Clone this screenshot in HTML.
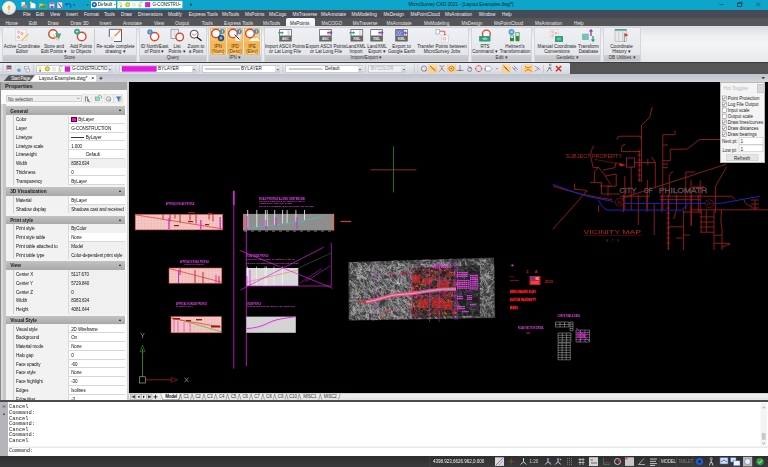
<!DOCTYPE html>
<html><head><meta charset="utf-8"><style>
*{margin:0;padding:0;box-sizing:border-box}
html,body{width:768px;height:467px;overflow:hidden;background:#000;font-family:"Liberation Sans",sans-serif;color:#222}
.a{position:absolute}
.t{position:absolute;white-space:nowrap}
svg{position:absolute;overflow:visible}
.menu span{position:absolute;top:1.1px;font-size:4.7px;color:#f0f0f0;line-height:8.2px;white-space:nowrap}
.tabs span{position:absolute;top:2.1px;font-size:4.7px;color:#e6e6e6;line-height:8px;white-space:nowrap}
.grp{position:absolute;top:26.7px;height:35.3px;background:linear-gradient(#eff0f3,#e6e8ec 60%,#e2e4e8);border:0.5px solid #d4d6da;border-radius:1px}
.glab{position:absolute;left:0;right:0;bottom:0;height:6.1px;background:linear-gradient(#cdcfd3,#c2c4c9);font-size:4.6px;line-height:6.1px;text-align:center;color:#333}
.bl{position:absolute;font-size:4.6px;line-height:5.2px;text-align:center;color:#1e1e1e;white-space:nowrap;transform:translateX(-50%)}
.pr{position:absolute;left:12.5px;width:112.1px;height:8.75px;background:#fff;border-bottom:1px solid #d6d6d6;border-left:1px solid #d0d0d0}
.pr .n{position:absolute;left:0;top:0;width:55.9px;height:8.75px;background:#f2f2f2;border-right:1px solid #dadada;font-size:4.5px;letter-spacing:-0.1px;line-height:8.4px;padding-top:1.2px;padding-left:2.6px;color:#111;white-space:nowrap;overflow:hidden}
.pr .v{position:absolute;left:55.9px;top:0;width:56.2px;height:8.75px;font-size:4.5px;letter-spacing:-0.1px;line-height:8.4px;padding-top:1.2px;padding-left:1.8px;color:#111;white-space:nowrap;overflow:hidden}
.ph{position:absolute;left:6.2px;width:118.4px;height:8.6px;background:linear-gradient(#c2c2c2,#a9a9a9);font-size:4.75px;font-weight:bold;line-height:8.6px;padding-top:1.2px;padding-left:4px;color:#1a1a1a}
.ph:after{content:"";position:absolute;right:3.8px;top:3px;border-left:1.9px solid transparent;border-right:1.9px solid transparent;border-bottom:2.2px solid #111}
</style></head><body>
<div class="a" style="left:0;top:0;width:768px;height:9.5px;background:#0da5c9"></div>
<div class="t" style="left:408.6px;top:0;height:9.5px;font-size:4.75px;line-height:9.5px;color:#10243a">MicroSurvey CAD 2021 - [Layout Examples.dwg*]</div>
<svg style="left:0;top:0" width="768" height="10" viewBox="0 0 768 10"><path d="M719.4 4.6H723.6" stroke="#123a4a" stroke-width="0.7"/><rect x="737.5" y="3.2" width="3.8" height="3.2" fill="none" stroke="#123a4a" stroke-width="0.8"/><path d="M738.5 3.2V2.3H742.1V5.5H741.3" stroke="#123a4a" stroke-width="0.6" fill="none"/><path d="M756.3 2.6L760.1 6.4M760.1 2.6L756.3 6.4" stroke="#123a4a" stroke-width="0.6"/></svg>

<div class="a menu" style="left:0;top:9.5px;width:768px;height:8.2px;background:#474b55">
 <span style="left:23px">File</span><span style="left:36px">Edit</span><span style="left:50px">View</span><span style="left:66px">Insert</span><span style="left:84px">Format</span><span style="left:104px">Tools</span><span style="left:121px">Draw</span><span style="left:138px">Dimensions</span><span style="left:168px">Modify</span><span style="left:188.7px">Express Tools</span><span style="left:222px">MsTools</span><span style="left:245px">MsPoints</span><span style="left:269px">MsCogo</span><span style="left:292.6px">MsTraverse</span><span style="left:321px">MsAnnotate</span><span style="left:351.5px">MsModeling</span><span style="left:383.4px">MsDesign</span><span style="left:410.6px">MsPointCloud</span><span style="left:445px">MsAnimation</span><span style="left:478.7px">Window</span><span style="left:502px">Help</span>
</div>
<div class="a tabs" style="left:0;top:17.7px;width:768px;height:8px;background:#555658">
 <div class="a" style="left:285.7px;top:0.6px;width:29.3px;height:7.4px;background:linear-gradient(#fbfbfc,#eef0f3);border-radius:1.5px 1.5px 0 0"></div>
 <span style="left:5.4px">Home</span><span style="left:29px">Edit</span><span style="left:47.8px">Draw</span><span style="left:70.5px">Draw 3D</span><span style="left:99.5px">Insert</span><span style="left:123px">Annotate</span><span style="left:154px">View</span><span style="left:175px">Output</span><span style="left:201.8px">Tools</span><span style="left:224px">Express Tools</span><span style="left:263px">MsTools</span><span style="left:290px;color:#222">MsPoints</span><span style="left:321.6px">MsCOGO</span><span style="left:352.8px">MsTraverse</span><span style="left:386.6px">MsAnnotate</span><span style="left:424px">MsModeling</span><span style="left:461.6px">MsDesign</span><span style="left:494px">MsPointCloud</span><span style="left:535px">MsAnimation</span><span style="left:574px">Help</span>
</div>

<div class="a" style="left:0;top:25.7px;width:768px;height:36px;background:linear-gradient(#d9dbe0,#eceef1 25%,#f3f4f6 50%,#e6e8eb)"></div>
<div class="grp" style="left:1.8px;width:135.5px"><div class="glab">Store</div></div>
<div class="grp" style="left:139px;width:67.80000000000001px"><div class="glab">Query</div></div>
<div class="grp" style="left:208.1px;width:54.29999999999998px"><div class="glab">IPN &#9662;</div></div>
<div class="grp" style="left:263.5px;width:205.7px"><div class="glab">Import/Export &#9662;</div></div>
<div class="grp" style="left:471px;width:61.39999999999998px"><div class="glab">Edit &#9662;</div></div>
<div class="grp" style="left:534px;width:67.20000000000005px"><div class="glab">Geodetic &#9662;</div></div>
<div class="grp" style="left:602.8px;width:38.700000000000045px"><div class="glab">DB Utilities &#9662;</div></div>
<div class="a" style="left:94px;top:29px;width:0.6px;height:24px;background:#c9cbd0"></div>
<div class="a" style="left:210px;top:28px;width:16px;height:26.5px;background:linear-gradient(#fde2a4,#fbcc78 30%,#f8b24a 62%,#f9bc58 85%,#fcd68e);border:0.4px solid #f0b860"></div>
<div class="a" style="left:226.5px;top:28px;width:16.80000000000001px;height:26.5px;background:linear-gradient(#fde2a4,#fbcc78 30%,#f8b24a 62%,#f9bc58 85%,#fcd68e);border:0.4px solid #f0b860"></div>
<div class="a" style="left:243.8px;top:28px;width:16.69999999999999px;height:26.5px;background:linear-gradient(#fde2a4,#fbcc78 30%,#f8b24a 62%,#f9bc58 85%,#fcd68e);border:0.4px solid #f0b860"></div>
<div class="bl" style="left:22px;top:43.6px">Active Coordinate<br>Editor</div>
<div class="bl" style="left:54px;top:43.6px">Store and<br>Edit Points &#9662;</div>
<div class="bl" style="left:81px;top:43.6px">Add Points<br>to Objects</div>
<div class="bl" style="left:115.5px;top:43.6px">Re-scale complete<br>drawing &#9662;</div>
<div class="bl" style="left:154.5px;top:43.6px">ID North/East<br>of Point &#9662;</div>
<div class="bl" style="left:177px;top:43.6px">List<br>Points &#9662;</div>
<div class="bl" style="left:196px;top:43.6px">Zoom to<br>a Point</div>
<div class="bl" style="left:218px;top:43.6px;color:#5a3c14">IPN<br>(Num)</div>
<div class="bl" style="left:235px;top:43.6px;color:#5a3c14">IPD<br>(Desc)</div>
<div class="bl" style="left:252px;top:43.6px;color:#5a3c14">IPE<br>(Elev)</div>
<div class="bl" style="left:285px;top:43.6px">Import ASCII Points<br>or Lat Long File</div>
<div class="bl" style="left:326px;top:43.6px">Export ASCII Points<br>or Lat Long File</div>
<div class="bl" style="left:356px;top:43.6px">LandXML<br>Import</div>
<div class="bl" style="left:377px;top:43.6px">LandXML<br>Export &#9662;</div>
<div class="bl" style="left:401.5px;top:43.6px">Export to<br>Google Earth</div>
<div class="bl" style="left:442px;top:43.6px">Transfer Points between<br>MicroSurvey Jobs</div>
<div class="bl" style="left:485px;top:43.6px">RTS<br>Command &#9662;</div>
<div class="bl" style="left:515px;top:43.6px">Helmert&#39;s<br>Transformation</div>
<div class="bl" style="left:557px;top:43.6px">Manual Coordinate<br>Conversions</div>
<div class="bl" style="left:588.5px;top:43.6px">Transform<br>Database</div>
<div class="bl" style="left:621.5px;top:43.6px">Coordinate<br>History &#9662;</div>
<div class="a" style="left:0;top:61.5px;width:768px;height:0.8px;background:#3a3a3a"></div>
<div class="a" style="left:0;top:62px;width:768px;height:12px;background:#555"></div>
<div class="a" style="left:0;top:82.3px;width:128.5px;height:318px;background:#d0d0d0"></div>
<div class="a" style="left:0;top:82.3px;width:127px;height:318px;background:#f7f7f7"></div>
<div class="a" style="left:128.5px;top:82.3px;width:640px;height:311px;background:#000"></div>
<div class="a" style="left:128.5px;top:393.3px;width:640px;height:6.7px;background:#f0f0f0"></div>
<div class="a" style="left:0;top:400px;width:768px;height:2px;background:#4a4a4a"></div>
<div class="a" style="left:0;top:402px;width:768px;height:53.6px;background:#fff"></div>
<div class="a" style="left:0;top:455.6px;width:768px;height:11.4px;background:linear-gradient(#2e2e31,#3a3a3d)"></div>
<svg style="left:0;top:0" width="768" height="62" viewBox="0 0 768 62"><rect x="15.5" y="29.1" width="11.3" height="11.4" fill="#f2f2f4" stroke="#c8c8cc" stroke-width="0.4"/><circle cx="18.6" cy="32" r="0.9" fill="none" stroke="#e05a4a" stroke-width="0.5"/><circle cx="22" cy="33.6" r="1.1" fill="none" stroke="#e05a4a" stroke-width="0.5"/><circle cx="18.5" cy="37.2" r="1.1" fill="none" stroke="#e05a4a" stroke-width="0.5"/><path d="M21.5 40.8L28.3 34" stroke="#f2c04a" stroke-width="1.3"/><circle cx="53" cy="34" r="4.2" fill="#fff" stroke="#d9472b" stroke-width="1.5"/><path d="M55 33.2L61.2 33.4L58.8 39.5Z" fill="#3fa59a"/><path d="M53.2 34.4L58.2 40.6" stroke="#f2c45a" stroke-width="1.2"/><circle cx="81.7" cy="36.5" r="4.3" fill="#fff" stroke="#d9472b" stroke-width="1.4"/><circle cx="77" cy="31.6" r="2.9" fill="#2e9d86"/><path d="M75.6 31.6H78.4M77 30.2V33" stroke="#dff" stroke-width="0.7"/><rect x="109.3" y="29.3" width="12.2" height="12.2" fill="#fafafa"/><path d="M109.3 37V29.3H121.5V41.5H114" stroke="#4a4f5a" stroke-width="0.9" fill="none"/><rect x="109.6" y="36.5" width="4.5" height="4.8" fill="#e4e4e4"/><path d="M114.6 36.2L120.8 30" stroke="#f2913a" stroke-width="1.5"/><circle cx="154.6" cy="36.6" r="4.1" fill="#fff" stroke="#d9472b" stroke-width="1.4"/><circle cx="150" cy="31.9" r="2.7" fill="#3d8fd6"/><rect x="149.65" y="31.299999999999997" width="0.7" height="1.8" fill="#fff"/><rect x="149.65" y="30.4" width="0.7" height="0.6" fill="#fff"/><rect x="171" y="29.2" width="7.3" height="9.1" fill="#eef0f4" stroke="#6b7080" stroke-width="0.6"/><path d="M172.5 31H176.8M172.5 33H176.8M172.5 35H176.8M174.6 30V37" stroke="#c4c8d0" stroke-width="0.4"/><circle cx="179.7" cy="37" r="3.8" fill="#fff" stroke="#d9472b" stroke-width="1.4"/><circle cx="194.2" cy="34.2" r="4" fill="#fff" stroke="#333" stroke-width="0.9"/><path d="M197 37.2L201.6 40.8" stroke="#222" stroke-width="1.4"/><path d="M191.8 33.6L194.2 35.4L196.6 33.6" stroke="#d04040" stroke-width="0.7" fill="none"/><circle cx="216" cy="33.5" r="4.3" fill="#fff" stroke="#d9472b" stroke-width="1.4"/><circle cx="222.3" cy="31.5" r="2.5" fill="#3d8fd6"/><rect x="221.95000000000002" y="30.9" width="0.7" height="1.8" fill="#fff"/><rect x="221.95000000000002" y="30.0" width="0.7" height="0.6" fill="#fff"/><circle cx="221" cy="38.1" r="3.2" fill="#1d4f7a"/><path d="M219.6 37.4H222.4M219.6 38.8H222.4M220.3 36.7V39.5M221.7 36.7V39.5" stroke="#fff" stroke-width="0.4"/><circle cx="233" cy="33.5" r="4.3" fill="#fff" stroke="#d9472b" stroke-width="1.4"/><circle cx="239.3" cy="31.5" r="2.5" fill="#3d8fd6"/><rect x="238.95000000000002" y="30.9" width="0.7" height="1.8" fill="#fff"/><rect x="238.95000000000002" y="30.0" width="0.7" height="0.6" fill="#fff"/><rect x="235.5" y="35.5" width="5" height="5.5" fill="#e8eef6"/><path d="M234.6 34.6L239.4 39.4" stroke="#333" stroke-width="1"/><circle cx="250" cy="33.5" r="4.3" fill="#fff" stroke="#d9472b" stroke-width="1.4"/><circle cx="256.3" cy="31.5" r="2.5" fill="#3d8fd6"/><rect x="255.95000000000002" y="30.9" width="0.7" height="1.8" fill="#fff"/><rect x="255.95000000000002" y="30.0" width="0.7" height="0.6" fill="#fff"/><path d="M249 41L253 37.8L255 39L257.2 37.6L260 41Z" fill="#fff"/><rect x="279.2" y="29.1" width="12.6" height="12.5" rx="0.6" fill="#666"/><rect x="280.0" y="29.900000000000002" width="11" height="5.6" fill="#fff"/><rect x="287.4" y="30.400000000000002" width="2.6" height="4.6" fill="#d8d8d8"/><text x="285.5" y="39.7" font-size="3.4" font-weight="bold" fill="#eee" text-anchor="middle" font-family="Liberation Sans">ASC</text><path d="M278.2 32.7H282.0" stroke="#27a58a" stroke-width="1.3"/><path d="M281.7 31.0L283.8 32.7L281.7 34.4Z" fill="#27a58a"/><rect x="319.2" y="29.1" width="12.6" height="12.5" rx="0.6" fill="#666"/><rect x="320.0" y="29.900000000000002" width="11" height="5.6" fill="#fff"/><rect x="327.4" y="30.400000000000002" width="2.6" height="4.6" fill="#d8d8d8"/><text x="325.5" y="39.7" font-size="3.4" font-weight="bold" fill="#eee" text-anchor="middle" font-family="Liberation Sans">ASC</text><path d="M327.2 32.7H330.7" stroke="#8e3ea8" stroke-width="1.3"/><path d="M330.2 30.700000000000003L332.59999999999997 32.7L330.2 34.7Z" fill="#8e3ea8"/><rect x="350.5" y="29.1" width="12.6" height="12.5" rx="0.6" fill="#666"/><rect x="351.3" y="29.900000000000002" width="11" height="5.6" fill="#fff"/><rect x="358.7" y="30.400000000000002" width="2.6" height="4.6" fill="#d8d8d8"/><text x="356.8" y="39.7" font-size="3.4" font-weight="bold" fill="#eee" text-anchor="middle" font-family="Liberation Sans">XML</text><path d="M349.5 32.7H353.3" stroke="#27a58a" stroke-width="1.3"/><path d="M353.0 31.0L355.1 32.7L353.0 34.4Z" fill="#27a58a"/><rect x="370.3" y="29.1" width="12.6" height="12.5" rx="0.6" fill="#666"/><rect x="371.1" y="29.900000000000002" width="11" height="5.6" fill="#fff"/><rect x="378.5" y="30.400000000000002" width="2.6" height="4.6" fill="#d8d8d8"/><text x="376.6" y="39.7" font-size="3.4" font-weight="bold" fill="#eee" text-anchor="middle" font-family="Liberation Sans">XML</text><path d="M378.3 32.7H381.8" stroke="#8e3ea8" stroke-width="1.3"/><path d="M381.3 30.700000000000003L383.7 32.7L381.3 34.7Z" fill="#8e3ea8"/><rect x="395.2" y="29.1" width="12.6" height="12.5" rx="0.6" fill="#666"/><rect x="396.0" y="29.900000000000002" width="11" height="5.6" fill="#fff"/><rect x="403.4" y="30.400000000000002" width="2.6" height="4.6" fill="#d8d8d8"/><text x="401.5" y="39.7" font-size="3.4" font-weight="bold" fill="#eee" text-anchor="middle" font-family="Liberation Sans">KML</text><rect x="396" y="29.9" width="8" height="5.6" fill="#6a7ad0"/><path d="M396.5 31L399 33L396.5 35M399 31L401.5 33L399 35" stroke="#dde" stroke-width="0.5" fill="none"/><path d="M403.5 33H405.5" stroke="#8e3ea8" stroke-width="1.3"/><path d="M405 31.2L407.4 33L405 34.8Z" fill="#8e3ea8"/><rect x="436" y="29.6" width="3.6" height="4.4" fill="#fff" stroke="#4a6a9a" stroke-width="0.4"/><path d="M439.8 31.2H444.8V34.6" stroke="#e03030" stroke-width="0.8" fill="none"/><path d="M443.6 34.2L444.8 35.6L446 34.2Z" fill="#e03030"/><rect x="441.2" y="35.4" width="7.2" height="6.6" fill="#fff" stroke="#b0b0b0" stroke-width="0.4"/><circle cx="444.5" cy="38.8" r="1.4" fill="none" stroke="#e06050" stroke-width="0.6"/><circle cx="486.4" cy="34" r="3.9" fill="#fff" stroke="#d9472b" stroke-width="1.4"/><rect x="479.1" y="36" width="11.4" height="5.5" rx="0.8" fill="#2e9d7a"/><text x="484.8" y="40.3" font-size="3.6" font-weight="bold" fill="#fff" text-anchor="middle" font-family="Liberation Sans">&lt;/&gt;</text><rect x="510" y="35.6" width="4" height="5.6" rx="0.6" fill="#2d8a45"/><rect x="515.5" y="32" width="4" height="9.2" rx="0.6" fill="#2d8a45"/><rect x="510.6" y="36" width="2.8" height="2" fill="#cfe8cf"/><rect x="516.1" y="32.5" width="2.8" height="3.5" fill="#cfe8cf"/><circle cx="511.5" cy="31.9" r="3" fill="#5a9ad8"/><path d="M510.2 31.3H512.8M510.2 32.5H512.8M510.9 30.6V33.2M512.1 30.6V33.2" stroke="#fff" stroke-width="0.35"/><rect x="550" y="29.2" width="8.7" height="8.7" fill="#f4f0f0" stroke="#c8c8cc" stroke-width="0.4"/><circle cx="552.6" cy="31.8" r="1" fill="none" stroke="#e07a6a" stroke-width="0.5"/><circle cx="556" cy="33.2" r="1" fill="none" stroke="#e07a6a" stroke-width="0.5"/><circle cx="552.6" cy="35.6" r="1" fill="none" stroke="#e07a6a" stroke-width="0.5"/><rect x="555" y="36" width="8" height="6" rx="0.5" fill="#2e9d7a"/><path d="M556.8 38.2H561M556.8 39.8H561" stroke="#dff" stroke-width="0.5"/><rect x="582" y="33.7" width="6.8" height="6.3" fill="#5fb5a8" opacity="0.8"/><path d="M591 36V30.5" stroke="#8a3aa0" stroke-width="1.3"/><path d="M588.8 31.6L591 29L593.2 31.6Z" fill="#8a3aa0"/><path d="M593 36V40.5" stroke="#2a9a80" stroke-width="1.3"/><path d="M590.8 39.6L593 42.2L595.2 39.6Z" fill="#2a9a80"/><rect x="615" y="29.5" width="11.5" height="12" fill="#e8e8ea" stroke="#8a8a90" stroke-width="0.4"/><rect x="615" y="29.2" width="11.5" height="1.4" fill="#2e9d7a"/><path d="M618.8 30.6V41.4M622.6 30.6V41.4" stroke="#b8b8bc" stroke-width="0.5"/><path d="M624.4 33V42" stroke="#555" stroke-width="0.5"/><path d="M624.6 33.2L628.6 35L624.6 36.8Z" fill="#e83030"/></svg>
<div class="a" style="left:0;top:62.1px;width:768px;height:0.9px;background:#3c3c3c"></div>
<div class="a" style="left:0;top:63px;width:569.7px;height:10.6px;background:linear-gradient(#eceef2,#d6d9e0);border-radius:0 1px 1px 0"></div>
<div class="a" style="left:35.8px;top:65.3px;width:77.2px;height:8.100000000000009px;background:#fff;border:0.4px solid #c8ccd4"></div><div class="a" style="left:108px;top:65.6px;width:4.7px;height:7.500000000000009px;background:linear-gradient(#e8eaee,#c8ccd4)"></div><div class="a" style="left:109.4px;top:68.75px;border-left:1px solid transparent;border-right:1px solid transparent;border-top:1.2px solid #222"></div>
<div class="a" style="left:118.8px;top:65.3px;width:78.2px;height:8.100000000000009px;background:#fff;border:0.4px solid #c8ccd4"></div><div class="a" style="left:192px;top:65.6px;width:4.7px;height:7.500000000000009px;background:linear-gradient(#e8eaee,#c8ccd4)"></div><div class="a" style="left:193.4px;top:68.75px;border-left:1px solid transparent;border-right:1px solid transparent;border-top:1.2px solid #222"></div>
<div class="a" style="left:201.8px;top:65.3px;width:78.5px;height:8.100000000000009px;background:#fff;border:0.4px solid #c8ccd4"></div><div class="a" style="left:275.3px;top:65.6px;width:4.7px;height:7.500000000000009px;background:linear-gradient(#e8eaee,#c8ccd4)"></div><div class="a" style="left:276.7px;top:68.75px;border-left:1px solid transparent;border-right:1px solid transparent;border-top:1.2px solid #222"></div>
<div class="a" style="left:285px;top:65.3px;width:78px;height:8.100000000000009px;background:#fff;border:0.4px solid #c8ccd4"></div><div class="a" style="left:358px;top:65.6px;width:4.7px;height:7.500000000000009px;background:linear-gradient(#e8eaee,#c8ccd4)"></div><div class="a" style="left:359.4px;top:68.75px;border-left:1px solid transparent;border-right:1px solid transparent;border-top:1.2px solid #222"></div>
<div class="a" style="left:368px;top:65.3px;width:38.39999999999998px;height:8.100000000000009px;background:#f0f0f2;border:0.4px solid #c8ccd4"></div><div class="a" style="left:401.4px;top:65.6px;width:4.7px;height:7.500000000000009px;background:linear-gradient(#e8eaee,#c8ccd4)"></div><div class="a" style="left:402.79999999999995px;top:68.75px;border-left:1px solid transparent;border-right:1px solid transparent;border-top:1.2px solid #222"></div>
<svg style="left:0;top:0" width="768" height="84" viewBox="0 0 768 84"><path d="M3 64.5V73" stroke="#8a8e98" stroke-width="0.6" stroke-dasharray="0.6 1"/><path d="M33.5 64.5V72.5M116 64.5V72.5M199.5 64.5V72.5M282.7 64.5V72.5M365.5 64.5V72.5" stroke="#b8bcc4" stroke-width="0.5"/><rect x="6.5" y="65.5" width="5" height="2" fill="#4a5aa0"/><rect x="6.5" y="67.6" width="5" height="1.8" fill="#e04848"/><rect x="6.5" y="69.5" width="5" height="2" fill="#f4f4f4" stroke="#999" stroke-width="0.3"/><rect x="15.2" y="66" width="5.5" height="2" fill="#f0f0f0" stroke="#9aa" stroke-width="0.3"/><circle cx="19" cy="70.2" r="1.8" fill="#5aa0e8"/><rect x="24.3" y="66.5" width="4" height="2.5" fill="#f0f0f0" stroke="#777" stroke-width="0.4"/><rect x="26" y="69" width="3.5" height="3" fill="#f0f0f0" stroke="#777" stroke-width="0.4"/><ellipse cx="40.2" cy="68.2" rx="1.7" ry="2" fill="#f4ec70"/><rect x="39.3" y="70" width="1.8" height="1.6" fill="#777"/><circle cx="47.3" cy="68.8" r="2.1" fill="#eee040" stroke="#8a8a10" stroke-width="0.7"/><rect x="52" y="67" width="4" height="4" fill="#e8e8e8"/><rect x="58.2" y="68.6" width="3.4" height="3" fill="#f0d090"/><path d="M59.5 68.6V67.5A1.4 1.4 0 0 1 62.3 67.5" stroke="#7a8ab0" stroke-width="0.7" fill="none"/><rect x="65" y="66.7" width="5" height="4.9" fill="#f010e8" stroke="#802080" stroke-width="0.3"/><rect x="122" y="66.4" width="34.4" height="5" fill="#f210ec" stroke="#6a106a" stroke-width="0.3"/><path d="M205 69H240M289 69H322.5" stroke="#333" stroke-width="0.5"/><defs><linearGradient id="og" x1="0" y1="0" x2="0" y2="1"><stop offset="0" stop-color="#fde6b0"/><stop offset="0.5" stop-color="#fbcd78"/><stop offset="1" stop-color="#fbd890"/></linearGradient></defs><path d="M414.3 63.5V73.5" stroke="#a8acb4" stroke-width="0.4"/><path d="M417.8 64.5V73" stroke="#8a8e98" stroke-width="0.6" stroke-dasharray="0.6 1"/><rect x="428.75" y="64.7" width="8.25" height="7.8" fill="url(#og)" stroke="#eec070" stroke-width="0.3"/><rect x="447.1" y="64.7" width="8.599999999999966" height="7.8" fill="url(#og)" stroke="#eec070" stroke-width="0.3"/><rect x="502.1" y="64.7" width="8.199999999999989" height="7.8" fill="url(#og)" stroke="#eec070" stroke-width="0.3"/><rect x="524" y="64.7" width="8.200000000000045" height="7.8" fill="url(#og)" stroke="#eec070" stroke-width="0.3"/><circle cx="424" cy="68.6" r="2.7" fill="none" stroke="#555a66" stroke-width="0.6"/><circle cx="425.8" cy="70.6" r="0.7" fill="#e03030"/><path d="M430 65.8L435.6 71" stroke="#8a3010" stroke-width="0.8"/><path d="M439.3 65.6Q441.8 67.5 444.5 65.6M439.3 71.6L441.9 68.6L444.5 71.6" stroke="#4a5060" stroke-width="0.55" fill="none"/><circle cx="441.9" cy="68.2" r="0.75" fill="#e03030"/><circle cx="451.4" cy="68.6" r="2.5" fill="none" stroke="#b07020" stroke-width="0.8"/><circle cx="451.4" cy="68.6" r="0.75" fill="#e03030"/><path d="M460 65V70.5M456.5 70.5H463.5" stroke="#4a5060" stroke-width="0.55"/><circle cx="460" cy="70.5" r="0.65" fill="#e03030"/><circle cx="469.7" cy="69.6" r="2" fill="none" stroke="#4a5060" stroke-width="0.55"/><path d="M467.8 65.8L471.2 68.2" stroke="#4a5060" stroke-width="0.5"/><circle cx="471" cy="67.8" r="0.6" fill="#e03030"/><circle cx="478.7" cy="68.6" r="3" fill="none" stroke="#d05050" stroke-width="0.6"/><circle cx="478.7" cy="65.6" r="0.6" fill="#e03030"/><circle cx="478.7" cy="71.6" r="0.6" fill="#e03030"/><circle cx="475.7" cy="68.6" r="0.6" fill="#e03030"/><circle cx="481.7" cy="68.6" r="0.6" fill="#e03030"/><path d="M485.5 66.2H490L491.8 68.6L490 71H485.5Z" fill="#fff" stroke="#6a7080" stroke-width="0.5"/><circle cx="484.8" cy="69.2" r="0.65" fill="#e03030"/><circle cx="497" cy="68.6" r="0.7" fill="#e03030"/><path d="M503.5 65.5L509 71.5" stroke="#6a3010" stroke-width="0.75"/><circle cx="506.2" cy="68.5" r="0.65" fill="#e03030"/><path d="M512 67L516 71.5M513.8 65.6L518 70" stroke="#6a78a0" stroke-width="0.7"/><circle cx="514.8" cy="68.6" r="0.6" fill="#e03030"/><path d="M521.6 64.8V72.8" stroke="#b0b4bc" stroke-width="0.5"/><path d="M525 66Q528 69.5 531.5 66M525 71.5Q528 67.8 531.5 71.5" stroke="#d04020" stroke-width="0.7" fill="none"/><path d="M534.5 65.8L538.5 68.6L534.5 71.4" stroke="#6a78a0" stroke-width="0.6" fill="none"/><path d="M537.5 67.2L540 70" stroke="#e03030" stroke-width="0.6"/><path d="M543.5 64.8V72.8" stroke="#b0b4bc" stroke-width="0.5"/><path d="M550.2 65.6A0.8 0.8 0 1 1 550.3 65.6M549.5 67.2L548.5 69.5L547 71.5M549.5 67.2L550.5 69.2L552 71M548.5 68.2L551.5 67.8" stroke="#555" stroke-width="0.65" fill="none"/><path d="M556 66L561.2 71.2M561.2 66L556 71.2" stroke="#e82818" stroke-width="1.5"/></svg>
<div class="t" style="left:72px;top:65.3px;font-size:4.5px;letter-spacing:-0.2px;line-height:8.1px;color:#222">G-CONSTRUCTIO</div>
<div class="t" style="left:158px;top:65.3px;font-size:4.6px;line-height:8.1px;color:#222">BYLAYER</div>
<div class="t" style="left:241px;top:65.3px;font-size:4.6px;line-height:8.1px;color:#222">BYLAYER</div>
<div class="t" style="left:325px;top:65.3px;font-size:4.6px;line-height:8.1px;color:#222">Default</div>
<div class="t" style="left:371px;top:65.3px;font-size:4.6px;line-height:8.1px;color:#a8a8ac">BYCOLOR</div>
<div class="a" style="left:0;top:73.6px;width:768px;height:8.7px;background:linear-gradient(#bfc3cd,#d2d4da)"></div>
<svg style="left:0;top:0" width="768" height="84" viewBox="0 0 768 84"><path d="M3.8 81L8.8 75.2H34.5L30 81Z" fill="#545454"/><path d="M30.5 81.4L35.5 75.1H96.2V81.4Z" fill="#fff"/><path d="M91.8 77L93.8 79.2M93.8 77L91.8 79.2" stroke="#111" stroke-width="0.6"/><path d="M99.3 78.3H102.5M100.9 76.7V79.9" stroke="#222" stroke-width="0.7"/><path d="M761.5 77.2H765L763.25 79Z" fill="#111"/></svg>
<div class="t" style="left:11px;top:75.6px;font-size:4.5px;letter-spacing:-0.2px;line-height:6px;color:#ffffff">Start Page</div>
<div class="t" style="left:39px;top:76px;font-size:4.75px;line-height:6px;color:#111">Layout Examples.dwg*</div>
<div class="a" style="left:0;top:82.3px;width:127px;height:7.7px;background:#a8a8a8"></div>
<div class="t" style="left:5px;top:83.3px;font-size:5.6px;font-weight:bold;line-height:7.7px;color:#1e1e1e">Properties</div>
<div class="a" style="left:0;top:90px;width:127px;height:310px;background:#fafafa"></div>
<div class="a" style="left:0;top:104px;width:6.2px;height:296px;background:linear-gradient(90deg,#dadada 0,#dadada 2.9px,#c6c6c6 2.9px)"></div>
<div class="a" style="left:6.2px;top:104px;width:118.4px;height:296px;background:#f3f3f3"></div>
<div class="a" style="left:0;top:82.3px;width:1.2px;height:318px;background:#8a8a8a"></div>
<div class="a" style="left:6px;top:94.7px;width:75.7px;height:7.8px;background:#eeeeee;border:0.5px solid #d0d0d0"></div>
<div class="t" style="left:8px;top:95.7px;font-size:4.5px;line-height:7.8px;color:#333">No selection</div>
<svg style="left:0;top:0" width="130" height="110" viewBox="0 0 130 110"><path d="M77 97.8L78.3 99.1L79.6 97.8" stroke="#555" stroke-width="0.5" fill="none"/><rect x="83" y="94.7" width="9" height="8.3" fill="#f0f0f0" stroke="#ccc" stroke-width="0.4"/><rect x="94" y="94.7" width="9" height="8.3" fill="#f0f0f0" stroke="#ccc" stroke-width="0.4"/><rect x="104.5" y="94.7" width="9" height="8.3" fill="#f0f0f0" stroke="#ccc" stroke-width="0.4"/><rect x="114" y="94.7" width="9" height="8.3" fill="#f0f0f0" stroke="#ccc" stroke-width="0.4"/><path d="M85.5 96.5V101.5M85.5 97H87.5V101.5M88.5 99V101.5H90" stroke="#333" stroke-width="0.55" fill="none"/><rect x="95.5" y="97" width="4" height="3.5" fill="#9adcc8" stroke="#2a7a6a" stroke-width="0.4"/><path d="M98 96.5A2 2 0 0 1 101.5 98.5" stroke="#2a7a6a" stroke-width="0.5" fill="none"/><circle cx="108.5" cy="99" r="2.3" fill="#e8e8f0" stroke="#555" stroke-width="0.45"/><path d="M108.5 99L110.5 101" stroke="#2a7a6a" stroke-width="0.6"/><path d="M115.8 96.5H121.5L119.5 99V101.8L117.8 100.8V99Z" fill="#3a7ac8"/><path d="M119 99.5L121.5 97.5V101.5Z" fill="#f0c040"/></svg>
<div class="a" style="left:0;top:0;width:127px;height:400px;overflow:hidden;will-change:transform"><div class="ph" style="top:106.40px">General</div><div class="pr" style="top:115.10px"><div class="n">Color</div><div class="v"><span style="display:inline-block;width:5.6px;height:5px;background:#f210ec;border:0.3px solid #600;vertical-align:-0.8px;margin-right:1.4px"></span>ByLayer</div></div><div class="pr" style="top:123.85px"><div class="n">Layer</div><div class="v">G-CONSTRUCTION</div></div><div class="pr" style="top:132.60px"><div class="n">Linetype</div><div class="v"><span style="display:inline-block;width:13px;border-top:0.5px solid #333;vertical-align:1.2px;margin-right:1.5px"></span>ByLayer</div></div><div class="pr" style="top:141.35px"><div class="n">Linetype scale</div><div class="v">1.000</div></div><div class="pr" style="top:150.10px"><div class="n">Lineweight</div><div class="v"><span style="padding-left:15px">Default</span></div></div><div class="pr" style="top:158.85px"><div class="n">Width</div><div class="v" style="background:#f0f0f0">8383.634</div></div><div class="pr" style="top:167.60px"><div class="n">Thickness</div><div class="v">0</div></div><div class="pr" style="top:176.35px"><div class="n">Transparency</div><div class="v">ByLayer</div></div><div class="ph" style="top:187.20px">3D Visualization</div><div class="pr" style="top:195.90px"><div class="n">Material</div><div class="v">ByLayer</div></div><div class="pr" style="top:204.65px"><div class="n">Shadow display</div><div class="v" style="background:#f0f0f0">Shadows cast and received</div></div><div class="ph" style="top:215.50px">Print style</div><div class="pr" style="top:224.20px"><div class="n">Print style</div><div class="v" style="background:#f0f0f0">ByColor</div></div><div class="pr" style="top:232.95px"><div class="n">Print style table</div><div class="v">None</div></div><div class="pr" style="top:241.70px"><div class="n">Print table attached to</div><div class="v" style="background:#f0f0f0">Model</div></div><div class="pr" style="top:250.45px"><div class="n">Print table type</div><div class="v" style="background:#f0f0f0">Color-dependent print style</div></div><div class="ph" style="top:261.30px">View</div><div class="pr" style="top:270.00px"><div class="n">Center X</div><div class="v" style="background:#f0f0f0">5117.670</div></div><div class="pr" style="top:278.75px"><div class="n">Center Y</div><div class="v" style="background:#f0f0f0">5729.840</div></div><div class="pr" style="top:287.50px"><div class="n">Center Z</div><div class="v" style="background:#f0f0f0">0</div></div><div class="pr" style="top:296.25px"><div class="n">Width</div><div class="v" style="background:#f0f0f0">8383.634</div></div><div class="pr" style="top:305.00px"><div class="n">Height</div><div class="v" style="background:#f0f0f0">4081.644</div></div><div class="ph" style="top:315.85px">Visual Style</div><div class="pr" style="top:324.55px"><div class="n">Visual style</div><div class="v">2D Wireframe</div></div><div class="pr" style="top:333.30px"><div class="n">Background</div><div class="v">On</div></div><div class="pr" style="top:342.05px"><div class="n">Material mode</div><div class="v">None</div></div><div class="pr" style="top:350.80px"><div class="n">Halo gap</div><div class="v">0</div></div><div class="pr" style="top:359.55px"><div class="n">Face opacity</div><div class="v">-60</div></div><div class="pr" style="top:368.30px"><div class="n">Face style</div><div class="v">None</div></div><div class="pr" style="top:377.05px"><div class="n">Face highlight</div><div class="v">-30</div></div><div class="pr" style="top:385.80px"><div class="n">Edges</div><div class="v">Isolines</div></div><div class="pr" style="top:394.55px"><div class="n">Edge jitter</div><div class="v">-3</div></div></div>
<svg style="left:0;top:0;clip-path:inset(82.3px 0 73.7px 128.5px);will-change:transform" width="768" height="467" viewBox="0 0 768 467" fill="none"><path d="M370.8 169.8H416.4" stroke="#8c2a22" stroke-width="1"/><path d="M393.5 146.4V192.4" stroke="#2c8a2c" stroke-width="0.8"/><path d="M233.8 190.5V368.6M246.3 214V366" stroke="#e020e0" stroke-width="0.8"/><path d="M331.4 243V286" stroke="#e020e0" stroke-width="0.6"/><path d="M233.8 191V205" stroke="#e020e0" stroke-width="1.6"/><rect x="135.2" y="214.3" width="87.5" height="15.599999999999994" fill="#f2cac6" stroke="#e04040" stroke-width="0.6"/><path d="M138.4 214.3V229.9" stroke="#f09a9a" stroke-width="0.25"/><path d="M141.7 214.3V229.9" stroke="#f09a9a" stroke-width="0.25"/><path d="M144.9 214.3V229.9" stroke="#f09a9a" stroke-width="0.25"/><path d="M148.2 214.3V229.9" stroke="#f09a9a" stroke-width="0.25"/><path d="M151.4 214.3V229.9" stroke="#f09a9a" stroke-width="0.25"/><path d="M154.6 214.3V229.9" stroke="#f09a9a" stroke-width="0.25"/><path d="M157.9 214.3V229.9" stroke="#f09a9a" stroke-width="0.25"/><path d="M161.1 214.3V229.9" stroke="#f09a9a" stroke-width="0.25"/><path d="M164.4 214.3V229.9" stroke="#f09a9a" stroke-width="0.25"/><path d="M167.6 214.3V229.9" stroke="#f09a9a" stroke-width="0.25"/><path d="M170.8 214.3V229.9" stroke="#f09a9a" stroke-width="0.25"/><path d="M174.1 214.3V229.9" stroke="#f09a9a" stroke-width="0.25"/><path d="M177.3 214.3V229.9" stroke="#f09a9a" stroke-width="0.25"/><path d="M180.6 214.3V229.9" stroke="#f09a9a" stroke-width="0.25"/><path d="M183.8 214.3V229.9" stroke="#f09a9a" stroke-width="0.25"/><path d="M187.1 214.3V229.9" stroke="#f09a9a" stroke-width="0.25"/><path d="M190.3 214.3V229.9" stroke="#f09a9a" stroke-width="0.25"/><path d="M193.5 214.3V229.9" stroke="#f09a9a" stroke-width="0.25"/><path d="M196.8 214.3V229.9" stroke="#f09a9a" stroke-width="0.25"/><path d="M200.0 214.3V229.9" stroke="#f09a9a" stroke-width="0.25"/><path d="M203.3 214.3V229.9" stroke="#f09a9a" stroke-width="0.25"/><path d="M206.5 214.3V229.9" stroke="#f09a9a" stroke-width="0.25"/><path d="M209.7 214.3V229.9" stroke="#f09a9a" stroke-width="0.25"/><path d="M213.0 214.3V229.9" stroke="#f09a9a" stroke-width="0.25"/><path d="M216.2 214.3V229.9" stroke="#f09a9a" stroke-width="0.25"/><path d="M219.5 214.3V229.9" stroke="#f09a9a" stroke-width="0.25"/><path d="M135.2 217.4H222.7" stroke="#f0a0a0" stroke-width="0.25"/><path d="M135.2 220.5H222.7" stroke="#f0a0a0" stroke-width="0.25"/><path d="M135.2 223.7H222.7" stroke="#f0a0a0" stroke-width="0.25"/><path d="M135.2 226.8H222.7" stroke="#f0a0a0" stroke-width="0.25"/><path d="M135.2 214.8L222.7 228.9" stroke="#e03030" stroke-width="0.7"/><path d="M163 214.5V219.5" stroke="#c02020" stroke-width="0.9"/><path d="M170 214.5V221.5" stroke="#c02020" stroke-width="0.9"/><path d="M175 214.5V218.5" stroke="#c02020" stroke-width="0.9"/><path d="M180 214.5V222.5" stroke="#c02020" stroke-width="0.9"/><path d="M190 214.5V220.5" stroke="#c02020" stroke-width="0.9"/><path d="M196 214.5V223.5" stroke="#c02020" stroke-width="0.9"/><path d="M209 214.5V219.5" stroke="#c02020" stroke-width="0.9"/><path d="M213 214.5V221.5" stroke="#c02020" stroke-width="0.9"/><path d="M169 218V229.6M200.8 220V229.6M220.2 217V229.6" stroke="#e020e0" stroke-width="1.3"/><rect x="174" y="225" width="5" height="1.2" fill="#a01818"/><rect x="188" y="221" width="5" height="1.2" fill="#a01818"/><rect x="205" y="224" width="4" height="1.2" fill="#a01818"/><rect x="188" y="212.2" width="7" height="1" fill="#c02020"/><rect x="208" y="213" width="5" height="1.2" fill="#a01818"/><text x="165.8" y="204.5" font-size="2.9" fill="#f040f0" opacity="1" font-family="Liberation Sans" font-weight="bold" textLength="28.7" lengthAdjust="spacingAndGlyphs">APPROACH ROAD PROFILE</text><rect x="169" y="268" width="52.80000000000001" height="15.199999999999989" fill="#f2cac6" stroke="#e04040" stroke-width="0.6"/><path d="M172.3 268V283.2" stroke="#f09a9a" stroke-width="0.25"/><path d="M175.6 268V283.2" stroke="#f09a9a" stroke-width="0.25"/><path d="M178.9 268V283.2" stroke="#f09a9a" stroke-width="0.25"/><path d="M182.2 268V283.2" stroke="#f09a9a" stroke-width="0.25"/><path d="M185.5 268V283.2" stroke="#f09a9a" stroke-width="0.25"/><path d="M188.8 268V283.2" stroke="#f09a9a" stroke-width="0.25"/><path d="M192.1 268V283.2" stroke="#f09a9a" stroke-width="0.25"/><path d="M195.4 268V283.2" stroke="#f09a9a" stroke-width="0.25"/><path d="M198.7 268V283.2" stroke="#f09a9a" stroke-width="0.25"/><path d="M202.0 268V283.2" stroke="#f09a9a" stroke-width="0.25"/><path d="M205.3 268V283.2" stroke="#f09a9a" stroke-width="0.25"/><path d="M208.6 268V283.2" stroke="#f09a9a" stroke-width="0.25"/><path d="M211.9 268V283.2" stroke="#f09a9a" stroke-width="0.25"/><path d="M215.2 268V283.2" stroke="#f09a9a" stroke-width="0.25"/><path d="M218.5 268V283.2" stroke="#f09a9a" stroke-width="0.25"/><path d="M169 271.0H221.8" stroke="#f0a0a0" stroke-width="0.25"/><path d="M169 274.1H221.8" stroke="#f0a0a0" stroke-width="0.25"/><path d="M169 277.1H221.8" stroke="#f0a0a0" stroke-width="0.25"/><path d="M169 280.2H221.8" stroke="#f0a0a0" stroke-width="0.25"/><path d="M169 268.5L221.8 282.2" stroke="#e03030" stroke-width="0.7"/><path d="M180 268.5V275M195 270V283M203 272V283M219 276V283" stroke="#c02020" stroke-width="0.9"/><path d="M178.5 270V283M216 275V283" stroke="#e020e0" stroke-width="1"/><text x="180" y="262.7" font-size="2.9" fill="#f040f0" opacity="1" font-family="Liberation Sans" font-weight="bold" textLength="29" lengthAdjust="spacingAndGlyphs">APPROACH ROAD PROFILE</text><text x="184" y="264.9" font-size="1.6" fill="#f040f0" opacity="1" font-family="Liberation Sans" font-weight="bold" textLength="20" lengthAdjust="spacingAndGlyphs">3X VERTICAL EXAGGERATION</text><rect x="171" y="316.6" width="50.400000000000006" height="16.19999999999999" fill="#f2cac6" stroke="#e04040" stroke-width="0.6"/><path d="M174.4 316.6V332.8" stroke="#f09a9a" stroke-width="0.25"/><path d="M177.7 316.6V332.8" stroke="#f09a9a" stroke-width="0.25"/><path d="M181.1 316.6V332.8" stroke="#f09a9a" stroke-width="0.25"/><path d="M184.4 316.6V332.8" stroke="#f09a9a" stroke-width="0.25"/><path d="M187.8 316.6V332.8" stroke="#f09a9a" stroke-width="0.25"/><path d="M191.2 316.6V332.8" stroke="#f09a9a" stroke-width="0.25"/><path d="M194.5 316.6V332.8" stroke="#f09a9a" stroke-width="0.25"/><path d="M197.9 316.6V332.8" stroke="#f09a9a" stroke-width="0.25"/><path d="M201.2 316.6V332.8" stroke="#f09a9a" stroke-width="0.25"/><path d="M204.6 316.6V332.8" stroke="#f09a9a" stroke-width="0.25"/><path d="M208.0 316.6V332.8" stroke="#f09a9a" stroke-width="0.25"/><path d="M211.3 316.6V332.8" stroke="#f09a9a" stroke-width="0.25"/><path d="M214.7 316.6V332.8" stroke="#f09a9a" stroke-width="0.25"/><path d="M218.0 316.6V332.8" stroke="#f09a9a" stroke-width="0.25"/><path d="M171 319.8H221.4" stroke="#f0a0a0" stroke-width="0.25"/><path d="M171 323.1H221.4" stroke="#f0a0a0" stroke-width="0.25"/><path d="M171 326.3H221.4" stroke="#f0a0a0" stroke-width="0.25"/><path d="M171 329.6H221.4" stroke="#f0a0a0" stroke-width="0.25"/><path d="M171 317.1L221.4 331.8" stroke="#30c030" stroke-width="0.7"/><path d="M171.5 318.5L221 327" stroke="#e03030" stroke-width="0.7"/><rect x="173" y="318" width="7" height="1.5" fill="#a01818"/><rect x="186" y="320" width="5" height="1.3" fill="#a01818"/><rect x="211" y="325.5" width="9" height="2" fill="#a01818"/><rect x="196" y="319" width="6" height="1.4" fill="#a01818"/><path d="M174 320V332M178 321V332M184 322V332M190 323V332" stroke="#e020e0" stroke-width="0.6"/><text x="176" y="304.79999999999995" font-size="2.9" fill="#f040f0" opacity="1" font-family="Liberation Sans" font-weight="bold" textLength="31" lengthAdjust="spacingAndGlyphs">APPROACH GRADE PROFILE</text><text x="176" y="307.09999999999997" font-size="1.6" fill="#f040f0" opacity="1" font-family="Liberation Sans" font-weight="bold" textLength="17" lengthAdjust="spacingAndGlyphs">3X VERTICAL EXAG</text><rect x="246.3" y="316.6" width="49.5" height="16.2" fill="#d4d4d4"/><path d="M247 328.5C262 328 268 322 276 320C284 318 290 317.5 295.5 316.8" stroke="#e020e0" stroke-width="0.9" fill="none"/><path d="M247 330C262 329.5 268 323.5 276 321.5" stroke="#f4a0f4" stroke-width="0.5" fill="none"/><text x="247" y="304.79999999999995" font-size="2.9" fill="#f040f0" opacity="1" font-family="Liberation Sans" font-weight="bold" textLength="14" lengthAdjust="spacingAndGlyphs">GRADE PROFILE</text><text x="247" y="307.09999999999997" font-size="1.6" fill="#f040f0" opacity="1" font-family="Liberation Sans" font-weight="bold" textLength="48" lengthAdjust="spacingAndGlyphs">PROFILE VIEW TITLE 3X VERTICAL EXAGGERATION</text><rect x="243.2" y="213.9" width="90.9" height="16.5" fill="#8e8e8e"/><rect x="243.2" y="213.9" width="1.6" height="16.5" fill="#e07050"/><rect x="332.5" y="213.9" width="1.6" height="16.5" fill="#e07050"/><path d="M246 228.5L300 222L322 216.5" stroke="#30d0d0" stroke-width="0.5"/><path d="M247.7 209.9V228" stroke="#f4f4f4" stroke-width="0.8"/><path d="M256.8 209.9V227" stroke="#f4f4f4" stroke-width="0.8"/><path d="M265.4 209.9V226" stroke="#f4f4f4" stroke-width="0.8"/><path d="M267.2 209.9V226" stroke="#f4f4f4" stroke-width="0.8"/><path d="M274.7 209.9V224.6" stroke="#f4f4f4" stroke-width="0.8"/><path d="M282.6 209.9V223.5" stroke="#f4f4f4" stroke-width="0.8"/><path d="M287.1 209.9V223" stroke="#f4f4f4" stroke-width="0.8"/><path d="M295.9 209.9V221.5" stroke="#f4f4f4" stroke-width="0.8"/><path d="M304.5 209.9V220" stroke="#f4f4f4" stroke-width="0.8"/><path d="M247 216V230M266 220V229M276 217V226M297 217V229" stroke="#e020e0" stroke-width="1"/><path d="M244 231.2H334" stroke="#ccc" stroke-width="0.5" stroke-dasharray="3 4"/><text x="259" y="199.5" font-size="2.9" fill="#f040f0" opacity="1" font-family="Liberation Sans" font-weight="bold" textLength="46" lengthAdjust="spacingAndGlyphs">ROAD PROFILE ALONG CENTERLINE</text><text x="259" y="202.0" font-size="2" fill="#f040f0" opacity="1" font-family="Liberation Sans" font-weight="bold" textLength="46" lengthAdjust="spacingAndGlyphs">PROFILE VIEW TITLE 3X VERTICAL EXAG</text><text x="259" y="204.3" font-size="2" fill="#f040f0" opacity="1" font-family="Liberation Sans" font-weight="bold" textLength="33" lengthAdjust="spacingAndGlyphs">VERTICAL SCALE 1:100</text><text x="259" y="206.6" font-size="2" fill="#f040f0" opacity="1" font-family="Liberation Sans" font-weight="bold" textLength="55" lengthAdjust="spacingAndGlyphs">PROFILE ALIGNMENT WITH STATIONS AND GRADES</text><rect x="340.6" y="221" width="10.4" height="1.1" fill="#e83030"/><rect x="246.3" y="268" width="52" height="18" fill="#d8d8d8"/><path d="M247.5 266.5V286" stroke="#f8f8f8" stroke-width="0.6"/><path d="M256.5 266.5V286" stroke="#f8f8f8" stroke-width="0.6"/><path d="M265 266.5V286" stroke="#f8f8f8" stroke-width="0.6"/><path d="M266.5 266.5V286" stroke="#f8f8f8" stroke-width="0.6"/><path d="M274 266.5V286" stroke="#f8f8f8" stroke-width="0.6"/><path d="M282.5 266.5V286" stroke="#f8f8f8" stroke-width="0.6"/><path d="M247 282L298 270" stroke="#e07040" stroke-width="0.5"/><path d="M239.7 250.4L332.7 288.3M240.5 289.9L323.6 247.25M246.3 286H331.4" stroke="#e020e0" stroke-width="0.7"/><path d="M298.3 268L331.4 253" stroke="#666" stroke-width="0.5"/><path d="M300 283L322 268.6M305 282L330 266" stroke="#e020e0" stroke-width="0.5"/><text x="246.5" y="257.09999999999997" font-size="2.9" fill="#f040f0" opacity="1" font-family="Liberation Sans" font-weight="bold" textLength="22" lengthAdjust="spacingAndGlyphs">ROAD GRADE PROFILE</text><text x="246.5" y="260.29999999999995" font-size="2" fill="#f040f0" opacity="1" font-family="Liberation Sans" font-weight="bold" textLength="48" lengthAdjust="spacingAndGlyphs">PROFILE VIEW TITLE 3X VERTICAL EXAG</text><text x="246.5" y="263.5" font-size="2" fill="#f040f0" opacity="1" font-family="Liberation Sans" font-weight="bold" textLength="52" lengthAdjust="spacingAndGlyphs">PROFILE ALIGNMENT WITH STATIONS AND GRADES</text><path d="M247 276V286M250 270V286" stroke="#e020e0" stroke-width="0.8"/><polygon points="348.3,262 494,257.5 495.3,318 348.8,320.5" fill="#3c3c3c"/><path d="M357.6 293.1L358.3 293.9L359.0 294.8L359.9 295.3L360.9 295.9M381.1 292.5L381.7 293.4L382.5 294.1L383.1 295.1L383.9 295.8L384.6 296.7L385.2 297.6L386.0 298.4M360.9 276.6L362.0 276.8L362.9 277.4L363.9 277.7L365.0 277.8L366.0 278.3L367.1 278.3M413.6 302.4L414.0 303.4L414.3 304.5L414.7 305.6L415.3 306.5L416.0 307.3L416.6 308.2M481.9 288.8L482.4 289.8L482.5 290.9L482.3 291.9L481.7 292.8L481.3 293.9L481.0 294.9M462.1 312.2L462.3 313.3L462.6 314.4L463.3 315.2L463.9 316.1L464.8 316.7L465.9 316.9L467.0 316.7M398.3 261.3L398.2 262.4L397.9 263.4L398.1 264.5M403.6 297.3L404.1 298.3L404.8 299.2L405.7 299.8L406.6 300.4L407.1 301.3M394.2 266.9L394.6 268.0L395.3 268.8L396.3 269.3L397.0 270.1L397.7 271.0L398.6 271.5M352.9 290.7L354.0 290.9L355.1 290.7L356.2 290.4M460.9 291.0L461.4 292.0L461.6 293.1L461.5 294.2L461.8 295.3M407.1 307.8L408.1 308.2L409.2 308.5L410.3 308.2L411.1 307.5M386.6 300.9L386.1 301.9L385.8 303.0L385.8 304.1L386.1 305.2L386.7 306.1M439.5 313.8L440.3 314.5L441.0 315.4L441.5 316.4M416.2 304.1L417.2 304.2L418.3 304.0L419.3 303.5M425.4 315.9L426.2 315.2L426.8 314.3L427.4 313.4L428.3 312.7M480.1 284.1L480.8 283.2L481.2 282.2L481.5 281.1L482.3 280.3L483.2 279.7L484.2 279.2L485.3 279.0M369.5 296.4L370.0 297.4L370.6 298.3L370.8 299.4L370.6 300.5L370.9 301.5L371.6 302.4L372.5 303.0M478.6 261.9L479.1 262.9L479.5 263.9L479.9 265.0L480.1 266.0L480.4 267.1M418.3 316.4L419.0 317.3L419.2 318.3L419.8 319.3M485.2 297.9L484.2 298.4L483.1 298.4L482.1 298.7L481.0 298.5L479.9 298.4M492.5 309.6L492.6 310.7L492.8 311.8L493.0 312.9L493.4 313.9L494.2 314.7M415.5 301.6L416.5 302.0L417.6 301.9L418.6 302.4L419.5 303.1L419.9 304.1M462.0 274.8L461.8 275.9L461.3 276.8L460.6 277.7L459.7 278.2M483.4 274.6L483.9 275.5L484.1 276.6L483.7 277.7L483.5 278.8L483.8 279.8L483.5 280.9L483.1 281.9M378.9 285.6L379.3 286.6L380.1 287.4L381.2 287.6M490.8 289.9L491.3 290.9L491.4 292.0L491.6 293.1L491.8 294.1L491.6 295.2L491.5 296.3M398.7 309.6L399.7 310.0L400.8 310.3L401.9 310.0L402.8 309.4M456.4 273.8L456.6 274.9L456.6 276.0L456.9 277.1L457.4 278.1L458.0 278.9L458.8 279.8M413.6 274.3L413.6 275.4L413.6 276.5L413.8 277.6L413.5 278.7L413.4 279.8M349.2 281.7L350.3 281.6L351.3 281.8L352.4 281.6L353.5 281.8M455.4 308.4L455.3 309.5L455.0 310.5L454.5 311.5L453.8 312.3M448.5 307.5L449.6 307.6L450.7 307.2L451.7 307.0L452.8 307.3M414.5 261.1L415.5 260.7L416.5 260.4L417.6 260.1M490.5 288.6L489.4 289.0L488.5 289.5L487.9 290.5L487.2 291.3L486.7 292.3L486.2 293.3M443.5 301.0L444.1 301.9L445.1 302.4L446.2 302.4L447.3 302.2L448.4 302.1L449.5 302.3L450.5 302.7M423.9 286.8L424.9 287.1L425.7 287.9L426.1 288.9L426.9 289.7L427.8 290.4L428.3 291.3L428.4 292.4M388.0 271.0L388.9 271.6L390.0 271.7L391.0 272.1L392.1 272.3M436.5 297.2L437.4 297.8L438.0 298.7L438.7 299.6L439.6 300.1L440.7 300.1M414.4 276.7L414.9 277.7L415.5 278.6L416.4 279.2L417.4 279.7M398.0 282.7L397.9 283.8L398.1 284.9L398.3 285.9M493.8 294.5L492.9 295.2L491.9 295.5L490.9 296.0L490.2 296.9L489.5 297.6L488.6 298.3M443.7 283.2L444.1 284.2L444.6 285.2L445.1 286.2L445.9 286.9M379.1 314.2L379.8 315.1L380.4 316.0L381.4 316.5L382.4 316.8L383.5 316.7M379.5 274.8L379.7 275.8L380.3 276.8L380.8 277.7L381.3 278.7L381.4 279.8L381.8 280.8L382.4 281.7M488.6 296.8L487.5 296.4L486.4 296.5L485.4 296.9L484.4 297.4L483.4 297.7L482.4 298.2M364.8 296.7L365.7 297.3L366.7 297.7L367.8 297.9L368.8 298.4L369.5 299.2L370.5 299.7L371.5 300.2M490.2 266.8L491.3 266.8L492.4 266.8L493.5 267.0M365.4 262.9L365.7 264.0L366.4 264.8L366.9 265.8L367.6 266.7L368.4 267.4L369.3 268.1L370.3 268.4M370.9 272.6L371.6 273.5L372.5 274.1L373.2 275.0L374.1 275.6L375.2 275.8L376.3 275.5L377.3 275.2M483.9 281.1L484.7 280.3L485.7 279.8L486.7 279.5L487.5 278.7L488.4 278.1L489.4 277.6M445.3 267.6L445.9 268.5L446.8 269.1L447.5 269.9L448.4 270.7L449.3 271.2L450.4 271.6L451.1 272.4M431.1 280.1L432.2 280.2L433.3 280.0L434.4 279.8L435.5 280.1L436.6 280.3M365.5 263.6L365.1 264.7L364.8 265.7L364.9 266.8L365.5 267.8L366.0 268.7L366.4 269.7L366.3 270.8M405.2 314.1L406.3 314.3L407.2 314.9L408.1 315.6L408.8 316.4M417.6 293.1L418.7 293.1L419.8 293.1L420.9 293.1M443.1 277.1L443.9 277.8L444.6 278.7L445.4 279.5L446.2 280.3M423.2 261.4L424.3 261.2L425.2 260.6L426.1 260.1L427.2 259.8M368.1 312.9L368.3 314.0L368.1 315.1L368.3 316.2L368.1 317.2L367.5 318.2M373.5 306.7L373.1 307.7L372.8 308.7L372.4 309.8L371.9 310.7L371.0 311.4M426.7 311.1L427.1 312.1L427.0 313.2L426.9 314.3L426.9 315.4L426.6 316.5M457.3 271.7L457.6 272.8L457.9 273.9L458.2 274.9L458.1 276.0L458.3 277.1M443.7 259.4L443.8 260.5L443.9 261.6L444.0 262.7M368.4 280.7L369.3 281.3L370.4 281.4L371.4 281.8L372.3 282.4L373.3 283.0L374.4 283.1M413.3 316.1L414.1 315.3L415.1 314.9L415.8 314.1L416.6 313.2L417.3 312.4L417.7 311.4M485.7 274.3L486.7 274.9L487.5 275.6L488.0 276.6L488.0 277.7L488.2 278.7L487.9 279.8L487.3 280.7M422.6 268.5L422.7 269.6L423.1 270.6L423.9 271.4L424.3 272.5M405.4 295.3L406.5 295.3L407.5 295.7L408.4 296.3L409.1 297.1L409.8 298.0L410.4 298.9L410.8 299.9M379.7 296.6L379.5 297.7L379.7 298.8L380.3 299.7M404.7 273.3L405.0 274.3L405.2 275.4L405.6 276.4M356.0 305.1L355.8 306.2L355.2 307.1L354.5 308.0L354.3 309.1L354.2 310.2L354.1 311.3L353.8 312.3M451.2 291.3L452.1 291.9L452.8 292.8L453.4 293.7L454.2 294.5M424.9 275.9L425.6 276.7L426.3 277.6L426.7 278.6L427.4 279.4L428.2 280.3M469.6 274.2L470.6 274.7L471.7 274.9L472.7 275.3L473.7 275.7M441.3 263.0L441.6 264.1L442.1 265.0L442.7 266.0M478.1 263.3L479.2 263.2L480.2 262.8L481.3 262.4M373.8 318.9L374.9 318.9L376.0 319.1L377.0 319.6M396.4 267.6L397.5 267.6L398.5 267.9L399.6 267.8L400.7 267.7L401.8 267.8L402.9 268.0M436.4 279.6L436.9 280.6L437.7 281.4L438.0 282.5L438.0 283.6M364.5 270.8L365.0 271.8L365.5 272.8L366.3 273.5L366.6 274.6L367.1 275.6L368.0 276.2M385.3 284.3L386.0 285.1L386.3 286.1L386.7 287.2L386.9 288.3L386.6 289.3L386.0 290.2M350.5 309.6L351.0 310.6L351.7 311.4L352.2 312.4L352.2 313.5L352.2 314.6M432.3 291.5L433.1 292.3L433.8 293.2L434.2 294.2L434.5 295.2L435.0 296.2L434.9 297.3M387.8 281.3L387.3 282.3L386.6 283.1L385.9 284.0L385.0 284.7L383.9 285.0M357.3 309.3L357.6 310.4L358.3 311.2L358.6 312.3L358.9 313.4L359.6 314.2M487.0 298.7L486.9 299.8L486.5 300.8L486.3 301.9M462.8 270.9L463.7 271.6L464.4 272.4L465.0 273.4L465.3 274.4L465.2 275.5L464.9 276.5L464.2 277.4M419.2 314.1L420.0 314.9L420.4 315.9L421.3 316.6L421.9 317.6M430.6 299.2L431.6 299.6L432.7 299.9L433.5 300.6L434.5 301.0L435.5 301.4L436.5 302.0M437.4 300.3L437.6 301.4L437.8 302.5L437.6 303.6M390.2 279.2L391.0 279.9L391.6 280.8L392.3 281.7L393.0 282.6L393.8 283.3M374.2 299.1L375.2 299.6L376.3 299.5L377.3 300.0M421.2 290.4L420.7 291.3L420.2 292.4L419.6 293.3M358.7 300.2L359.6 299.5L360.4 298.7L360.8 297.7L361.3 296.7M349.7 300.4L350.7 300.8L351.6 301.5L352.6 301.9M417.5 275.1L418.3 275.8L419.2 276.4L420.0 277.2L420.5 278.2M459.1 276.2L459.8 277.0L460.6 277.8L461.0 278.8L461.6 279.7L461.7 280.8L461.6 281.9L462.1 282.9M370.0 307.4L370.0 308.5L370.3 309.6L370.3 310.7L370.3 311.8L370.1 312.9M370.3 318.5L371.3 319.0L371.9 319.9M404.8 291.5L404.2 292.4L403.4 293.1L402.8 294.1L402.1 294.9L401.1 295.5L400.0 295.6L398.9 295.7M434.5 269.7L435.1 270.6L435.8 271.5L436.5 272.3L437.2 273.2L438.1 273.7M357.1 267.0L357.6 267.9L358.3 268.8L358.7 269.8L359.2 270.8L359.9 271.7M403.4 281.5L404.2 280.8L404.6 279.8L405.2 278.9L405.4 277.8L405.7 276.7L405.8 275.6M412.7 267.3L412.4 268.3L412.6 269.4L413.0 270.4L413.1 271.5L413.3 272.6L413.9 273.6M470.1 265.4L469.3 266.1L468.4 266.8L467.8 267.7L467.5 268.8M405.6 283.8L406.0 284.8L406.3 285.8L406.7 286.9L407.1 287.9L407.5 288.9M420.8 275.0L421.6 275.8L422.2 276.7L422.7 277.7L423.4 278.5M474.5 277.9L475.4 278.5L476.5 278.6L477.5 279.1M352.7 307.9L353.8 307.7L354.9 308.1L355.9 308.1L357.0 307.8M385.3 308.7L386.0 309.5L386.3 310.6L386.5 311.7L386.7 312.8M413.4 279.7L413.8 280.8L414.7 281.5L415.7 281.8M421.6 275.3L421.8 276.4L422.3 277.4L423.0 278.2L423.6 279.1M395.5 282.8L396.6 282.9L397.7 283.0L398.6 283.6L399.2 284.5L400.0 285.3L400.9 285.9L401.7 286.7M388.6 291.6L389.0 292.7L389.8 293.4L390.7 294.0L391.8 294.0L392.9 293.7M415.8 292.0L416.9 291.9L418.0 292.1L419.1 291.8L420.1 291.4L420.9 290.6L421.7 289.9L422.8 289.7M447.3 315.9L448.3 316.2L449.4 316.3L450.5 316.7L451.5 317.1L452.3 317.9M456.1 304.1L456.8 304.9L457.8 305.4L458.9 305.8L459.9 306.2M391.5 282.2L392.6 282.1L393.7 282.2L394.6 282.8L395.6 283.3L396.6 283.6M378.6 284.4L379.4 285.2L379.9 286.2L380.6 287.0M394.3 296.4L395.0 297.3L395.7 298.1L396.2 299.1L396.9 300.0L397.6 300.8L398.3 301.7M371.4 269.7L372.2 270.4L372.9 271.3L373.4 272.2L373.7 273.3L374.4 274.1L375.2 274.9L376.1 275.5M394.0 268.9L394.3 270.0L394.1 271.1L393.5 272.0L392.5 272.5L391.7 273.2M453.8 300.9L454.2 301.9L454.8 302.8L455.3 303.8M423.6 266.9L424.6 267.3L425.7 267.3L426.7 266.9L427.8 266.7M363.5 268.6L364.6 268.3L365.7 268.3L366.8 268.5L367.8 268.9L368.8 269.3L369.9 269.4L371.0 269.2M353.8 297.0L354.8 297.3L355.9 297.3L357.0 297.4L358.0 297.1L358.9 296.4L359.7 295.7L360.7 295.1M356.9 272.8L357.2 273.8L357.7 274.8L357.7 275.9L357.4 277.0L357.3 278.1L357.1 279.2L356.5 280.1M486.7 273.1L486.1 274.0L485.7 275.0L484.9 275.8L484.1 276.6L483.2 277.1L482.4 277.9L481.9 278.8M376.1 318.2L376.5 319.2M475.4 278.8L476.4 279.2L477.5 279.4L478.6 279.3L479.6 278.9L480.5 278.3L481.2 277.5M422.2 272.1L423.1 272.8L423.6 273.7L423.6 274.8L423.4 275.9L423.4 277.0L422.8 278.0M407.6 289.6L408.0 290.7L408.0 291.8L407.8 292.8L407.3 293.8L407.3 294.9L407.0 296.0L407.2 297.1M452.1 301.1L452.2 302.2L452.2 303.3L452.6 304.3L452.9 305.3M355.9 273.2L356.9 273.4L358.0 273.5L359.1 273.9M355.3 301.6L356.2 302.3L357.0 303.1L357.3 304.1L357.5 305.2L357.7 306.3L358.1 307.3L359.0 308.0M408.7 270.5L409.3 271.4L410.2 272.1L411.2 272.5L412.2 273.0L413.2 273.4L413.9 274.2M392.4 312.9L392.7 313.9L393.3 314.9L393.7 315.9L394.5 316.6M485.5 300.0L485.8 301.0L486.1 302.1L486.8 302.9L487.3 303.9L488.2 304.6L489.1 305.2M478.9 276.8L479.5 277.7L480.2 278.6L480.8 279.5M429.8 260.8L429.7 261.9L429.2 262.9L429.3 264.0L429.0 265.1L428.3 266.0L427.6 266.8M454.9 301.4L455.4 302.4L455.5 303.5L456.2 304.4L456.9 305.2M402.3 317.6L403.1 316.9L404.1 316.3L404.9 315.6L405.8 315.0M442.9 280.1L443.8 280.7L444.7 281.3L445.7 281.8L446.4 282.6M418.5 271.5L419.0 272.5L419.1 273.6L419.3 274.7L419.8 275.7L420.1 276.8L420.4 277.8L420.7 278.9M399.5 270.1L399.8 271.2L400.1 272.2L400.2 273.3L400.7 274.3L401.3 275.2L401.8 276.2M429.5 316.5L430.2 317.3L430.9 318.2L431.6 318.9M478.0 292.0L477.6 293.0L477.5 294.1L477.3 295.2L476.8 296.2L476.6 297.2M427.5 301.2L426.9 302.2L426.3 303.1L425.5 303.7L424.5 304.2L423.4 304.4L422.4 304.9L421.5 305.5M470.6 316.8L471.5 316.2L472.6 315.9L473.6 315.6L474.5 314.9L475.6 314.7L476.6 314.5L477.7 314.6M461.5 261.6L462.4 260.9L462.9 259.9L463.6 259.1L464.6 258.6M486.5 302.8L487.6 302.9L488.7 302.9L489.7 302.7L490.8 302.6L491.8 302.0L492.9 301.8L493.9 301.4M449.6 259.3L449.7 260.4L450.2 261.4L450.9 262.2M484.0 312.2L483.6 311.2L482.9 310.3L482.7 309.2L482.8 308.1M447.5 282.3L447.8 283.4L447.9 284.5L448.0 285.6L448.4 286.6L448.3 287.7L448.2 288.8M425.6 277.3L426.1 278.3L426.6 279.2L427.3 280.1L427.8 281.1M479.9 263.9L480.2 265.0L480.3 266.1L480.3 267.2L480.4 268.3M492.2 280.1L492.6 279.1L493.4 278.3L494.4 277.9M479.2 291.9L480.1 292.5L481.1 292.8L482.2 292.6L483.1 292.0M475.9 279.2L477.0 279.6L478.0 279.8L479.1 280.1L480.2 279.9M397.5 288.7L398.3 289.4L398.8 290.4L398.9 291.5L399.4 292.4L400.2 293.2L400.8 294.2L401.5 295.0M452.0 309.8L452.9 310.4L453.6 311.2L454.6 311.7L455.3 312.5M427.1 294.5L428.0 295.2L428.4 296.1L428.8 297.2L429.5 298.1L430.0 299.0L430.3 300.1L430.5 301.2M491.0 316.1L489.9 315.7L488.9 315.4L487.9 314.9M485.3 280.7L485.5 281.7L485.4 282.8L485.0 283.8L484.6 284.9M473.7 259.9L473.8 261.0L474.1 262.1L474.1 263.2L474.0 264.2M493.2 271.4L492.2 271.0L491.4 270.2L491.0 269.2L491.0 268.1M435.7 286.1L436.7 286.3L437.8 286.7L438.9 286.6L439.9 286.9M412.0 266.7L413.0 267.2L413.8 268.0L414.8 268.5L415.5 269.3L416.5 269.8M421.9 279.8L422.8 280.3L423.9 280.7L424.7 281.4L425.3 282.3L425.6 283.4L425.3 284.5M383.0 307.1L384.1 306.9L385.2 306.6L386.1 306.1M492.7 277.6L493.7 277.3M477.1 303.3L477.7 304.2L478.8 304.6L479.8 304.8L480.7 305.5L481.8 305.8M463.5 317.0L464.1 317.9M479.2 297.4L479.7 298.4L479.9 299.4L479.6 300.5L478.9 301.4L478.2 302.2M439.0 260.1L439.1 261.2L439.1 262.3L438.9 263.4M445.9 286.2L446.9 286.6L447.9 287.0L448.6 287.9L449.5 288.5L450.3 289.3L450.9 290.2M383.6 268.7L384.7 268.8L385.6 269.5L386.2 270.4L386.7 271.3L386.8 272.4L387.1 273.5M474.2 284.5L475.3 284.2L476.3 283.8L477.4 283.6L478.5 283.5L479.6 283.4L480.5 282.8M439.3 290.4L439.7 291.5L440.1 292.5L441.0 293.2L441.9 293.7L442.9 294.3L443.9 294.7M367.8 296.4L368.4 297.3L368.8 298.3L369.5 299.2L370.4 299.7L371.2 300.5L372.0 301.2L372.9 301.9M479.7 304.9L479.1 305.9L478.4 306.7L477.6 307.5L476.6 307.9L475.8 308.6L475.3 309.6M368.6 304.7L369.0 305.7L369.2 306.8L369.4 307.9M447.6 292.3L448.5 293.0L449.1 293.9L449.7 294.8M421.1 310.6L422.2 310.5L423.1 310.0L424.2 309.6L425.3 309.5M402.0 307.7L402.3 308.7L402.4 309.8L402.3 310.9L401.9 312.0M467.1 288.8L466.8 289.9L466.3 290.9L465.6 291.8L465.2 292.8M470.6 267.0L471.1 268.0L471.8 268.9L472.6 269.6L473.7 269.8M381.4 309.7L382.5 310.1L383.6 310.0L384.7 310.2L385.7 309.8L386.8 309.8L387.9 309.6M433.4 277.8L434.4 278.3L435.4 278.6L436.5 278.7L437.6 278.8L438.7 278.6L439.7 278.9L440.7 279.4M490.3 278.3L491.1 279.0L491.9 279.8L492.9 280.1L494.0 280.5M447.4 265.1L447.5 266.2L447.0 267.2L446.6 268.2L446.3 269.3M458.7 270.5L459.8 270.5L460.8 270.2L461.9 270.0L462.9 269.5M377.2 267.4L378.1 268.1L379.0 268.6L380.1 269.0L381.1 269.2L382.1 269.7M463.2 276.5L462.9 277.5L463.1 278.6L463.5 279.6M401.1 299.1L401.9 299.8L402.9 300.4L404.0 300.5L405.1 300.4L406.0 299.9L406.9 299.1M396.0 273.3L396.6 274.2L397.3 275.1L398.0 275.9L398.9 276.5L399.9 276.9L401.0 277.1L402.1 276.8M382.2 304.5L382.7 305.5L382.6 306.6L382.5 307.7L382.4 308.8M431.6 265.5L432.4 266.3L432.9 267.2L433.3 268.3L434.0 269.1M370.5 289.7L371.2 290.5L372.1 291.1L373.2 291.4L374.3 291.4M397.0 318.5L397.1 319.6M470.3 279.1L471.3 279.3L472.4 279.5L473.5 279.5L474.6 279.2L475.7 279.1L476.7 279.5L477.5 280.2M408.6 276.6L409.0 277.6L409.0 278.7L408.9 279.8M376.5 309.5L377.0 310.5L377.9 311.1L378.5 312.0L379.5 312.6M431.0 298.7L431.5 299.7L431.8 300.8L431.9 301.9L432.4 302.8L432.6 303.9L433.1 304.9L433.6 305.9M432.6 260.9L433.7 260.9L434.8 260.9L435.8 261.5L436.6 262.1L437.7 262.6L438.5 263.3M428.5 283.3L427.9 284.2L426.9 284.7L426.0 285.4L425.0 285.6L424.0 286.1L422.9 286.2M356.0 291.0L356.3 292.1L356.2 293.2L356.6 294.2L357.1 295.1M447.8 314.3L448.9 314.3L449.9 313.9L450.9 313.4L452.0 313.3L453.0 312.9M439.3 289.1L440.4 289.2L441.5 289.2L442.6 289.1L443.7 289.3L444.7 289.7M470.0 302.1L471.0 302.6L472.1 302.6L473.2 302.9L474.1 303.5L475.2 303.7M479.7 266.3L480.6 266.9L481.2 267.8L482.2 268.4L483.3 268.4L484.4 268.6M479.3 304.1L480.4 304.3L481.5 304.2L482.6 304.3L483.6 304.6L484.7 305.0L485.7 305.1M436.5 309.1L437.4 309.8L438.3 310.3L439.2 310.9L439.9 311.8M426.0 272.3L426.1 273.4L426.6 274.4L426.7 275.5L426.4 276.5L426.2 277.6L426.4 278.7L426.3 279.8M359.4 287.6L359.6 288.7L360.1 289.7L360.9 290.5L361.7 291.2L362.6 291.8L363.7 292.0L364.7 292.5M412.6 270.3L412.5 271.4L412.7 272.4L412.7 273.5L412.2 274.5M453.7 297.1L454.8 297.2L455.8 297.5L456.9 297.9L458.0 298.0L459.1 298.0M456.2 300.9L456.8 301.8L457.5 302.7L457.8 303.7L458.3 304.7L458.4 305.8L458.5 306.9M398.0 277.7L398.2 278.8L398.5 279.9L399.0 280.9L399.6 281.8M471.0 266.3L471.6 267.2L472.0 268.2L472.4 269.3M426.5 262.4L426.8 263.5L427.0 264.5L427.3 265.6L427.3 266.7L426.9 267.7M465.4 260.4L465.4 261.5L465.8 262.5L466.2 263.5L466.5 264.5M355.0 287.0L355.3 288.1L356.0 288.9L356.2 290.0L356.2 291.1L356.5 292.2L356.5 293.3M423.3 264.6L424.1 265.3L425.1 265.6L426.1 266.1M430.4 296.0L431.2 295.2L431.6 294.2L432.1 293.2L432.3 292.1L432.5 291.1L432.0 290.0L431.9 288.9M469.3 308.3L470.1 309.1L470.4 310.1L470.6 311.2L471.3 312.1M447.3 263.4L447.5 264.5L447.4 265.6L447.7 266.7L448.2 267.7M424.4 286.2L425.5 286.6L426.5 287.0L427.6 287.0L428.6 287.4L429.5 288.0L430.6 288.2M493.2 304.7L493.5 305.7L493.9 306.8L494.3 307.7M460.8 272.8L461.8 273.2L462.7 273.9L463.6 274.4L464.5 275.1M426.9 317.9L427.7 318.7L428.7 319.1M452.6 284.7L452.2 285.8L451.7 286.7L450.9 287.6L450.0 288.2L449.0 288.6L448.1 289.2L447.4 290.0M449.2 271.0L448.8 272.0L448.1 272.9L447.3 273.6L446.8 274.6L446.8 275.7M405.7 262.8L406.6 263.5L407.6 263.8L408.7 263.8M362.8 315.8L363.9 315.8L364.9 315.5L365.9 315.0L367.0 314.9L367.9 314.3M444.9 269.2L446.0 269.3L447.0 269.7L448.1 269.6L449.1 269.3M433.6 261.8L434.0 262.9L434.6 263.8L435.1 264.8L435.9 265.6M455.9 281.0L456.1 282.0L456.7 283.0L457.5 283.7L458.1 284.7M404.2 305.4L404.6 306.5L404.6 307.6L404.8 308.6L404.7 309.7M362.6 265.3L363.6 265.8L364.7 265.8L365.7 265.5L366.7 264.9M466.7 314.0L466.8 315.1L467.4 316.0L467.9 317.0L468.0 318.1M401.9 282.0L401.8 283.1L401.8 284.2L401.4 285.2M382.8 287.6L382.7 288.7L382.4 289.7L381.9 290.7L381.7 291.8L381.1 292.7L380.8 293.8L380.6 294.8M462.7 274.8L462.5 275.9L462.4 277.0L462.1 278.0M403.2 268.0L404.2 268.5L405.1 269.2L405.8 270.0M423.4 265.2L423.8 266.2L424.5 267.1L425.0 268.1L425.6 269.0L426.2 269.9L426.7 270.9L427.4 271.7M350.4 287.5L351.4 288.0L352.4 288.3L353.2 289.0L353.6 290.0M438.3 298.1L439.4 298.4L440.4 298.6L441.5 299.0L442.5 299.4L443.6 299.4M475.9 294.5L476.7 295.2L477.5 296.1L478.3 296.8L479.0 297.6M464.8 309.9L465.3 310.8L466.1 311.6L466.7 312.5L466.8 313.6M365.6 315.9L366.3 316.7L367.2 317.4L368.1 318.0L369.1 318.5M418.4 274.0L419.1 274.9L420.1 275.4L421.2 275.4L422.2 275.9M474.9 278.4L475.5 279.3L476.4 280.0L476.9 280.9L477.3 282.0L478.1 282.7L479.2 283.1L480.1 283.6M453.0 272.2L453.7 273.0L454.7 273.5L455.6 274.2M383.9 274.0L385.0 273.8L386.1 273.8L387.2 273.5M441.8 300.9L442.4 301.7L443.3 302.4L443.8 303.4L443.8 304.5L443.3 305.5L443.3 306.6L443.7 307.6M398.1 301.7L399.1 302.1L400.2 302.5L401.2 302.8L402.2 303.3L403.2 303.7M396.1 272.7L397.1 273.2L397.8 274.0L398.6 274.8L399.5 275.4M422.5 290.3L423.6 290.4L424.6 290.1L425.7 289.9L426.8 289.8L427.9 289.7L428.8 289.1L429.9 288.8M414.2 310.8L413.8 311.9L413.6 313.0L413.5 314.1L412.9 315.0L412.0 315.6L411.0 316.1M415.1 297.5L416.0 298.0L417.0 298.5L417.9 299.1L419.0 299.5L420.1 299.5L421.1 299.7L422.1 300.2M417.6 317.3L418.6 317.7L419.7 317.8L420.7 318.3L421.6 318.9M438.2 277.4L438.9 278.3L439.9 278.8L441.0 278.8L442.0 278.4M460.6 293.2L460.5 294.2L460.3 295.3L460.5 296.4L460.3 297.5M464.1 310.2L463.1 310.8L462.0 311.1L461.0 310.9L459.9 311.1L458.8 311.4L457.9 312.0M455.9 267.8L456.9 268.3L458.0 268.5L459.1 268.6L460.2 268.9L461.3 268.9L462.3 269.0M380.2 286.7L381.0 287.4L382.0 287.9L382.9 288.5L383.7 289.3M436.3 274.1L437.0 274.9L437.9 275.5L438.7 276.2L439.3 277.2L439.4 278.3L439.9 279.3L440.1 280.3M447.3 266.8L448.4 266.9L449.4 266.7L450.5 266.6L451.6 266.3L452.7 266.3L453.7 266.9M475.0 280.1L476.1 280.5L477.2 280.5L478.3 280.6L479.3 280.3M409.6 310.1L410.1 311.1L410.1 312.1L410.2 313.2L410.6 314.3L410.9 315.3L411.5 316.2L412.4 316.8M463.7 294.6L464.8 294.5L465.8 294.9L466.8 295.4L467.9 295.7M365.7 313.6L366.1 314.7L366.5 315.7L367.1 316.6L367.7 317.5L368.7 318.1M358.7 308.2L359.6 308.9L360.5 309.5L361.1 310.5L361.7 311.4L362.7 311.9M486.3 292.2L487.4 291.9L488.3 291.3L489.4 291.1M421.0 303.3L422.1 303.6L422.9 304.3L424.0 304.6L425.1 304.4M428.4 312.8L429.5 312.9L430.5 313.3L431.4 313.9M406.4 316.5L406.2 317.6L406.0 318.6M442.7 289.0L443.7 289.4L444.6 290.0L445.6 290.6L446.4 291.3L447.4 291.7L448.5 292.0L449.4 292.5M396.3 297.8L397.2 298.5L398.0 299.2L399.1 299.6L399.9 300.4L400.7 301.1L401.6 301.6L402.3 302.5M483.9 304.9L484.5 305.9L484.6 306.9L484.7 308.0M484.3 263.4L484.4 262.3L484.8 261.3L485.4 260.4M477.0 308.2L477.5 309.2L478.0 310.1L478.4 311.2L478.9 312.1L479.4 313.1M402.7 315.0L402.6 316.1L402.5 317.2L402.3 318.3L401.8 319.3M474.2 282.9L474.7 283.9L474.9 284.9L474.7 286.0M436.3 311.6L437.2 312.2L437.9 313.1L438.3 314.1L438.8 315.0M366.4 269.5L367.4 269.9L368.5 270.0L369.5 270.5L370.6 270.7L371.6 271.2L372.6 271.5L373.7 271.5M418.7 290.9L419.1 291.9L419.4 293.0L419.8 294.0L420.5 294.8L421.5 295.4L422.4 295.9L423.4 296.3M402.3 292.4L402.7 293.4L403.3 294.3L404.2 294.9L405.2 295.4L406.3 295.5L407.2 296.1L408.2 296.7M392.5 318.1L393.2 318.9L394.2 319.6M480.4 271.9L480.9 272.9L481.0 274.0L481.1 275.1M349.8 313.5L350.9 313.9L351.9 314.2L353.0 314.4L354.1 314.2L355.1 314.5L355.9 315.3M398.1 262.9L398.4 263.9L398.5 265.0L398.5 266.1L398.4 267.2L398.6 268.3M467.7 307.0L468.7 307.5L469.5 308.2L470.2 309.1M373.4 299.5L374.1 300.3L374.9 301.1L375.9 301.6L376.8 302.2L377.7 302.9L378.4 303.7M404.5 300.2L405.1 301.1L405.8 302.0L406.7 302.4L407.7 303.0L408.3 303.9L409.2 304.5M412.4 298.9L412.6 300.0L412.8 301.1L412.4 302.1M452.7 307.7L453.3 308.6L453.4 309.7L453.8 310.7M469.3 283.2L470.0 284.1L470.7 284.9L471.7 285.5L472.8 285.6L473.9 285.8M383.1 314.2L384.2 314.5L385.3 314.7L386.3 315.0M454.7 311.5L455.4 312.4L455.7 313.4L456.4 314.3M462.7 298.6L463.8 299.0L464.7 299.6L465.7 300.0L466.8 299.9L467.9 299.7M419.7 280.9L420.1 281.9L420.1 283.0L419.7 284.1L419.4 285.1M394.5 318.4L394.3 319.5M446.8 273.2L447.2 274.2L447.9 275.1L448.4 276.1M476.9 265.5L478.0 265.3L479.1 265.1L480.0 264.6L481.0 264.1L482.1 264.1L483.1 264.5L484.2 264.4M397.1 282.8L398.2 283.1L399.2 283.6L400.2 283.9L401.3 283.7L402.4 283.8L403.4 284.3M461.5 287.7L462.1 288.7L462.5 289.7L463.3 290.5L463.9 291.4L464.6 292.2L464.8 293.3M459.0 304.4L459.9 305.1L460.4 306.0L460.7 307.1M480.2 269.4L481.3 269.4L482.4 269.2L483.5 269.3L484.6 269.3L485.6 269.9L486.6 270.1M402.6 265.1L403.4 265.8L404.4 266.2L405.4 266.8L406.4 266.9L407.5 266.7L408.4 266.1L409.5 265.8M382.7 307.0L383.1 308.0L383.0 309.1L382.5 310.1L382.5 311.2L382.7 312.3L382.4 313.4M391.1 291.1L392.1 291.5L393.2 291.6L394.3 292.0M438.4 306.4L439.5 306.7L440.5 307.1L441.3 307.8L442.3 308.4L443.4 308.5L444.3 309.1L445.3 309.6M478.1 285.3L478.8 286.1L479.2 287.1L479.9 288.0L480.2 289.0L480.7 290.0L481.5 290.7M358.6 262.5L359.3 263.3L359.8 264.3L360.5 265.1L361.0 266.1M485.2 271.7L485.3 272.8L485.3 273.9L485.3 275.0L485.6 276.0L486.2 276.9L486.4 278.0L486.7 279.1M458.3 304.2L458.3 305.3L458.7 306.3L459.1 307.4L459.0 308.4L458.5 309.4M362.7 275.1L361.9 275.9L361.2 276.8L360.5 277.6M464.8 273.7L465.1 274.8L464.9 275.9L464.5 276.9L464.5 278.0L464.3 279.1L464.5 280.2L464.2 281.2M405.3 267.2L406.0 268.1L406.6 269.0L407.4 269.7L408.2 270.5M371.2 292.1L371.9 291.2L372.6 290.4L373.5 289.9M453.8 265.1L454.5 265.9L455.5 266.4L456.3 267.1L457.2 267.8M352.3 272.0L353.3 272.5L354.0 273.4L354.7 274.2L355.6 274.9L356.7 275.1L357.5 275.8M454.6 270.7L455.7 270.5L456.8 270.3L457.8 270.0L458.9 269.7L459.9 269.2M446.2 275.8L447.3 275.8L448.4 275.9L449.4 276.3L450.5 276.3L451.6 276.5M456.3 313.5L456.0 314.6L455.8 315.6L455.7 316.7L455.8 317.8M371.2 282.2L372.2 282.7L373.2 283.1L374.0 283.9L374.3 285.0L374.9 285.9L375.5 286.8L376.1 287.7M413.4 314.8L414.1 315.7L414.8 316.5L415.2 317.5L416.0 318.3L416.6 319.2M359.2 276.0L360.3 276.3L361.3 276.7L362.4 276.9L363.2 277.6L364.0 278.4L364.4 279.4M444.2 276.9L445.0 277.7L445.6 278.6L446.2 279.5L446.6 280.5L447.2 281.5L447.7 282.4M412.4 275.5L413.1 276.3L413.8 277.1L414.4 278.1L415.0 279.0L415.9 279.6L416.7 280.3L417.7 280.8M492.6 316.5L492.2 317.5M367.6 308.2L368.2 309.1L368.4 310.2L369.0 311.1M489.7 275.9L490.7 276.3L491.8 276.2L492.9 276.1L494.0 275.8M473.9 281.3L474.7 282.0L475.2 283.0L475.7 284.0M435.1 286.6L436.2 286.5L437.2 286.1L438.3 286.3M428.7 308.4L428.5 309.5L428.4 310.6L428.5 311.7L428.9 312.7M376.3 278.7L376.9 279.6L377.8 280.2L378.3 281.1M360.0 286.1L360.9 286.7L361.7 287.5L362.4 288.3M382.6 266.6L382.9 267.6L383.3 268.7L383.7 269.7L383.9 270.8L384.2 271.8M420.0 288.6L420.8 289.3L421.9 289.7L422.9 289.9L424.0 289.8L425.1 289.9L426.2 289.5M403.5 288.5L403.8 289.5L404.1 290.6L404.6 291.6L405.0 292.6L405.8 293.4L406.4 294.2M486.3 258.9L485.6 259.7L485.1 260.7L484.3 261.4M396.3 262.4L397.4 262.7L398.5 262.8L399.5 263.1L400.6 263.5L401.7 263.5L402.7 263.8M363.2 305.5L364.0 306.2L364.6 307.1L364.7 308.2L365.0 309.3L365.0 310.4L364.4 311.3M448.1 300.4L448.0 301.5L447.8 302.6L447.9 303.7L448.0 304.8L448.1 305.9M449.7 259.3L450.8 259.2L451.9 259.0M456.4 315.0L457.5 315.1L458.6 314.8L459.5 314.3L460.6 314.2L461.6 313.8L462.4 313.0L463.3 312.4M445.8 263.2L446.9 263.0L447.8 262.4L448.9 262.3L450.0 262.3M406.5 270.5L407.4 271.1L408.3 271.8L409.0 272.6L410.0 273.2L411.0 273.6M393.0 296.6L393.4 297.6L393.4 298.7L393.6 299.8M488.8 279.3L488.2 278.3L487.9 277.3L488.0 276.2L488.3 275.1L488.4 274.0L488.5 272.9L488.4 271.8M416.9 314.6L416.3 315.5L415.6 316.3L415.2 317.3L415.0 318.4M416.9 283.5L417.7 284.3L417.9 285.4L418.5 286.3M409.1 293.7L408.6 294.7L408.3 295.8L408.3 296.9L408.8 297.8L409.3 298.8L409.7 299.8M491.5 283.6L490.7 284.4L490.2 285.4L489.5 286.3L488.9 287.2L487.9 287.6L487.0 288.3M379.0 261.3L379.0 262.4L379.3 263.5L379.2 264.6M426.9 291.0L426.9 292.1L427.2 293.2L427.9 294.1M371.2 290.7L371.8 291.6L372.3 292.6L373.1 293.4L374.1 293.8M486.1 313.9L486.3 312.8L486.6 311.7L486.9 310.6L487.1 309.6M490.2 299.7L489.1 299.4L488.0 299.2L487.0 299.0M350.4 300.8L351.5 300.7L352.5 300.4L353.6 300.2L354.6 299.9L355.7 299.8M442.9 288.9L443.9 289.3L444.9 289.6L446.0 289.5L447.1 289.7L448.2 289.5L449.3 289.4L450.2 288.7M492.2 282.7L493.3 282.7L494.4 282.9M387.1 279.2L388.2 279.5L389.0 280.3L390.0 280.8L391.1 281.0L392.2 280.7M399.8 288.9L400.7 289.5L401.2 290.5L402.0 291.3L402.6 292.2M388.8 265.3L389.7 265.9L390.3 266.8L390.5 267.9L390.5 269.0M370.5 281.3L371.5 281.9L372.0 282.9L372.7 283.7L373.5 284.5L373.9 285.5M489.1 313.2L489.5 314.3L489.3 315.4L488.9 316.4L488.6 317.5M408.5 304.5L407.6 305.2L406.7 305.8L406.0 306.6L405.4 307.6L404.6 308.3L403.6 308.7M374.8 270.7L374.9 271.8L375.1 272.8L374.8 273.9L374.1 274.7L373.0 275.1M451.1 303.1L451.9 303.9L452.6 304.7L453.1 305.7L453.7 306.6L454.7 307.1L455.4 307.9M421.3 294.2L421.3 295.3L421.7 296.4L421.8 297.5M419.2 312.5L420.3 312.9L421.1 313.5L422.2 313.9L423.2 314.3L424.2 314.8L425.0 315.5M432.0 266.0L432.7 266.9L433.6 267.4L434.7 267.7L435.7 268.0L436.8 268.3L437.9 268.3M392.1 295.8L393.2 296.1L394.3 296.4L395.3 296.7M463.3 316.1L463.8 317.0L464.2 318.1M396.9 316.6L397.8 317.3L398.5 318.1L399.5 318.6M439.4 297.6L440.3 298.2L441.3 298.6L442.1 299.3M370.6 318.8L371.4 319.6M462.4 267.7L463.4 268.2L464.5 268.4L465.6 268.3L466.5 267.8L467.4 267.2L468.3 266.4L469.3 266.0M417.9 282.6L417.5 283.6L417.2 284.7L416.4 285.5L415.9 286.5L415.0 287.1M491.9 309.1L492.4 308.1L493.2 307.4L494.1 306.8M355.5 268.2L355.4 269.3L355.9 270.3L356.2 271.4L356.1 272.5L356.3 273.5M392.1 264.2L392.0 265.3L391.5 266.3L390.9 267.3L390.1 268.0M388.7 295.8L389.2 296.8L389.9 297.7L390.7 298.4M484.0 273.4L484.5 274.3L485.3 275.0L485.8 276.0L486.7 276.7L487.7 277.1L488.8 277.3L489.9 277.4M427.7 276.3L428.7 276.1L429.7 275.5L430.6 274.9L431.2 273.9M362.7 304.6L362.5 305.7L362.2 306.7L362.2 307.8L362.6 308.8L363.3 309.7L363.7 310.7L364.3 311.6M427.0 264.3L428.0 264.7L429.1 264.8L430.2 265.1L431.1 265.7L432.1 266.1M371.3 309.6L372.4 309.6L373.4 309.1L374.3 308.5L375.3 308.0L376.0 307.2L376.6 306.3M452.1 290.9L452.9 291.6L453.9 292.2L454.9 292.6L455.7 293.4L456.2 294.3L457.0 295.2L458.0 295.6M353.0 288.6L353.0 289.7L353.2 290.8L353.7 291.8M380.5 284.7L381.6 285.1L382.4 285.8L383.0 286.7L383.9 287.3M481.7 282.0L481.5 280.9L481.6 279.8L482.0 278.8L482.0 277.7L482.3 276.7M471.9 311.3L473.0 311.0L474.1 311.2L475.1 310.9L476.2 310.5L477.2 310.7M487.8 273.7L488.9 273.6L490.0 273.6L491.0 273.4L492.1 273.4L493.2 273.7L493.9 274.5L494.4 275.6M468.0 259.1L468.8 260.0L469.7 260.6L470.8 260.8L471.8 260.4L472.6 259.7L473.5 259.0M415.5 294.8L416.5 295.2L417.6 295.2L418.6 294.8L419.7 294.9L420.8 295.3M411.6 272.7L412.7 272.6L413.8 272.6L414.8 272.4L415.8 271.8M417.5 287.3L418.5 287.9L419.5 288.3L420.6 288.5L421.6 288.6M412.3 298.4L412.5 299.5L412.8 300.6L412.6 301.7L412.8 302.7M470.2 304.3L471.1 304.9L471.8 305.7L472.4 306.7M354.1 309.5L354.1 310.6L354.3 311.7L354.0 312.8L353.7 313.8L354.0 314.9L354.4 315.9M418.5 309.9L419.5 310.5L420.6 310.7L421.6 310.4M471.1 309.4L472.2 309.5L473.3 309.4L474.2 308.8L475.3 308.7M460.8 307.7L461.8 308.2L462.7 308.8L463.6 309.5L464.3 310.3L465.4 310.7L466.5 310.7L467.5 310.4M420.9 301.5L422.0 301.9L423.1 302.0L424.2 302.0L425.1 302.5L426.2 302.7M398.1 282.0L399.0 282.7L399.8 283.5L400.8 283.8L401.9 283.7M452.9 303.3L453.6 304.2L454.2 305.2L455.0 305.9L455.7 306.7M388.0 267.2L388.8 268.0L389.2 269.0L389.9 269.8L390.8 270.5L391.7 271.1M372.3 267.9L373.4 268.3L374.3 269.0L375.0 269.8L375.4 270.8M387.2 278.3L388.2 278.6L389.1 279.2L389.9 280.0L390.6 280.8M365.8 285.5L366.1 286.6L366.7 287.5L367.5 288.3L368.4 288.8L369.4 289.2L370.5 289.4M410.6 290.9L411.1 291.8L411.9 292.6L412.5 293.5L413.0 294.5M488.0 304.8L489.0 305.2L490.0 305.7L491.0 306.3L492.0 306.7L492.7 307.5M410.4 291.5L409.7 292.3L408.7 292.9L407.7 293.1L406.8 293.7L406.0 294.5L405.5 295.5L405.4 296.6M392.3 288.3L391.9 289.4L391.7 290.4L391.4 291.5L391.1 292.6L391.0 293.7L391.2 294.7M462.0 277.9L463.0 277.7L464.1 278.1L464.9 278.8M397.0 266.1L397.3 267.2L397.5 268.2L397.3 269.3L396.9 270.3L396.4 271.3L395.6 272.1L394.9 272.9M487.9 291.1L487.2 290.3L486.4 289.5L485.5 288.9M403.5 289.3L404.2 290.1L405.1 290.7L406.1 291.4L406.6 292.3M379.5 307.3L379.0 308.3L378.4 309.3L377.7 310.1M359.3 305.5L359.4 306.6L359.1 307.7L358.9 308.7L358.9 309.8M421.0 261.1L421.1 262.2L421.4 263.2L421.8 264.2L422.1 265.3M356.5 277.7L357.5 278.1L358.6 278.3L359.6 278.8L360.3 279.6L361.3 280.1M489.3 313.1L488.3 313.6L487.5 314.3L486.7 315.1M371.2 317.2L372.2 317.7L373.1 318.4L374.1 318.6L375.1 319.1L376.1 319.5M476.2 272.1L476.4 273.2L476.1 274.2L475.7 275.3M450.1 308.8L450.7 309.8L451.6 310.4L452.5 311.1L453.3 311.8M469.4 300.9L470.1 301.7L470.8 302.6L471.4 303.5M397.2 279.9L397.2 281.0L397.5 282.1L397.9 283.1L398.4 284.0L398.9 285.1L399.7 285.8M479.0 292.9L479.5 293.9L480.2 294.7L481.1 295.3L482.1 295.8L483.1 296.3L484.2 296.3L485.2 295.8M402.4 284.9L402.3 286.0L402.0 287.1L401.8 288.2L402.1 289.2L402.0 290.3L401.8 291.4L402.2 292.5M475.0 274.2L475.9 274.8L477.0 275.1L478.1 274.9L479.0 274.3L479.6 273.4L480.5 272.7M466.9 272.9L467.9 273.4L468.6 274.2L469.0 275.3L468.9 276.3L469.0 277.4M440.6 259.5L440.6 260.6L440.8 261.7L441.3 262.7L441.9 263.6L442.7 264.4M432.1 315.3L432.8 314.5L433.4 313.6L433.5 312.5L433.1 311.4L433.2 310.3L433.2 309.2M421.6 260.2L422.5 260.7L423.6 260.7L424.7 260.3L425.6 259.8M364.2 293.7L364.3 294.8L364.1 295.9L363.5 296.8L362.7 297.5M369.7 264.5L369.8 265.6L369.5 266.7L369.2 267.7L369.3 268.8L369.2 269.9L369.5 271.0L369.2 272.1M479.8 288.5L480.8 289.0L481.9 289.3L483.0 289.4L484.0 289.8M371.9 288.0L372.2 289.1L372.8 290.0L372.9 291.1L373.2 292.1L373.3 293.2L373.5 294.3M419.5 311.9L420.2 312.7L420.7 313.8L421.4 314.6L422.0 315.5L423.0 316.0L423.9 316.6L424.8 317.2M465.4 261.8L465.5 262.9L465.5 264.0L466.0 265.0L466.6 265.9L467.5 266.5M429.7 303.2L430.6 303.9L431.5 304.5L432.5 305.0L433.1 305.9M441.1 261.8L442.0 262.4L442.9 263.0L444.0 263.3L444.9 263.9L445.9 264.4L446.6 265.2L447.6 265.8M376.2 287.0L376.1 288.0L376.2 289.1L376.4 290.2L376.3 291.3L375.9 292.3L375.7 293.4L374.9 294.2M357.9 278.3L359.0 278.1L360.0 277.6L361.1 277.6M359.0 271.1L359.4 272.1L359.7 273.2L360.0 274.2L360.7 275.1L361.7 275.6L362.6 276.2L363.3 277.0M421.9 264.7L423.0 264.6L424.0 264.5L425.1 264.1L426.2 264.3L427.3 264.1M428.5 279.8L429.4 280.5L430.2 281.3L431.0 282.0L431.5 283.0L432.1 283.8M410.2 276.3L410.3 277.4L410.8 278.4L411.6 279.2L412.2 280.1L413.0 280.9L413.4 281.9M472.1 287.5L472.4 288.5L473.2 289.3L474.0 290.0L475.1 290.3L475.9 291.0M352.6 266.0L352.3 267.1L352.0 268.2L351.6 269.2L351.2 270.2L350.8 271.2M428.5 275.0L428.2 276.1L427.6 277.0L426.7 277.7L425.8 278.3L425.2 279.2L425.0 280.3L424.5 281.3M460.6 261.5L460.5 262.6L460.3 263.7L459.8 264.7L459.5 265.7M393.3 307.8L393.9 308.7L394.0 309.8L394.0 310.9M492.4 289.3L491.8 290.2L490.9 290.8L490.2 291.6L489.4 292.5M434.0 286.8L433.8 287.8L433.5 288.9L433.0 289.9L432.1 290.5L431.4 291.3L430.5 292.0M470.8 307.7L471.7 308.2L472.7 308.8L473.4 309.6L474.4 310.1L475.5 310.0L476.6 309.9M422.6 291.5L423.5 292.1L424.5 292.6L425.3 293.3M419.2 281.1L420.1 281.8L421.0 282.4L421.5 283.4L421.7 284.5L422.2 285.5L422.4 286.5L422.3 287.6M473.5 269.6L474.4 270.1L475.5 270.4L476.4 271.1L477.3 271.6M381.4 287.9L381.6 289.0L381.7 290.1L381.7 291.2L382.2 292.2L382.3 293.3L382.6 294.3M482.1 278.1L481.9 277.0L481.7 275.9L481.2 274.9L480.8 273.9M424.4 298.2L424.4 299.3L423.9 300.3L423.8 301.4L423.4 302.4L423.0 303.4M430.2 304.1L430.5 305.2L431.1 306.1L432.0 306.7L432.8 307.5L433.8 308.0L434.8 308.5L435.6 309.2M430.9 290.7L431.1 291.7L431.5 292.8L432.3 293.5L433.4 293.8M433.7 266.7L433.6 267.8L433.1 268.8L433.0 269.9L432.6 270.9L432.4 272.0M349.5 318.0L350.5 318.6L351.5 318.7L352.5 319.2L353.4 319.9L354.4 320.2M420.8 299.6L421.7 300.1L422.8 300.3L423.9 300.6L425.0 300.4L426.0 299.9L426.8 299.1L427.4 298.3M488.0 293.5L488.0 292.4L488.1 291.3L488.2 290.2L488.7 289.3L489.3 288.3L489.5 287.3M353.7 307.5L354.4 308.4L355.2 309.2L355.6 310.2L356.2 311.1L356.8 312.1L356.9 313.1M463.1 304.7L463.5 305.8L463.4 306.9L463.0 307.9L463.2 309.0L463.8 309.9M473.1 272.1L473.0 273.2L473.3 274.3L473.8 275.2L474.4 276.2L475.3 276.7L476.4 276.8M448.9 269.3L449.7 270.1L450.1 271.1L450.8 271.9L451.5 272.8L451.9 273.8L452.0 274.9L452.0 276.0M471.3 298.4L472.2 297.7L473.1 297.0L473.9 296.3L474.4 295.3L474.7 294.3M397.7 296.4L398.0 297.5L398.0 298.6L398.0 299.7L398.2 300.8L398.5 301.8L399.0 302.8L399.9 303.4M487.7 286.4L488.7 286.7L489.7 287.2L490.8 287.4M394.5 280.0L395.4 280.6L396.3 281.1L397.2 281.9L397.6 282.8M449.7 287.4L450.7 287.7L451.7 288.3L452.3 289.2L452.5 290.3L452.4 291.4M378.1 279.1L378.9 279.8L379.8 280.5L380.5 281.3L381.0 282.3M389.1 309.6L389.1 310.7L389.4 311.7L389.8 312.7L390.7 313.4L391.2 314.4M491.9 267.8L492.4 268.8L492.8 269.8L493.6 270.5M403.6 300.7L404.3 301.5L404.9 302.5L405.8 303.2M350.3 310.0L351.0 310.9L351.6 311.8L351.8 312.8L351.8 313.9L351.8 315.0L351.2 316.0L350.3 316.6M421.0 270.9L422.1 271.0L423.0 271.4L423.9 272.2L424.8 272.7L425.7 273.3L426.8 273.7M433.2 295.0L434.0 295.8L434.8 296.5L435.4 297.5L435.9 298.5L435.9 299.6L436.3 300.6L436.5 301.7M376.1 319.5L377.1 320.0M386.2 285.1L387.3 285.3L388.2 285.9L389.3 286.1L390.4 285.8L391.5 285.9L392.6 286.1L393.7 286.1M352.0 312.3L351.1 312.9L350.5 313.8L349.7 314.6L348.8 315.2M443.4 278.3L443.6 279.4L444.2 280.2L444.9 281.1L445.4 282.1L445.8 283.1M452.1 285.8L452.2 286.9L451.8 287.9L451.8 289.0L451.3 290.1M445.5 263.6L444.9 264.6L444.0 265.3L443.3 266.1L442.3 266.6L441.5 267.3L440.6 268.0M396.1 307.2L397.2 307.1L398.3 306.8L399.1 306.1M478.7 284.0L479.1 285.0L478.9 286.1L478.3 287.0M420.9 264.5L422.0 264.6L423.1 264.4L424.2 264.5L425.2 264.2L426.1 263.6M363.8 299.8L363.0 300.5L362.3 301.3L361.8 302.3M458.4 292.1L458.6 293.1L459.0 294.2L459.5 295.2L459.7 296.3L459.4 297.3M471.3 266.7L472.0 267.5L472.9 268.2L473.9 268.8L474.8 269.4M391.7 261.7L392.8 261.9L393.7 262.4L394.8 262.4M351.7 292.4L352.7 292.2L353.8 292.6L354.8 292.9L355.9 293.3L356.9 293.6L358.0 294.0L358.8 294.7M429.3 278.7L429.7 279.7L429.6 280.8L430.0 281.9L430.0 283.0M431.9 301.8L431.6 302.8L431.1 303.8L430.3 304.5L429.6 305.3L428.8 306.1M470.6 274.7L471.6 275.2L472.3 276.0L473.0 276.9L473.4 277.9L474.0 278.9L474.9 279.4M431.9 263.6L431.9 264.7L431.9 265.8L432.5 266.8L433.2 267.6M443.2 268.8L444.3 269.1L445.4 269.1L446.4 268.8L447.4 268.3L448.4 267.9L449.4 267.4L450.5 267.2M413.7 286.2L414.7 286.5L415.8 286.5L416.9 286.3L417.9 285.9M367.7 271.9L368.0 273.0L368.3 274.1L368.0 275.1L367.6 276.1L367.6 277.2M419.1 266.8L419.4 267.9L419.4 269.0L418.9 270.0L418.0 270.6M442.3 266.2L443.3 265.8L444.1 265.0L445.1 264.6L446.2 264.5L447.3 264.6M458.5 301.7L458.1 302.7L457.9 303.8L458.0 304.9L458.3 306.0L458.3 307.1L458.6 308.1L459.4 308.9M391.0 301.8L392.1 301.7L393.2 301.7L394.3 301.8M431.7 304.8L432.7 305.3L433.8 305.7L434.8 305.9L435.9 305.7L437.0 305.4L438.0 305.2L439.0 304.7M478.1 281.9L479.1 282.5L479.9 283.2L480.4 284.2L481.1 285.0L481.8 285.9L482.6 286.6M367.0 290.9L367.1 292.0L367.0 293.1L367.2 294.1L368.0 295.0L368.8 295.7L369.6 296.5L370.6 296.9M433.1 300.5L434.1 301.0L435.1 301.5L436.1 302.0L437.1 302.4L438.1 302.9L439.1 303.2L440.2 303.2M426.6 276.1L427.7 276.0L428.6 275.4L429.6 275.0M483.8 317.3L484.3 316.3L484.8 315.3L484.9 314.3L485.1 313.2L485.6 312.2M481.7 316.8L482.1 315.8L482.2 314.7L482.4 313.6M463.8 283.5L463.5 284.6L462.9 285.5L462.7 286.6L462.1 287.5L461.2 288.1M414.0 267.9L413.9 269.0L413.8 270.0L413.2 271.0M397.3 268.2L398.4 268.2L399.4 267.7L400.2 266.9L400.6 265.9L401.1 264.9L401.5 263.9M466.0 265.1L466.0 266.2L466.3 267.3L466.9 268.2L467.1 269.3L467.7 270.2L468.2 271.2L468.4 272.3M478.2 267.1L478.8 268.1L479.4 269.0L480.1 269.9L480.4 270.9L480.8 271.9M353.5 270.7L354.6 270.7L355.7 270.4L356.6 269.8L357.6 269.4M445.6 263.9L445.8 264.9L446.4 265.9L446.5 267.0L446.6 268.1M435.2 286.3L434.8 287.3L434.0 288.0L432.9 288.3L431.8 288.4L430.7 288.5L429.8 289.0M443.4 265.2L444.0 266.1L445.0 266.6L446.1 266.9L446.9 267.6L448.0 267.9M365.8 300.4L364.9 301.0L364.3 301.9L364.2 303.0L363.9 304.1L363.9 305.2L363.6 306.3L363.2 307.3M465.2 287.3L465.6 288.3L465.8 289.4L466.5 290.3L467.2 291.1L467.8 292.1L468.5 292.9L469.4 293.5M369.4 287.4L369.4 288.5L369.1 289.6L369.2 290.7L369.2 291.8M459.6 290.2L459.6 291.3L459.9 292.3L460.2 293.4L460.2 294.5L460.1 295.5L460.2 296.6M476.5 261.3L477.3 262.0L477.8 263.0L478.2 264.0L478.3 265.1L478.1 266.2L478.1 267.3M422.4 310.6L422.1 311.6L421.7 312.7L421.3 313.7M458.4 295.8L459.2 296.6L459.9 297.4L460.5 298.3L461.5 298.9L462.5 299.3M456.0 306.5L456.5 307.5L457.3 308.3L458.2 308.8L458.9 309.7L459.1 310.7L459.1 311.8M446.7 311.2L447.8 311.3L448.8 311.7L449.7 312.5M415.4 294.4L416.2 295.2L416.9 296.0L417.9 296.6L419.0 296.7M429.3 280.2L429.6 281.3L429.4 282.4L428.9 283.4L428.1 284.0L427.0 284.2M492.3 305.3L491.6 306.2L490.9 307.0L490.4 308.0L490.1 309.1L489.8 310.1M377.0 308.5L378.1 308.8L379.2 308.8L380.2 309.3M432.3 271.3L432.8 272.3L433.6 273.0L434.3 273.9L435.3 274.4L436.1 275.2M452.3 305.1L453.3 305.6L454.4 305.8L455.4 306.1L456.5 306.2M435.8 304.8L436.9 305.0L438.0 305.0L439.1 305.0L440.2 305.1L441.2 305.4L442.2 306.0L443.2 306.5M466.0 291.1L467.1 291.1L468.2 290.9L469.3 290.8L470.2 290.3L471.3 290.1L472.3 289.5L473.3 289.1M404.4 286.9L405.4 287.2L406.5 287.5L407.3 288.2M349.6 304.0L350.3 304.9L350.9 305.7L351.5 306.7L352.2 307.5L353.1 308.2M367.5 302.4L368.2 303.3L368.6 304.3L369.3 305.2L369.9 306.1M429.1 282.2L430.2 282.2L431.3 282.1L432.4 281.9L433.5 282.1L434.6 282.2L435.7 282.4M381.3 271.8L381.9 272.7L382.4 273.7L382.7 274.8M459.6 290.7L460.3 291.6L460.9 292.5L461.1 293.6L461.7 294.5L462.0 295.6M407.9 300.0L408.6 300.8L409.0 301.9L409.3 302.9L409.6 304.0L409.6 305.1M407.0 273.5L407.9 274.3L408.8 274.8L409.7 275.5L410.6 276.1L411.7 276.2L412.7 276.0L413.8 275.6M417.1 268.4L417.4 269.5L417.6 270.5L417.6 271.6M468.3 291.1L469.4 290.9L470.5 291.0L471.5 291.3L472.4 291.9L473.5 292.1M353.3 268.9L354.4 269.2L355.3 269.9L356.2 270.4L357.3 270.6L358.3 271.2L359.3 271.4L360.2 272.1M408.3 316.7L409.2 317.3L410.3 317.7L411.2 318.3L412.2 318.6M433.5 263.0L434.0 264.0L434.4 265.0L434.5 266.1M391.2 261.8L392.2 261.6L393.3 261.1L394.4 261.2L395.4 260.8L396.5 260.7L397.5 261.2L398.4 261.8M393.7 315.6L394.7 316.1L395.7 316.6L396.7 316.9L397.7 317.5L398.3 318.4L398.4 319.5M412.8 303.9L413.9 303.5L414.7 302.9L415.6 302.1L416.0 301.1M387.7 267.6L388.8 267.6L389.9 267.5L390.9 267.9L391.9 268.2M405.5 267.2L406.5 267.7L407.5 268.2L408.1 269.1M352.0 292.4L352.0 293.5L352.6 294.4L352.7 295.5L352.9 296.6L352.5 297.6L351.8 298.5L351.2 299.4M411.9 305.7L413.0 305.9L414.1 306.2L415.0 306.7M475.7 275.3L476.7 275.6L477.8 275.9L478.9 275.9M429.4 303.9L430.3 304.6L431.3 304.9L432.2 305.6L433.2 306.1M391.8 304.6L392.5 305.5L393.1 306.4L393.9 307.1L394.5 308.0L395.5 308.6L396.0 309.5M380.6 317.9L381.6 318.4L382.3 319.2M407.5 282.8L408.4 283.5L409.5 283.6L410.5 284.2L411.5 284.6L412.6 284.8L413.5 285.4M428.1 280.9L428.4 281.9L428.7 283.0L429.0 284.1M461.5 269.4L461.4 270.5L461.8 271.5L462.1 272.6L462.6 273.6L463.1 274.6L464.0 275.2M371.3 272.2L372.1 273.0L372.4 274.1L372.5 275.2L372.2 276.3M406.4 286.6L407.4 287.0L408.4 287.5L409.5 287.7M467.8 300.1L467.6 301.1L467.6 302.2L467.9 303.3L468.1 304.4L467.7 305.4M427.3 271.4L426.7 272.3L425.7 272.8L424.8 273.5M397.3 318.2L398.0 319.0M447.6 299.9L448.7 299.9L449.8 300.0L450.9 299.6L451.6 298.8L452.2 297.9M358.3 291.0L358.3 292.1L358.2 293.2L358.3 294.3L358.3 295.4L358.0 296.5L357.7 297.5M399.9 269.5L400.9 270.0L401.8 270.6L402.9 270.7L403.9 271.3L404.9 271.6M445.5 281.9L446.2 282.8L447.0 283.6L447.6 284.5L448.4 285.2L449.2 286.0L449.9 286.8M396.5 290.8L397.5 291.0L398.6 291.1L399.6 291.5L400.6 292.0M380.5 296.2L381.1 297.1L381.7 298.1L382.1 299.1M460.2 305.4L460.5 306.5L460.9 307.5L461.0 308.6M397.5 278.6L398.0 279.6L398.1 280.7L398.4 281.8L398.2 282.8M352.4 270.7L352.5 271.8L352.2 272.8L351.5 273.7M489.3 258.7L489.7 259.7L490.2 260.7L490.7 261.7M391.6 289.8L392.6 290.3L393.5 291.0L394.2 291.8L394.9 292.6L395.7 293.4M384.1 279.3L385.2 279.3L386.3 279.3L387.4 279.3L388.4 278.9M350.6 273.1L351.5 273.7L352.5 274.1L353.4 274.8L354.4 275.3L355.5 275.3L356.6 275.2M455.9 264.1L456.8 264.7L457.8 265.1L458.9 265.3L459.9 265.8L460.8 266.4M457.4 281.8L458.5 282.1L459.3 282.7L460.3 283.2L461.4 283.3L462.5 282.9M489.2 289.9L488.4 290.7L487.8 291.6L487.0 292.4M466.0 266.6L465.4 267.5L464.7 268.3L463.9 269.1L463.0 269.8L461.9 270.0M437.6 283.1L438.7 283.4L439.7 283.7L440.8 283.8L441.9 283.6L442.9 283.3L444.0 283.3M421.4 299.5L422.1 298.7L422.9 298.0L424.0 297.8L425.1 297.7M415.7 266.2L416.0 267.2L415.9 268.3L416.1 269.4L416.7 270.3L417.0 271.4M462.7 272.0L463.5 272.7L464.1 273.7L464.8 274.5L465.6 275.3L466.0 276.3L466.6 277.2M440.7 260.8L441.8 260.8L442.8 261.3L443.5 262.1L443.9 263.1L444.5 264.1L444.7 265.2L444.8 266.3M414.2 276.8L415.1 277.5L416.2 277.8L417.3 277.9L418.3 278.2L419.4 278.0L420.4 277.4L421.4 277.2M490.3 286.2L489.2 285.9L488.4 285.2L487.5 284.5L486.9 283.6L486.4 282.6M483.8 261.4L482.8 260.9L482.0 260.1L481.3 259.3L480.5 258.5M370.6 302.8L371.4 303.4L372.5 303.7L373.6 303.9M398.5 298.6L398.2 299.7L397.7 300.6L397.1 301.6L396.8 302.6L396.2 303.6M368.2 313.8L368.6 314.8L368.5 315.9L368.7 317.0L368.8 318.1L368.4 319.1L367.6 319.9M417.9 270.4L418.9 269.9L419.9 269.5L421.0 269.3M402.9 310.5L403.3 311.5L404.2 312.2L404.9 313.0L405.6 313.8M401.6 285.1L402.7 285.1L403.8 284.9L404.8 284.4L405.7 283.9L406.7 283.3L407.7 282.9L408.6 282.2M393.6 278.8L394.5 279.4L395.3 280.2L395.9 281.1M448.4 262.8L449.3 263.5L450.0 264.3L450.7 265.2L451.3 266.1L451.5 267.2L452.1 268.1M486.4 275.3L487.5 275.3L488.6 275.4L489.5 276.0L490.1 276.9L490.5 277.9L490.5 279.0M387.4 302.1L388.3 302.7L388.8 303.7L389.1 304.7L389.0 305.8L389.4 306.8L389.7 307.9L390.0 308.9M392.5 299.1L391.8 300.0L391.0 300.7L390.0 301.1L388.9 301.4L387.8 301.6M452.4 313.4L452.9 314.4L453.7 315.2L454.5 315.8L455.0 316.8L455.8 317.5L456.6 318.3M357.6 272.8L358.2 273.8L358.3 274.9L358.6 275.9L358.6 277.0L358.3 278.1L357.9 279.1L357.4 280.1M469.2 315.2L469.6 316.2L470.4 317.0L471.3 317.6M430.2 314.7L430.1 315.8L430.5 316.9L430.4 318.0L430.1 319.0M487.4 297.7L488.4 297.6L489.5 297.9L490.5 298.3L491.5 298.8L492.6 298.9L493.7 298.6M407.0 261.0L408.0 260.5M458.7 262.4L458.8 263.5L458.9 264.6L459.3 265.6L460.0 266.5L461.0 267.0L462.1 267.2L463.2 267.2M430.6 309.4L431.0 310.4L431.3 311.4L431.8 312.4L431.9 313.5L432.5 314.4M389.0 308.5L389.7 309.3L390.2 310.3L390.2 311.4L390.7 312.3L391.6 313.0L392.2 313.9L393.0 314.7M450.6 290.9L451.7 290.8L452.7 290.4L453.8 290.6L454.9 290.5L455.9 290.9M438.9 292.1L439.9 291.7L440.9 291.2L442.0 291.2L443.0 291.4L444.1 291.8M393.0 281.7L394.0 282.2L394.9 282.8L395.9 283.1L397.0 283.4L398.1 283.3L399.1 283.7L400.0 284.4M392.9 265.1L393.5 266.0L393.9 267.0L394.2 268.1L394.8 269.0M469.8 306.6L470.9 306.8L472.0 306.5L473.0 306.7L474.1 306.7M471.7 303.3L472.5 304.1L472.8 305.1L473.4 306.1L474.2 306.8L475.2 307.2M452.9 274.9L453.8 275.6L454.8 276.0L455.8 276.5L456.6 277.2L457.7 277.6M430.5 264.8L430.6 265.9L430.6 267.0L430.7 268.1M403.7 318.8L404.7 319.0L405.8 318.7L406.6 318.0M353.5 305.1L353.7 306.2L353.5 307.2L353.6 308.3L353.4 309.4L353.2 310.5L352.8 311.5M386.3 313.5L387.4 313.3L388.5 313.0L389.4 312.5L390.5 312.2L391.2 311.4L392.2 310.9L393.2 310.4M483.9 287.7L483.2 287.0L482.3 286.3L481.7 285.4M414.6 300.3L415.2 301.2L415.8 302.1L416.2 303.1L416.1 304.2L416.5 305.3L416.5 306.4L416.8 307.4M398.9 308.1L398.5 309.1L397.9 310.0L397.7 311.1L397.9 312.2L398.0 313.3L398.1 314.4M474.6 308.9L473.6 309.2L472.5 309.4L471.4 309.2L470.4 308.7L469.4 308.4M379.7 317.8L380.2 318.8L380.7 319.8M479.9 260.2L480.9 260.6L482.0 260.7L483.1 260.6L484.2 260.4L485.1 259.8L485.7 258.9M378.0 289.6L378.6 290.5L379.3 291.4L380.2 292.0L381.3 292.1L382.3 292.5L383.4 292.7L384.5 292.7M375.1 313.3L376.2 313.3L377.2 312.7L378.1 312.2L378.8 311.3L379.2 310.3L379.9 309.4M464.4 315.8L464.8 316.9L464.7 318.0M482.9 291.7L483.8 291.1L484.7 290.4L485.7 290.0L486.7 289.7M375.9 288.0L377.0 288.0L378.1 287.6L379.1 287.2L380.2 287.0L381.3 287.1L382.3 286.8L383.3 286.3M403.2 276.7L403.9 277.5L404.7 278.3L405.5 279.1L406.0 280.0L406.1 281.1L405.7 282.1M386.7 314.5L387.7 314.7L388.8 314.9L389.9 315.2L390.9 315.5M399.3 272.4L399.7 273.4L400.4 274.3L401.3 275.0L402.0 275.8L402.4 276.8L402.3 277.9L402.6 279.0M354.3 306.8L354.2 307.9L353.6 308.8L353.4 309.9L353.5 311.0L353.8 312.1L354.3 313.0L354.4 314.1M384.2 265.3L385.1 265.9L386.1 266.2L387.2 266.4M456.9 269.0L456.5 270.1L456.6 271.2L457.3 272.1L458.2 272.6M384.0 311.3L383.8 312.3L383.4 313.4L383.0 314.4L383.0 315.5L383.2 316.6L383.8 317.5M475.2 295.3L476.3 295.2L477.3 294.8L478.0 293.9L478.4 292.9M456.3 302.2L457.4 302.4L458.2 303.1L459.3 303.5M349.6 280.0L350.2 280.9L351.1 281.5L351.9 282.3M472.4 268.4L473.0 269.2L474.0 269.7L474.9 270.4L475.8 271.1M394.1 264.2L394.3 265.3L394.8 266.3L394.9 267.4L394.5 268.4L393.7 269.2L393.2 270.1M473.3 303.3L474.0 304.1L475.0 304.7L476.1 304.9M390.9 300.5L391.4 301.5L391.8 302.6L391.8 303.7L391.6 304.8M483.0 288.8L482.0 288.4L480.9 288.1L479.8 288.3L478.9 288.8L477.9 289.4L477.0 289.9L476.2 290.7M396.0 279.6L396.4 280.6L396.9 281.5L397.9 282.1L398.5 283.0M478.2 282.9L478.2 284.0L478.5 285.0L478.5 286.1L478.2 287.2M446.8 290.0L447.2 291.1L447.8 292.0L448.4 292.9M492.6 278.0L491.5 277.7L490.5 277.5L489.4 277.3L488.3 277.0L487.4 276.4L486.7 275.5L486.0 274.8M419.9 306.8L421.0 306.9L422.1 307.0L423.2 306.9L424.2 307.3L425.2 307.9L426.2 308.3M352.1 310.3L353.1 310.2L354.2 310.2L355.2 309.7L356.3 309.7L357.4 309.7L358.5 309.9M441.2 272.0L441.5 273.1L442.1 274.0L442.3 275.1L442.1 276.2L442.0 277.3L441.6 278.3L441.5 279.4M423.5 262.7L422.6 263.3L422.0 264.2L421.1 264.9L420.5 265.8L419.8 266.7L419.3 267.6M458.9 267.4L459.0 268.5L459.2 269.6L459.4 270.7L460.0 271.7L460.6 272.5L461.3 273.4L461.5 274.5M435.7 307.0L436.8 307.3L437.9 307.6L439.0 307.6L440.1 307.5L441.2 307.5L442.3 307.5M382.1 297.0L383.1 296.6L384.2 296.6L385.2 296.2L386.3 295.9L387.3 295.3L388.2 294.8M399.0 298.3L400.1 298.6L401.2 298.6L402.3 298.8L403.2 299.3L404.0 300.1L404.3 301.1L404.8 302.2M357.3 264.5L358.3 265.0L359.2 265.6L360.2 266.1L360.9 266.9L361.5 267.9M436.0 272.4L436.9 273.1L437.8 273.7L438.5 274.6L438.9 275.6L439.3 276.6L439.9 277.5L440.8 278.2M427.5 290.5L428.0 291.5L428.8 292.3L429.4 293.2L430.1 294.0M359.1 318.3L360.1 318.8L361.2 319.0L362.3 318.7M441.8 296.5L442.0 297.6L442.0 298.7L442.0 299.8L442.2 300.9M380.7 269.5L380.7 270.6L381.1 271.6L381.3 272.7M462.5 269.9L462.5 271.0L462.9 272.0L463.5 273.0L464.3 273.7M391.1 309.8L391.1 310.9L391.5 311.9L391.8 313.0L391.6 314.1L391.0 315.0L390.3 315.9M445.2 282.8L446.1 283.3L447.0 284.0L448.1 284.2M491.1 271.6L491.8 270.8L492.1 269.7L492.8 268.9M414.8 300.9L415.6 300.2L416.3 299.3L416.9 298.4M479.3 288.2L480.4 288.3L481.5 288.4L482.6 288.1L483.5 287.6M490.6 303.6L489.9 304.4L489.6 305.5L489.7 306.6M452.6 269.4L453.6 269.8L454.6 270.2L455.7 270.3L456.7 270.8L457.8 271.0L458.7 271.6M372.7 316.3L373.8 316.4L374.9 316.2L376.0 316.5L377.1 316.7L378.1 316.8L379.2 317.1L380.3 317.0M475.1 278.3L475.2 279.4L475.3 280.5L475.2 281.6L475.1 282.7L475.4 283.7L475.9 284.7M433.7 316.1L434.7 316.6L435.3 317.5L436.2 318.1L437.0 318.9M435.5 263.9L436.6 263.5L437.5 263.0L438.6 262.8L439.7 263.1L440.7 263.5M423.2 298.1L423.8 299.0L423.9 300.1L424.3 301.2L424.3 302.3L424.1 303.3L423.5 304.2L422.5 304.8M402.1 305.6L402.0 306.7L401.4 307.6L400.6 308.4M357.0 287.9L358.0 288.3L358.9 289.0L359.7 289.7L360.6 290.4L361.6 290.8L362.6 291.3L363.3 292.1M356.0 310.5L355.4 311.4L355.0 312.4L354.4 313.3L353.5 314.1L352.5 314.5L351.9 315.4L351.5 316.4M459.7 288.7L459.8 289.8L460.4 290.8L460.8 291.8L461.6 292.5L462.0 293.6M492.3 268.9L493.0 268.1L493.4 267.1L494.2 266.3M411.4 268.4L412.1 267.6L412.5 266.5L412.3 265.5M410.1 297.1L410.3 298.2L410.3 299.3L410.7 300.3M367.7 306.0L368.5 306.8L369.6 307.1L370.6 307.6M435.5 315.4L435.9 316.4L435.9 317.5L436.2 318.5M400.0 281.3L400.9 282.0L401.8 282.6L402.9 282.9L403.8 283.5L404.5 284.4L404.9 285.4M354.6 284.4L355.0 285.4L355.6 286.3L356.3 287.2L356.6 288.2L357.1 289.2M434.0 274.6L435.0 275.0L436.0 275.3L437.1 275.4M414.8 276.9L415.8 277.3L416.8 277.8L417.8 278.0L418.9 278.2L420.0 278.5M364.6 285.7L365.4 286.5L365.8 287.5L366.5 288.4M365.1 270.4L365.7 271.4L366.3 272.3L366.7 273.3M355.1 316.4L356.0 317.0L357.0 317.4L358.1 317.3L359.2 316.9L360.3 316.9L361.3 317.0L362.4 317.4M458.1 279.5L457.8 280.6L457.9 281.7L458.3 282.7L458.1 283.8L457.8 284.9L457.9 286.0L457.8 287.1M435.5 294.1L436.4 294.8L437.5 295.1L438.6 294.9M395.7 269.9L396.6 270.6L397.3 271.4L398.3 271.8L399.4 272.0L400.3 272.6M414.4 299.0L415.1 299.8L415.6 300.8L415.9 301.8L416.2 302.9L416.0 304.0L415.9 305.1L415.4 306.0M472.1 278.8L472.9 279.5L473.7 280.3L474.5 281.0M492.9 286.2L493.5 287.1L493.8 288.2M359.2 275.5L360.2 275.7L361.3 275.5L362.2 274.9L363.2 274.5L364.3 274.1L365.1 273.4L366.0 272.7M431.8 314.8L432.5 315.6L433.6 316.0L434.5 316.5L435.5 317.1L436.4 317.7L437.4 318.3L438.4 318.5M433.8 283.0L434.6 283.8L435.4 284.5L436.3 285.2L437.0 286.0L437.9 286.7L438.4 287.7M428.2 313.4L428.7 314.4L428.9 315.5L428.7 316.6L429.1 317.6L429.2 318.7M442.4 276.7L443.0 277.6L443.3 278.6L444.0 279.5L445.0 280.0L445.8 280.8L446.7 281.4M411.7 287.0L411.6 288.1L411.6 289.2L411.2 290.2L410.5 291.1M445.9 276.5L447.0 276.8L448.1 277.0L449.2 277.0L450.2 277.4L451.3 277.3M465.3 290.7L466.2 291.4L466.7 292.4L467.5 293.0M388.0 291.2L388.9 290.7L390.0 290.3L391.1 290.5L392.1 290.3L393.2 290.2L394.3 290.1L395.3 289.6M393.2 300.9L393.8 301.8L394.8 302.4L395.8 302.8L396.8 303.2L397.8 303.7L398.9 304.0L399.7 304.8M398.2 277.0L398.3 278.1L398.2 279.2L397.6 280.1M350.1 280.6L350.6 281.6L351.2 282.5L351.7 283.5L352.4 284.3M419.4 260.8L420.4 261.1L421.5 261.0L422.6 260.8L423.7 260.5M466.0 267.8L466.1 268.8L466.5 269.9L467.2 270.7L467.4 271.8L467.6 272.9L468.1 273.8L468.4 274.9M479.3 276.6L480.3 277.2L481.1 278.0L481.5 279.0M458.5 259.6L459.2 260.4L459.7 261.4L460.0 262.4L460.4 263.5L460.8 264.5L460.8 265.6L460.4 266.6M479.6 258.8L480.0 259.9L480.2 260.9L480.6 262.0L481.2 262.9L482.0 263.6L482.9 264.2L483.8 264.9M484.2 282.8L485.0 282.1L485.5 281.1L485.8 280.0M391.8 311.0L392.4 312.0L392.7 313.0L393.2 314.0M369.7 265.2L369.1 266.2L368.5 267.1L367.8 267.9L367.3 268.9M451.3 302.2L451.7 303.2L452.5 304.0L453.5 304.5L454.5 304.9L455.4 305.5L456.3 306.2L456.8 307.1M358.5 268.3L359.4 268.9L360.4 269.3L361.5 269.5L362.5 269.7M365.6 300.8L366.3 301.7L367.1 302.5L367.7 303.4L368.3 304.3L368.5 305.4L368.6 306.5L368.1 307.5M459.4 305.8L459.4 306.9L458.9 307.8L458.5 308.8L457.8 309.7L457.3 310.7L456.7 311.6L456.5 312.7M408.9 304.1L409.6 305.0L410.0 306.0L410.0 307.1L410.4 308.1M403.7 276.1L404.4 276.9L405.3 277.6L406.1 278.3L406.6 279.3M372.1 299.6L372.9 300.4L373.7 301.1L374.6 301.7L375.3 302.6L376.2 303.2L376.8 304.1L377.6 304.8M371.6 293.9L372.2 294.8L372.9 295.6L373.4 296.6L373.8 297.7L373.6 298.8M482.3 302.4L482.5 303.4L482.4 304.5L482.8 305.5L483.5 306.4L484.2 307.2M352.8 282.3L352.6 283.4L352.5 284.5L352.8 285.5L353.1 286.6M353.8 293.6L354.8 294.0L355.9 294.1L357.0 294.0M458.3 307.1L459.2 307.8L460.2 308.0L461.3 308.4M350.6 262.0L350.9 263.0L351.6 263.9L352.5 264.5L353.3 265.2M488.0 275.7L487.2 276.5L486.3 277.1L485.4 277.8L484.4 278.2M422.5 281.1L422.6 282.2L422.7 283.3L423.2 284.3L424.0 285.1L425.0 285.6M411.0 279.1L412.0 279.4L412.9 280.1L413.7 280.9L414.3 281.8L415.1 282.6L415.9 283.3M390.1 293.6L391.1 293.8L392.2 293.5L393.1 292.9L394.1 292.4L394.7 291.5M460.3 285.9L460.7 286.9L460.7 288.0L461.1 289.0M423.7 294.5L424.6 295.0L425.7 295.1L426.8 294.9M476.0 261.9L477.0 262.5L477.5 263.5L478.0 264.5L478.1 265.6L478.6 266.5M429.2 299.4L430.0 300.2L430.9 300.8L431.6 301.7M386.9 316.8L388.0 317.2L388.9 317.9L389.8 318.3L390.5 319.2M349.6 291.6L350.2 292.5L350.5 293.6L351.1 294.5L351.4 295.5L352.1 296.4L352.6 297.4L352.9 298.4M410.7 278.5L411.7 279.0L412.5 279.7L413.4 280.4M432.3 275.4L432.4 276.5L432.3 277.6L431.9 278.6L431.8 279.7L432.0 280.8L432.2 281.8M458.5 294.9L457.5 295.3L456.4 295.7L455.4 295.6L454.3 295.7M371.5 282.9L371.8 284.0L372.2 285.0L373.1 285.7L374.2 285.9L375.2 286.4L376.3 286.4M412.0 315.1L412.6 316.0L413.5 316.6L414.5 317.1L415.6 317.2M400.4 278.8L400.9 279.8L401.9 280.4L402.8 281.0L403.9 281.1L404.9 281.3L406.0 281.1L407.1 281.4M424.9 274.3L425.0 275.4L424.9 276.5L424.4 277.4M380.0 269.1L381.1 269.3L382.1 269.7L383.2 270.0L384.2 270.4L385.0 271.1L385.6 272.0M450.5 281.6L451.4 282.3L452.0 283.2L453.0 283.7L454.1 283.8M442.0 285.7L441.4 286.6L440.6 287.3L440.0 288.2L439.5 289.2M437.7 289.3L438.8 289.4L439.9 289.0L440.9 288.7M461.8 282.7L462.9 282.5L463.9 282.0L465.0 281.8L465.9 281.2M376.6 294.8L377.6 295.4L378.1 296.4L378.2 297.5L378.7 298.5L379.3 299.4L380.2 300.0L380.7 301.0M433.2 270.5L432.6 271.5L432.3 272.5L431.7 273.4L430.7 273.9L429.7 274.3L428.6 274.3L427.6 274.8M475.1 291.8L475.8 292.7L476.3 293.7L476.8 294.7L477.0 295.8M350.7 282.9L351.8 283.2L352.8 283.7L353.6 284.5L354.0 285.5L354.8 286.2L355.8 286.7M487.0 286.4L486.8 285.3L486.4 284.3L486.3 283.2L486.4 282.1L486.9 281.1M487.2 288.2L488.0 287.4L489.0 287.0L489.8 286.2M493.6 294.7L493.1 293.7L493.0 292.6L492.6 291.5L492.3 290.5M456.1 282.7L456.7 283.7L457.6 284.3L458.1 285.2L458.5 286.2L458.8 287.3M492.4 264.3L491.8 265.2L491.3 266.2L490.9 267.2L490.8 268.3M443.3 316.4L443.9 317.3L444.7 318.1L445.6 318.7M351.6 278.1L352.0 279.1L352.7 280.0L353.6 280.5L354.5 281.2L354.9 282.3L355.0 283.4M399.1 285.1L399.7 286.0L400.4 286.9L401.0 287.8L401.5 288.8M362.8 296.2L363.6 296.9L364.7 297.1L365.8 297.2L366.8 297.6L367.9 298.0L369.0 298.1L370.1 298.2M377.3 285.8L377.2 286.8L377.4 287.9L377.2 289.0L376.8 290.0L376.5 291.1M355.8 288.8L356.2 289.8L356.9 290.7L357.6 291.5L358.2 292.5L358.3 293.5M377.5 306.3L378.4 307.0L379.4 307.5L380.0 308.4L380.9 309.0L381.7 309.8L382.5 310.5M400.6 279.7L400.8 280.7L400.6 281.8L400.2 282.8L399.7 283.9L398.9 284.6L398.2 285.4M362.4 262.4L363.1 263.2L364.1 263.6L365.2 263.7L366.1 264.4L367.2 264.7L367.9 265.6L368.6 266.4M393.3 260.8L392.7 261.7L392.4 262.8L392.4 263.9M383.5 271.6L383.8 272.6L384.5 273.4L385.4 274.1L386.5 274.3L387.4 274.9L388.1 275.7M397.0 275.3L397.8 274.5L398.6 273.8L399.3 272.9L399.8 271.9L400.4 271.0L401.0 270.1M474.2 310.0L473.8 311.0L473.2 311.9L473.0 313.0L472.5 314.0L471.8 314.8L470.8 315.3M390.1 299.5L391.2 299.5L392.2 299.2L393.2 298.8L394.0 298.0L394.9 297.4M389.4 273.6L389.1 274.6L389.2 275.7L389.2 276.8L389.6 277.8L390.2 278.8M493.4 281.9L492.6 282.7L492.2 283.7L491.4 284.5L491.0 285.5L490.1 286.2L489.4 287.1M362.5 307.6L362.3 308.7L362.1 309.8L361.7 310.8L361.0 311.6L360.2 312.5L359.3 313.0L358.5 313.8M402.7 292.2L402.7 293.3L402.8 294.4L403.0 295.5L402.8 296.6L402.4 297.6M381.1 311.8L381.7 312.7L382.2 313.7L382.8 314.6L382.9 315.7M397.4 263.6L398.2 264.4L399.2 264.7L400.1 265.3L401.2 265.5L402.3 265.4L403.4 265.1L404.4 264.8M376.0 266.7L375.4 267.6L374.5 268.2L374.0 269.2L373.2 269.9L372.1 270.3M378.7 275.6L379.6 276.2L380.6 276.6L381.3 277.5L382.0 278.3L382.5 279.3M371.0 310.4L371.5 311.4L371.9 312.4L372.0 313.5M360.7 274.9L360.5 276.0L360.2 277.0L359.4 277.8M374.3 306.3L375.3 306.9L376.1 307.6L377.1 308.1L378.1 308.5M398.1 297.6L398.0 298.7L397.9 299.8L397.8 300.9L398.0 301.9L398.6 302.8L399.4 303.6M356.2 302.6L356.5 303.7L356.7 304.8L357.3 305.7L358.2 306.4L359.2 306.7M405.3 316.4L406.0 315.6L406.7 314.7L407.1 313.7L407.2 312.6M378.3 271.8L378.6 272.8L379.0 273.9L379.0 275.0L379.6 275.9L380.0 276.9L380.2 278.0M371.3 318.0L372.2 318.7L373.2 319.1L374.0 319.9M403.5 305.1L404.6 304.9L405.6 304.5L406.6 304.1L407.7 304.0L408.7 304.4L409.6 305.1L410.6 305.5M362.4 268.6L363.2 269.4L364.2 269.8L365.1 270.3L366.2 270.5L367.3 270.4L368.4 270.1L369.3 269.6M363.1 279.3L363.4 280.4L363.7 281.5L364.1 282.5L364.6 283.4L364.7 284.5L364.6 285.6L364.5 286.7M378.7 315.6L379.6 316.2L380.6 316.4L381.7 316.8L382.8 316.8L383.9 316.6L384.8 316.1M400.6 315.8L400.8 316.9L401.0 318.0L400.7 319.0M367.7 311.0L368.4 311.8L369.4 312.4L370.1 313.2M380.6 293.6L381.4 294.3L381.9 295.3L382.7 296.1L383.4 296.9L384.2 297.7L384.8 298.6L385.4 299.5M367.8 269.7L368.5 270.5L369.6 270.9L370.6 270.8L371.7 270.7M366.9 318.2L367.6 319.0L368.2 319.9M396.5 306.6L396.5 307.7L397.0 308.7L397.3 309.8L397.2 310.9M396.8 309.6L397.8 310.1L398.8 310.5L399.8 311.0L400.8 311.5L401.8 311.8L402.7 312.4L403.8 312.7M373.7 287.8L374.8 287.9L375.8 288.3L376.9 288.3L378.0 288.4L379.1 288.3L380.1 287.8M398.7 315.9L399.7 316.4L400.6 317.0L401.5 317.6L402.3 318.4M374.5 301.3L375.3 302.1L376.0 302.9L377.0 303.4L377.9 304.0L378.5 304.9M366.3 281.2L367.0 282.1L367.6 283.0L367.8 284.0L368.0 285.1L367.9 286.2L367.6 287.3M358.3 310.0L359.0 310.8L360.0 311.2L361.0 311.7L361.8 312.5M406.7 284.1L407.8 284.3L408.8 284.7L409.6 285.4L410.5 286.1L411.0 287.0L411.1 288.1L411.2 289.2M361.1 300.7L361.1 301.8L361.5 302.8L362.2 303.7L362.7 304.7M409.6 263.8L409.8 264.9L410.3 265.9L410.7 266.9L411.0 268.0L411.1 269.1L410.8 270.2L410.6 271.2M356.9 271.8L357.6 272.6L358.6 273.1L359.7 273.2L360.8 273.3L361.9 273.2L362.9 272.6L363.6 271.8M376.0 266.3L376.7 267.2L377.0 268.2L376.8 269.3M381.3 314.5L381.9 315.3L382.4 316.3L383.0 317.3M371.3 298.0L371.8 299.0L372.1 300.1L372.9 300.9L373.8 301.5L374.8 301.9L375.5 302.7L376.4 303.4M365.5 310.7L366.6 310.9L367.6 311.3L368.6 311.7L369.7 312.1L370.7 312.4L371.8 312.6L372.9 312.7M356.5 309.8L357.4 310.4L358.3 311.0L359.4 311.3L360.5 311.2M351.6 263.5L351.2 264.5L350.6 265.4L350.3 266.5L349.5 267.3L348.7 268.0M391.5 263.9L391.1 264.9L390.2 265.6L389.6 266.5L388.6 267.0L387.9 267.8L387.0 268.5M365.5 268.2L364.7 268.9L363.9 269.6L362.8 270.0L361.7 270.2L360.7 269.9L359.6 269.9L358.5 269.8M369.8 272.9L370.8 273.4L371.5 274.3L371.8 275.3L372.3 276.3L372.8 277.3M383.5 317.1L384.3 317.9L384.9 318.8M360.0 301.5L359.8 302.6L359.6 303.7L359.3 304.7L358.6 305.5L357.8 306.3L356.9 306.9M382.3 287.6L383.1 288.4L383.8 289.3L383.9 290.4L383.7 291.4L383.3 292.5M385.8 273.7L386.6 274.5L387.2 275.4L388.1 276.1M360.6 299.7L360.7 300.8L361.2 301.8L361.4 302.9L361.2 304.0L360.7 304.9M400.6 274.1L401.1 275.2L401.3 276.2L401.6 277.3L401.4 278.4L401.4 279.5L401.6 280.5M362.5 288.2L363.4 288.9L364.4 289.3L365.3 289.9L366.4 290.0L367.4 290.4M361.3 276.5L362.3 276.9L363.2 277.5L363.9 278.3L364.9 278.9L365.9 279.1M355.0 299.8L356.1 300.3L357.1 300.5L358.1 301.0L359.2 301.0L360.3 300.9L361.4 301.0M363.6 281.2L363.4 282.2L363.3 283.3L363.1 284.4L362.7 285.4M392.0 289.2L392.7 290.0L393.7 290.4L394.8 290.4L395.9 290.5L396.9 290.9L398.0 291.1L399.1 290.9M363.4 292.5L364.2 293.2L365.0 294.0L366.0 294.4M353.3 269.7L352.9 270.7L352.4 271.6L351.7 272.5M387.7 295.3L388.4 296.1L388.9 297.1L389.4 298.1L389.7 299.2L390.5 300.0L391.2 300.8M376.7 269.1L377.8 269.5L378.6 270.1L379.7 270.4L380.8 270.6L381.9 270.6M365.2 309.6L366.0 310.4L366.6 311.3L366.6 312.4L366.4 313.5L366.5 314.6L366.4 315.7M377.0 277.1L377.8 277.9L378.8 278.3L379.7 278.9L380.5 279.7M370.0 278.2L371.0 278.0L372.1 278.2L373.2 278.2L374.3 278.6M367.9 302.6L368.9 303.2L369.5 304.1L370.4 304.6L371.5 305.0M394.0 291.1L393.7 292.2L393.5 293.2L393.7 294.3L394.3 295.3L395.2 295.8L396.0 296.6L397.0 297.0M381.1 270.2L382.0 271.0L382.7 271.8L383.5 272.5L384.0 273.5M375.3 289.3L376.4 289.4L377.5 289.3L378.6 289.1L379.5 288.5L380.1 287.6L380.9 286.9M384.3 272.8L385.3 273.3L386.3 273.7L387.1 274.4L388.0 275.1L388.9 275.8M395.9 281.7L397.0 281.7L398.0 282.1L398.9 282.9L399.5 283.7M366.3 276.0L366.2 277.1L366.3 278.2L366.9 279.1L367.1 280.2M393.4 286.5L392.4 287.0L391.3 287.0L390.4 287.6L389.3 287.6L388.2 287.5M365.7 292.5L366.0 293.6L366.3 294.7L366.3 295.8L366.5 296.8M370.8 291.3L371.7 290.7L372.4 289.8L373.2 289.0L374.1 288.4M392.3 282.6L392.9 283.6L393.1 284.6L393.1 285.7L393.4 286.8L393.5 287.9L394.1 288.8L394.9 289.5M356.5 263.1L357.5 262.8L358.4 262.1M373.1 303.3L373.9 304.1L374.4 305.0L375.3 305.7L376.4 306.0L377.5 305.9L378.5 305.7M407.6 303.1L408.2 304.0L409.1 304.6L410.2 304.8L411.3 304.7L412.3 304.4M358.2 278.6L359.1 279.2L359.6 280.2L360.2 281.1L360.7 282.1L361.2 283.1L362.1 283.7L362.8 284.5M356.3 272.2L357.3 271.7L358.2 271.1L359.1 270.5L360.0 269.9L361.1 269.6L362.0 269.0M353.3 282.7L353.9 283.6L354.5 284.5L354.8 285.6M381.4 274.5L382.0 275.5L382.6 276.4L383.3 277.3L384.0 278.1M406.6 318.7L407.4 319.5M407.4 308.8L408.0 309.7L408.3 310.8L408.5 311.9M365.0 272.9L365.7 273.7L366.3 274.6L367.3 275.2L368.2 275.9M363.4 276.8L364.5 277.2L365.3 278.0L366.1 278.7L367.1 279.1M390.9 291.3L391.6 292.2L392.0 293.2L392.7 294.1L393.0 295.1L393.5 296.1L393.6 297.2M395.4 302.1L394.7 302.9L393.9 303.7L393.7 304.8M397.8 313.8L398.9 313.9L400.0 313.9L401.0 313.5M399.3 263.4L399.4 264.5L399.8 265.5L400.0 266.6L400.6 267.6M370.4 303.0L370.6 304.1L370.6 305.2L370.6 306.3L370.4 307.4L370.1 308.4L369.8 309.5L369.6 310.6M398.5 270.0L399.2 270.9L399.8 271.8L400.8 272.2L401.8 272.7M380.6 263.8L381.4 264.6L382.0 265.5L382.4 266.5L383.1 267.3L383.5 268.4M409.5 303.5L410.5 304.1L411.5 304.6L412.4 305.2L413.5 305.3L414.4 305.9L415.2 306.6L415.8 307.5M375.1 276.5L376.2 276.6L377.1 277.1L378.2 277.4L379.3 277.3L380.4 277.2M389.8 305.8L390.9 305.9L392.0 306.0L393.1 305.6M400.9 270.2L402.0 270.1L403.0 269.7L403.7 268.9L404.4 268.1M360.0 269.4L360.1 270.5L360.0 271.5L359.7 272.6L359.6 273.7L359.2 274.7L358.8 275.7M384.8 261.5L385.2 262.6L385.4 263.6L385.7 264.7L385.8 265.8L386.5 266.7L386.9 267.7M359.0 267.4L359.9 268.0L361.0 268.2L362.1 268.0L363.0 267.4L363.7 266.6L364.2 265.6M349.5 280.7L349.8 281.8L349.8 282.9L349.4 283.9L349.2 285.0L349.3 286.1M403.8 261.1L404.0 262.2L403.7 263.2L403.3 264.3L403.1 265.3L402.8 266.4L402.7 267.5M359.9 272.6L361.0 272.7L362.1 272.5L363.0 271.9L364.1 271.6L365.2 271.4M384.6 289.0L384.8 290.1L385.3 291.1L385.4 292.2L385.4 293.3L385.0 294.3M390.8 314.6L391.8 315.1L392.6 315.9L393.5 316.6L394.2 317.4L394.6 318.4L395.3 319.3M352.9 306.3L352.9 307.4L353.3 308.4L353.2 309.5L353.2 310.6M385.3 306.8L385.5 307.8L385.8 308.9L385.9 310.0L386.1 311.1L385.8 312.1M378.4 317.4L379.1 318.2L379.6 319.2M377.2 319.0L377.7 320.0M398.4 302.7L398.2 303.8L397.7 304.8L397.4 305.9M410.1 289.3L409.6 290.3L409.3 291.4L409.4 292.5L408.9 293.5L408.3 294.4L407.5 295.2M376.7 309.8L377.4 310.6L378.1 311.5L379.1 312.0L380.2 312.0M376.8 312.7L377.9 313.1L379.0 313.1L380.1 313.0L381.2 312.9M357.2 277.3L358.2 277.9L359.3 278.0L360.4 278.0L361.4 278.5L362.5 278.4L363.6 278.3M390.4 265.8L390.5 266.9L390.4 268.0L390.0 269.0L390.0 270.1L389.6 271.1L388.8 271.9M379.4 317.0L379.7 318.0L379.9 319.1M407.1 300.9L407.8 301.8L408.8 302.4L409.5 303.2M386.3 278.7L387.1 279.5L387.7 280.5L388.1 281.5M409.8 297.7L410.4 298.6L411.1 299.5L411.3 300.6L411.2 301.7L411.2 302.8L411.4 303.9M353.5 305.4L354.5 305.8L355.3 306.6L356.1 307.3L356.7 308.2L357.4 309.1M401.1 307.2L401.4 308.2L402.1 309.1L403.0 309.7L403.9 310.4L404.3 311.4L404.4 312.5M356.6 316.2L357.4 316.9L358.2 317.7L358.7 318.7L359.3 319.6M404.0 311.4L405.0 311.7L406.0 312.2L406.6 313.1L407.2 314.0L407.4 315.1L408.0 316.0M368.9 284.2L369.3 285.2L370.1 286.0L370.8 286.8L371.7 287.4L372.6 288.1L373.7 288.4M362.3 275.7L363.2 276.3L364.0 277.1L364.4 278.1L365.1 279.0L365.7 279.9M369.2 293.8L369.4 294.9L369.5 296.0L369.7 297.1M402.5 276.1L403.1 277.0L403.9 277.8L404.8 278.4L405.5 279.2M393.2 271.5L394.0 272.2L394.9 272.8L396.0 273.1L397.1 273.2L398.2 273.2L399.3 273.2M398.9 307.1L399.9 306.8L401.0 306.9L402.0 307.5L402.6 308.4L403.5 309.1L403.8 310.1L403.7 311.2M370.2 306.4L370.6 307.5L371.0 308.5L371.3 309.5M373.3 289.1L374.3 289.6L375.1 290.3L376.1 290.8L377.2 291.0L378.1 291.6L378.9 292.3L379.6 293.2M370.6 310.0L370.6 311.0L370.7 312.1L370.9 313.2L370.6 314.3M357.5 265.7L358.4 266.3L359.4 266.9L360.1 267.7L360.8 268.5L361.6 269.2M357.0 277.2L358.1 277.4L359.0 277.9L360.1 278.0M397.8 286.4L397.2 287.4L397.1 288.5L397.4 289.5L397.9 290.5L398.5 291.4M407.7 312.5L408.0 313.6L408.6 314.5L409.2 315.4L409.8 316.3L410.2 317.4L410.5 318.4M408.7 288.0L409.2 289.0L409.2 290.1L409.6 291.1L409.8 292.2M382.6 280.6L383.4 281.3L383.8 282.3L384.4 283.3L385.0 284.2M389.3 282.0L389.7 283.1L390.1 284.1L390.9 284.9L391.7 285.7L392.5 286.4L393.5 286.8M365.0 304.2L366.1 304.3L367.1 304.7L368.2 304.7L369.2 305.1L370.3 305.3L371.4 305.5L372.5 305.4M356.8 297.2L357.8 297.6L358.9 297.8L360.0 297.6L361.1 297.8L362.1 298.1M384.8 284.9L385.6 285.6L386.2 286.5L386.5 287.6L387.1 288.5L388.0 289.1L389.1 289.4L390.2 289.3M409.9 276.1L410.7 276.8L411.5 277.6L412.5 278.0L413.5 278.6L414.5 278.8M395.9 284.1L397.0 283.8L397.9 283.1L398.4 282.1L398.7 281.1L398.5 280.0L398.2 278.9L397.5 278.1M365.2 315.4L365.9 316.3L366.8 317.0L367.8 317.5L368.5 318.2L369.0 319.3M383.6 297.5L384.1 298.4L384.9 299.2L386.0 299.5L387.1 299.7L388.2 299.6L389.3 299.5M405.0 308.6L405.0 309.7L404.8 310.8L404.8 311.9L404.7 313.0M395.8 295.3L396.2 296.4L397.0 297.1L398.0 297.6L399.0 298.0M398.5 303.0L398.5 304.1L398.8 305.1L398.7 306.2M402.9 279.1L402.1 279.8L401.4 280.7L400.8 281.6L400.3 282.6L399.5 283.3M362.4 288.9L362.2 290.0L362.0 291.1L361.5 292.1L360.9 293.0L360.2 293.8M356.4 275.3L357.4 275.7L358.5 275.8L359.4 276.3L360.3 277.0L361.2 277.7L362.2 277.9M350.3 297.4L351.4 297.4L352.5 297.3L353.6 297.2L354.7 297.1L355.8 297.3L356.8 297.7L357.9 298.0M390.9 315.6L391.9 316.0L392.9 316.3L394.0 316.5L395.1 316.3L396.2 316.2L397.2 316.5L398.1 317.2M359.4 285.0L360.5 285.1L361.6 285.3L362.6 285.7L363.6 286.1L364.7 286.4L365.6 286.9M380.4 285.9L381.5 286.1L382.6 286.2L383.7 286.4M369.1 288.0L369.6 289.0L370.3 289.8L370.5 290.9L371.0 291.9L371.8 292.7M355.7 281.4L356.7 281.9L357.8 282.1L358.8 282.6L359.7 283.2L360.7 283.7M355.9 262.8L356.8 262.2M371.7 266.5L372.2 267.5L372.5 268.6L372.5 269.7L372.8 270.7L372.8 271.8L372.3 272.8M370.9 281.6L371.0 282.7L370.8 283.8L370.4 284.8L370.4 285.9L370.8 286.9M403.9 304.3L403.8 305.4L404.2 306.4L404.2 307.5M392.9 306.7L393.6 307.5L394.4 308.3L395.0 309.2L395.8 310.0L396.2 311.0L396.6 312.0M409.9 279.6L409.7 280.7L409.1 281.6L408.2 282.1L407.2 282.7L406.2 283.1L405.1 283.0L404.0 283.2M360.4 278.6L359.9 279.6L359.8 280.7L360.1 281.7L360.9 282.5L361.6 283.4L362.6 283.8M380.4 281.3L381.4 281.8L382.2 282.6L383.0 283.3L383.9 283.9L384.5 284.9L385.3 285.6L386.1 286.4M394.7 306.5L395.7 306.9L396.5 307.7L397.3 308.4L398.0 309.2L398.6 310.2M400.6 292.5L401.3 293.4L401.8 294.4L402.4 295.3L403.3 295.9L404.1 296.7L404.6 297.7M360.4 263.1L360.7 264.2L360.9 265.3L361.5 266.2L361.8 267.2M388.8 273.7L389.7 274.1L390.8 274.1L391.8 273.6L392.9 273.6L394.0 273.4L395.0 273.0L396.1 273.1M354.8 311.9L355.3 312.9L355.9 313.8L356.4 314.8L357.2 315.6L358.1 316.2L359.2 316.5M366.6 282.1L367.6 282.4L368.7 282.6L369.6 283.2L370.7 283.5L371.6 284.1L372.3 285.0L372.8 286.0M357.1 308.1L357.9 308.9L358.4 309.9L359.3 310.5L360.4 310.9M382.1 264.5L383.0 265.1L383.8 265.9L384.6 266.6L385.2 267.6L385.6 268.6L385.7 269.7M379.4 278.7L379.0 279.7L378.3 280.5L377.4 281.2L376.4 281.7L375.5 282.3L374.4 282.5L373.3 282.7M410.7 299.5L411.7 299.9L412.7 300.3L413.8 300.5M376.4 271.1L376.2 272.2L375.5 273.1L374.7 273.8L373.7 274.3L372.6 274.4L371.6 274.1L370.5 273.9M368.9 279.3L369.3 280.3L369.5 281.4L369.9 282.4L369.7 283.5M360.0 301.2L361.1 301.4L362.1 301.8L362.9 302.5L363.7 303.3L364.1 304.3M373.7 265.5L373.5 266.5L373.4 267.6L373.2 268.7M393.6 314.9L394.5 315.6L395.2 316.4L396.2 316.8L397.3 316.7L398.4 316.9L399.5 317.3M371.0 300.7L371.9 301.3L372.9 301.7L373.8 302.4M377.0 308.1L377.1 309.2L377.2 310.3L377.3 311.4L377.4 312.5L377.4 313.6L377.1 314.6M386.5 278.4L386.4 279.5L386.1 280.6L385.6 281.6L384.8 282.3L383.7 282.6L382.7 283.0M391.2 309.8L391.0 310.9L391.3 311.9L391.7 312.9M403.0 294.3L403.5 295.3L404.0 296.3L404.1 297.4L404.4 298.4L404.9 299.4L405.5 300.3M378.1 283.3L379.0 283.9L379.9 284.6L380.8 285.1M377.0 315.2L377.8 316.0L378.6 316.7L379.1 317.6L379.5 318.7L380.2 319.5M389.4 264.9L390.3 265.4L391.4 265.5L392.5 265.4L393.6 265.5L394.7 265.3L395.8 265.0L396.9 264.9M353.1 262.7L354.2 262.5L355.3 262.6L356.3 262.4M387.2 315.8L388.1 316.3L389.1 317.0L389.9 317.6L391.0 318.0L391.8 318.7M398.2 262.6L398.7 263.5L399.0 264.6L399.2 265.7L399.1 266.8L398.8 267.8M380.7 266.7L381.0 267.7L381.0 268.8L381.3 269.9L381.5 271.0L381.4 272.1L381.1 273.1M387.8 313.0L388.3 313.9L388.4 315.0L388.5 316.1M358.2 308.9L359.1 309.4L360.2 309.6L361.3 309.8L362.3 309.4L363.4 309.1M392.9 277.1L393.6 278.0L394.4 278.7L394.9 279.7L395.8 280.4L396.7 281.1M397.9 291.1L399.0 291.4L399.9 292.0L400.9 292.4M366.3 310.1L366.7 311.1L366.9 312.2L367.4 313.2L367.3 314.3L366.9 315.3L366.1 316.0L365.1 316.6M370.8 311.1L371.7 311.7L372.6 312.3L373.7 312.5M399.9 308.2L400.6 309.0L401.4 309.8L402.3 310.3L403.1 311.1L403.6 312.1L403.9 313.2L404.4 314.1M396.3 282.8L397.2 283.5L398.0 284.3L398.4 285.3M401.5 264.4L402.6 264.4L403.7 264.5L404.8 264.2M378.0 310.1L377.2 310.9L376.2 311.2L375.4 311.9L374.3 312.3L373.3 312.5M397.8 316.4L398.0 317.5L397.7 318.6L397.4 319.6M376.2 270.5L376.3 271.6L376.3 272.7L376.7 273.8M406.3 284.0L405.9 285.0L405.5 286.1L405.4 287.2M378.6 297.3L378.5 298.4L378.7 299.5L378.9 300.6L379.2 301.7L379.1 302.8L379.3 303.8M406.5 316.3L406.0 317.3L405.2 318.0L404.6 318.9M387.5 289.0L388.5 289.5L389.2 290.3L390.2 290.7L391.3 291.1L392.1 291.8L393.2 292.2M362.1 265.0L361.9 266.1L361.4 267.0L361.2 268.1L361.1 269.2L360.9 270.3L360.5 271.3L360.2 272.4M388.0 294.3L388.5 295.3L388.7 296.4L388.5 297.5L388.5 298.6L388.2 299.6M359.0 263.6L359.2 264.7L358.8 265.7L358.6 266.8L358.7 267.9L359.3 268.9M373.3 265.5L374.4 265.5L375.4 265.9L376.5 266.2L377.5 266.5L378.6 266.6M410.7 281.7L411.7 282.1L412.8 282.1L413.9 282.4L414.7 283.1L415.1 284.1L415.1 285.2M409.9 269.8L410.1 270.9L410.0 271.9L409.7 273.0M394.6 316.6L394.9 317.7L395.0 318.8M355.2 311.4L355.6 312.4L356.3 313.2L357.3 313.7M359.2 312.0L359.1 313.1L359.3 314.2L359.9 315.1L360.8 315.8L361.8 316.0L362.9 316.0L364.0 316.1" stroke="#e0e0e0" stroke-width="0.35" fill="none"/><path d="M396.0 267.4L397.0 267.7L398.0 268.2L398.7 269.0L399.6 269.6L400.7 269.8L401.8 269.9L402.9 269.7M378.9 300.2L378.8 301.3L378.7 302.4L378.3 303.4L377.9 304.4L377.8 305.5L378.1 306.6M354.7 299.4L355.3 300.3L355.5 301.4L355.9 302.4L356.1 303.5L356.3 304.6L356.3 305.7L356.4 306.8M486.0 287.4L485.6 286.3L485.1 285.4L484.7 284.4M477.2 317.4L478.3 317.5L479.4 317.3L480.5 317.2L481.4 316.6M375.4 275.5L375.6 276.6L375.3 277.6L374.8 278.6L374.2 279.5L373.6 280.4L372.8 281.2L372.4 282.2M444.8 314.4L444.9 315.5L445.0 316.6L445.0 317.7L445.5 318.7M480.2 308.0L480.4 309.1L480.4 310.2L480.6 311.3L480.7 312.4L481.2 313.3L482.1 314.0L482.7 314.9M427.9 309.7L427.7 310.8L427.6 311.9L427.5 313.0M405.9 277.6L406.9 277.2L407.8 276.6L408.6 275.8L409.0 274.8M426.8 289.9L427.9 289.8L429.0 290.0L430.1 290.0L431.1 289.6L432.2 289.6M465.2 263.2L466.2 263.7L466.9 264.5L467.7 265.3L468.6 266.0M434.1 282.4L434.8 283.2L435.8 283.8L436.7 284.5L437.5 285.1L438.2 286.0M452.8 312.5L453.9 312.7L454.9 313.0L455.9 313.6L457.0 313.6L458.0 314.1L458.8 314.8M464.7 304.4L465.7 304.1L466.8 304.0L467.9 303.7L468.7 303.0L469.4 302.1L470.2 301.4L470.8 300.5M489.8 285.0L489.1 285.9L488.5 286.8L488.3 287.9L487.8 288.9L487.5 289.9M429.4 270.6L430.4 270.9L431.3 271.5L432.3 272.0M442.5 275.7L442.1 276.8L441.9 277.9L441.9 279.0L442.1 280.0M362.2 272.8L362.6 273.9L363.3 274.7L364.3 275.2L365.0 276.0L365.9 276.7M407.0 285.6L407.9 286.2L408.6 287.1L409.6 287.6L410.7 287.5L411.8 287.7M417.6 294.4L417.3 295.5L416.6 296.3L416.0 297.2L415.9 298.3L416.2 299.4L416.4 300.5L416.4 301.6M453.7 298.1L454.6 298.6L455.4 299.4L456.5 299.7L457.6 299.6L458.7 299.5L459.6 299.0M392.7 286.6L392.6 287.7L392.7 288.7L393.1 289.8L393.0 290.9M421.3 299.8L422.3 300.1L423.4 300.1L424.5 300.0L425.6 299.8L426.7 299.5L427.8 299.5M401.5 282.6L402.2 283.5L402.8 284.4L403.7 285.1L404.3 285.9L405.2 286.6L406.1 287.2L407.2 287.6M389.6 279.8L389.9 280.9L389.9 282.0L390.0 283.0M393.8 307.8L393.8 308.9L393.3 309.9L393.2 311.0L393.2 312.1M353.4 283.5L354.0 284.4L355.0 284.8L356.1 284.9L357.1 285.4L358.2 285.6L359.2 286.1M398.2 274.9L397.8 275.9L397.2 276.8L396.2 277.4L395.5 278.2L394.5 278.8M465.8 316.7L466.9 316.9L468.0 316.8L469.1 316.7M487.3 282.0L487.0 283.0L487.0 284.1L487.1 285.2L487.6 286.1L487.8 287.2L488.1 288.3M491.1 312.8L492.2 312.8L493.3 312.6L494.3 312.2M374.1 266.2L375.1 266.8L375.9 267.5L376.6 268.4L376.9 269.4L377.0 270.5L377.6 271.5M391.6 293.1L392.7 293.3L393.8 293.1L394.8 292.7L395.7 292.0M376.3 262.0L375.7 263.0L375.2 263.9L374.9 265.0L374.3 265.9L373.6 266.7M363.8 287.4L364.5 288.3L365.3 289.0L366.4 289.4L367.5 289.4L368.4 290.0M354.4 279.1L355.4 278.6L356.3 277.9L357.2 277.3M396.5 300.1L397.3 300.7L398.2 301.4L399.1 302.0L400.1 302.5M439.2 281.0L440.3 281.2L441.4 281.1L442.3 280.6L443.2 279.9L444.2 279.5M465.7 276.7L465.9 277.8L466.1 278.9L466.8 279.7M384.8 302.9L385.0 304.0L385.0 305.1L384.9 306.2L384.9 307.3L385.1 308.4L385.3 309.5L385.1 310.6M438.7 288.3L439.0 289.4L438.9 290.5L439.0 291.6L439.4 292.6L440.1 293.5L440.8 294.3M422.1 298.7L421.6 299.7L421.6 300.8L421.2 301.9M399.9 304.9L399.4 305.9L399.0 306.9L398.9 308.0L398.2 308.9L397.6 309.8M438.3 272.7L438.4 273.8L438.8 274.8L439.5 275.7L439.8 276.7L439.9 277.8M374.6 304.1L374.4 305.2L373.7 306.0L372.8 306.6L371.7 306.7L370.6 306.4M445.5 274.7L445.4 275.8L445.3 276.9L445.3 278.0M424.1 297.8L424.9 298.6L425.9 299.1L427.0 299.3L428.1 299.4L429.1 299.0L430.2 299.0M471.4 304.2L472.5 303.8L473.6 303.9L474.6 303.8L475.7 303.8L476.8 303.4L477.9 303.4M439.2 268.0L439.4 269.1L439.4 270.2L439.3 271.3M455.8 262.1L456.4 263.0L457.2 263.8L457.6 264.8L458.0 265.8L458.2 266.9L458.0 268.0L457.5 269.0M363.2 305.0L363.9 305.8L364.8 306.5L365.8 306.9L366.8 307.3M416.0 312.9L416.4 313.9L416.5 315.0L416.4 316.1L416.1 317.1L415.4 318.0M488.5 264.3L487.5 264.8L486.5 265.0L485.4 265.3L484.5 265.9M384.1 310.9L384.6 311.9L385.0 312.9L385.0 314.0L384.8 315.1L384.4 316.1L383.7 316.9L382.9 317.7M382.1 269.3L382.2 270.3L382.8 271.3L383.4 272.2L383.7 273.3L383.8 274.4M448.2 282.3L449.0 283.1L450.1 283.5L451.1 283.6L452.2 283.6L453.2 283.1L454.2 282.5L455.0 281.9M400.1 274.4L401.1 274.9L402.1 275.2L402.9 275.9L403.3 277.0M488.3 286.7L488.6 287.7L488.7 288.8L488.8 289.9M381.8 317.8L382.8 318.1L383.9 318.3L385.0 318.5L386.1 318.3L387.1 318.5L388.2 318.5M443.9 277.9L445.0 278.1L446.1 278.2L447.0 278.7M449.5 290.9L449.5 292.0L450.0 293.0L450.8 293.7L451.7 294.4L452.3 295.3L453.0 296.2M453.1 296.8L454.2 297.1L455.2 297.5L456.3 297.8L457.2 298.4L458.1 299.0M490.4 298.6L490.3 297.5L490.5 296.4L490.3 295.3L490.6 294.3L490.4 293.2M406.8 292.4L407.3 293.4L408.1 294.1L409.1 294.6L410.2 294.6L411.3 294.3L412.4 294.4M444.4 306.9L444.8 308.0L444.9 309.0L444.9 310.1L444.5 311.2L444.5 312.3L445.0 313.2L445.3 314.3M475.4 266.6L476.5 266.9L477.6 266.6L478.4 265.9L479.3 265.2L480.2 264.7M443.4 308.7L443.9 309.6L444.1 310.7L444.4 311.8L445.0 312.7L445.8 313.4L446.5 314.3L447.3 315.1M388.4 304.8L388.9 305.8L389.2 306.9L389.1 308.0L389.2 309.1L389.1 310.2L388.6 311.1L387.8 311.9M393.7 284.6L394.1 285.6L394.4 286.7L394.5 287.8L394.1 288.8M387.1 284.2L388.2 283.9L389.1 283.3L390.2 283.0M429.3 307.4L429.9 308.4L430.8 309.0L431.8 309.5L432.6 310.2M493.6 281.2L494.2 282.1M399.0 290.2L399.7 291.0L400.7 291.6L401.3 292.5M434.1 271.2L433.8 272.3L433.3 273.3L432.6 274.1M378.1 269.2L379.2 269.4L380.3 269.2L381.3 268.7M419.6 310.4L418.9 311.3L418.0 312.0L417.5 312.9L417.2 314.0L417.1 315.1L417.5 316.1M422.4 269.3L423.5 269.4L424.6 269.1L425.7 269.1L426.8 268.7M485.5 261.7L484.6 261.0L483.5 260.8L482.6 260.2M483.5 271.7L484.6 271.6L485.6 271.2L486.6 270.8L487.4 269.9L488.4 269.5M440.1 286.0L441.2 286.0L442.3 285.7L443.3 285.3L444.4 285.1L445.4 284.7L446.3 284.1M395.1 314.0L394.4 314.8L393.5 315.4L392.4 315.6M463.5 316.5L463.5 317.6M380.6 293.4L380.9 294.5L381.4 295.5L382.3 296.1L383.4 296.3M350.5 300.9L351.5 300.7L352.6 300.3L353.5 299.7M486.1 263.6L485.5 264.5L484.7 265.3L484.1 266.2L483.5 267.1L482.5 267.6L481.8 268.5M432.4 311.2L433.1 312.0L434.0 312.7L434.8 313.4L435.8 313.8L436.7 314.4M406.5 316.8L406.3 317.9L406.2 319.0M425.2 282.5L425.0 283.6L424.4 284.6L423.7 285.4L422.7 285.9L421.7 286.3M426.0 262.3L427.1 262.3L428.2 262.2L429.2 261.9M414.8 260.9L415.6 261.6L416.3 262.5L417.2 263.1M373.2 261.7L373.9 262.6L374.8 263.1L375.8 263.8L376.3 264.7L377.0 265.6L377.6 266.5L377.8 267.6M432.7 275.0L433.2 276.0L433.5 277.0L433.8 278.1L433.9 279.2L434.3 280.2M483.0 268.1L484.1 267.8L485.1 267.5L486.1 267.0L487.2 267.0L488.3 266.8M372.0 262.1L372.2 263.2L372.1 264.3L372.1 265.4M370.7 310.7L371.6 311.3L372.5 312.0L373.4 312.6L374.3 313.2L375.3 313.7M465.4 285.0L466.2 285.8L467.2 286.2L468.0 287.0L468.9 287.6L469.5 288.5L469.8 289.5M486.4 299.9L485.3 299.9L484.3 299.8L483.2 299.6M391.0 289.7L392.1 289.8L393.2 290.0L394.3 289.7L395.4 289.5M393.1 310.2L394.2 310.0L395.3 310.1L396.4 310.3L397.4 310.8M445.3 279.2L446.2 278.5L446.8 277.6L447.2 276.6L447.5 275.5M429.5 287.0L430.2 287.8L430.7 288.8L431.3 289.7L431.4 290.8L431.9 291.8M421.6 276.4L422.0 277.4L422.1 278.5L422.3 279.6L422.7 280.6M416.3 296.9L416.4 298.0L416.8 299.1L417.3 300.0L417.5 301.1M479.1 259.6L480.0 260.2L480.8 260.9L481.9 261.3L483.0 261.2L484.0 261.7L484.9 262.3M372.5 270.3L373.6 270.2L374.7 270.4L375.8 270.6L376.8 270.9L377.6 271.7M382.0 288.9L382.9 288.2L383.4 287.3L384.2 286.5L385.2 286.0L386.0 285.3L386.4 284.2L387.2 283.4M481.5 283.9L481.8 282.8L481.9 281.7L481.5 280.7L481.6 279.6L481.6 278.5L482.1 277.5L482.8 276.6M469.3 296.9L470.2 297.6L471.1 298.3L471.6 299.2L472.5 299.9M419.9 284.9L420.4 285.9L421.3 286.5L422.3 287.0M355.0 293.1L355.9 293.7L356.5 294.6L357.2 295.5L357.8 296.4L358.7 297.1L359.7 297.6M360.6 300.7L361.7 300.4L362.8 300.2L363.9 300.0L364.9 300.3M412.6 299.3L412.8 300.4L413.3 301.4L414.0 302.2L414.8 303.0M466.4 302.8L466.7 303.9L467.2 304.8L467.7 305.8L467.7 306.9L467.7 308.0M392.4 279.3L393.2 280.0L393.8 280.9L394.3 281.9L395.0 282.7M366.5 266.4L366.9 267.4L366.9 268.5L366.4 269.5L366.4 270.6M398.5 305.3L399.0 306.3L399.9 307.0L400.8 307.6M493.2 288.2L492.1 288.0L491.1 288.3L490.1 288.9M433.0 278.7L433.3 279.7L433.2 280.8L433.0 281.9M454.4 266.9L455.3 267.5L456.2 268.2L457.0 269.0L458.0 269.4L458.9 270.0M464.3 312.1L463.7 313.0L463.2 314.0L462.8 315.0L462.1 315.9L461.6 316.9M452.8 278.7L453.6 279.5L454.1 280.5L454.3 281.5L454.5 282.6L454.2 283.7M493.5 267.4L493.9 268.4L494.4 269.3M434.1 266.9L434.8 267.8L435.1 268.8L435.5 269.8L435.6 270.9L435.5 272.0L435.8 273.0L436.5 273.9M478.5 275.5L479.2 276.4L479.5 277.4L479.6 278.5L480.2 279.4M353.0 277.9L353.7 278.8L354.2 279.8L354.9 280.6L355.8 281.1L356.9 281.6L358.0 281.5M442.9 298.4L443.9 298.2L445.0 298.0L446.1 298.2L447.2 298.1L448.1 297.5L449.0 296.8L449.9 296.3M451.9 285.4L451.9 286.5L452.0 287.6L452.5 288.6L452.6 289.7L453.2 290.6M351.2 308.0L352.0 308.8L352.9 309.4L354.0 309.8L355.1 310.0L356.0 310.6L356.9 311.1M392.5 263.5L393.1 264.4L393.3 265.5L393.8 266.5M349.4 271.9L350.5 272.0L351.5 271.6L352.5 271.1L353.5 270.7L354.6 270.6L355.7 270.4L356.6 269.9M475.7 302.5L476.0 303.6L476.2 304.7L476.5 305.7L477.2 306.6L477.6 307.6L477.6 308.7M452.3 282.4L453.3 282.8L454.3 283.3L455.0 284.1L456.0 284.6L456.9 285.3L457.6 286.1L457.9 287.2M387.0 310.1L387.4 311.2L388.0 312.1L389.0 312.7L389.5 313.6L390.1 314.6L390.6 315.5L391.1 316.5M493.6 301.1L492.5 301.2L491.5 301.6L490.4 302.1L489.8 302.9L489.4 304.0L489.1 305.0M482.0 273.8L482.3 274.9L482.5 276.0L482.3 277.1L482.4 278.2L482.6 279.2L482.5 280.3M402.9 260.7L403.6 261.5L404.4 262.3L405.1 263.1L406.0 263.8L407.0 264.2M356.9 300.8L357.9 301.4L358.6 302.3L359.5 302.8L360.5 303.2L361.6 303.7L362.7 303.5M388.8 274.3L389.3 275.3L389.5 276.4L390.0 277.3L390.5 278.3L390.7 279.4M393.5 273.4L394.6 273.6L395.7 273.5L396.6 272.9L397.6 272.4L398.4 271.7L399.3 271.0L400.1 270.3M358.8 317.0L359.1 318.0L359.7 319.0L360.0 320.0M414.9 316.0L415.9 316.4L417.0 316.6L418.1 316.5L419.2 316.7L420.2 316.5L421.2 315.9M457.8 288.8L458.8 289.1L459.9 289.3L461.0 289.2M433.0 283.6L433.4 284.6L433.6 285.7L434.1 286.7L434.4 287.7M475.4 289.1L476.0 290.0L476.3 291.1L476.6 292.1M461.1 268.8L461.7 269.7L462.7 270.3L463.7 270.8L464.4 271.6L464.9 272.6L465.7 273.2M359.0 295.4L359.9 296.0L360.8 296.7L361.3 297.7M362.4 302.5L363.1 303.3L363.6 304.3L364.4 305.0L364.9 306.0L365.0 307.1L364.6 308.1M469.7 307.7L470.4 308.6L471.2 309.3L471.9 310.2L472.2 311.2L472.5 312.3L472.5 313.4L472.4 314.5M440.7 262.2L441.4 263.1L442.1 263.9L442.7 264.9L442.8 266.0M484.3 313.2L485.2 313.8L486.0 314.6L486.4 315.6L486.4 316.7L486.5 317.8M361.8 274.8L361.9 275.9L362.1 277.0L362.5 278.0L363.2 278.9L363.7 279.8L364.4 280.7M405.5 278.6L405.6 279.7L405.5 280.8L405.1 281.8L404.7 282.9L404.4 283.9M397.0 274.5L398.1 274.4L399.2 274.4L400.3 274.6L401.4 274.6L402.5 274.7M480.5 288.9L480.2 289.9L479.6 290.8L478.8 291.6M413.9 304.6L414.3 305.6L414.9 306.5L415.8 307.2L416.3 308.2L416.4 309.3L416.8 310.3M412.6 264.7L413.7 264.6L414.7 264.4L415.8 264.4L416.9 264.4L417.9 264.0M360.1 282.3L360.6 283.3L361.2 284.1L361.8 285.1L362.6 285.9L363.1 286.8L364.0 287.5M431.1 279.9L431.0 281.0L430.4 282.0L430.3 283.1L430.0 284.1M471.0 307.0L471.1 308.1L471.3 309.1L471.8 310.1L472.0 311.2L472.1 312.3L472.2 313.4M411.7 271.3L412.7 271.7L413.6 272.3L414.4 273.1L415.1 273.9M352.4 290.1L352.3 291.2L352.4 292.3L353.0 293.2M369.1 275.1L369.1 276.2L369.5 277.2L370.0 278.2L370.4 279.2L370.9 280.2L371.6 281.0L371.8 282.1M422.2 284.3L422.0 285.4L421.9 286.5L421.7 287.6M381.8 311.8L381.9 312.9L381.4 313.9L381.1 315.0M463.0 259.4L464.0 259.9L465.1 260.0L466.1 259.6M444.2 316.1L444.8 317.1L445.1 318.1M378.6 280.0L378.7 281.1L378.8 282.2L378.8 283.3L378.4 284.3M481.5 305.2L480.8 304.4L479.8 303.9L478.9 303.3M492.5 302.4L491.4 302.5L490.5 303.0L489.5 303.5L488.6 304.1L487.5 304.6L486.5 304.7M349.7 293.1L350.4 293.9L350.9 294.9L351.8 295.5L352.9 295.8M459.6 267.2L460.2 266.3L460.5 265.2L460.4 264.1L460.4 263.1M357.5 303.2L358.1 304.2L359.0 304.8L359.8 305.5L360.8 306.0L361.8 306.3L362.9 306.2M471.7 259.8L472.8 260.0L473.9 260.2L474.8 260.8L475.5 261.6L475.9 262.6L476.0 263.7M482.0 315.7L480.9 315.5L479.8 315.5L478.8 315.2M489.6 300.6L489.8 301.7L490.4 302.6L491.1 303.4L492.0 304.1L492.7 305.0L493.4 305.8M399.9 278.8L400.8 279.3L401.9 279.5L403.0 279.8M350.1 264.2L350.0 265.3L350.3 266.3L351.0 267.2L351.7 268.0L352.7 268.5L353.7 268.9M383.7 279.0L384.6 279.5L385.7 279.8L386.7 280.3M383.8 268.6L384.8 269.0L385.9 269.0L386.9 268.7L388.0 268.8L389.1 269.0M359.8 286.1L360.8 286.4L361.8 286.9L362.8 287.4L363.9 287.7L364.9 288.0M381.9 295.1L382.9 295.6L383.6 296.4L384.5 297.1M470.7 276.9L471.6 277.5L472.3 278.3L473.4 278.7M428.4 282.0L428.7 283.0L429.4 283.9L430.3 284.5L431.2 285.2L432.0 285.9M357.3 272.5L357.6 273.6L357.6 274.7L357.3 275.7L357.2 276.8M381.3 267.3L382.3 267.8L383.3 268.2L384.2 268.9L384.6 269.9L384.6 271.0L385.1 272.0M374.4 266.6L375.3 265.9L376.3 265.6L377.4 265.6M487.7 274.0L488.3 273.0L488.8 272.1L489.6 271.3M489.8 291.6L488.7 291.9L487.7 292.4L486.7 292.7L485.7 293.1M460.2 265.9L461.3 266.1L462.2 266.7L463.3 266.9L464.4 267.1M351.6 299.9L352.2 300.8L353.2 301.3L354.0 302.0L355.0 302.5M378.6 273.4L379.6 273.7L380.7 273.9L381.8 273.7L382.9 273.9L384.0 274.2M416.9 308.5L417.9 307.9L418.9 307.5L419.9 307.2L420.8 306.5L421.4 305.6L422.1 304.7L422.4 303.7M361.4 282.4L361.7 283.5L361.8 284.6L362.4 285.5M446.2 290.9L446.9 291.7L447.7 292.4L448.7 292.9L449.7 293.4L450.6 294.0L451.3 294.9L452.1 295.7M415.4 292.2L416.5 292.4L417.5 292.8L418.3 293.6M474.8 289.8L475.9 289.9L477.0 290.1L477.9 290.6L478.8 291.2M463.2 273.8L464.3 273.9L465.2 274.5L466.2 275.0M467.7 274.5L468.8 274.9L469.8 275.1L470.7 275.8L471.8 275.9L472.8 276.3M370.8 277.0L371.7 277.7L372.7 278.1L373.7 278.5L374.8 278.7L375.7 279.3L376.8 279.7M471.9 312.5L472.3 313.5L472.2 314.6L471.6 315.6L471.1 316.5M464.5 272.1L465.2 272.9L466.0 273.7L467.0 274.1M441.8 277.3L442.9 277.6L443.7 278.3L444.4 279.2L445.2 279.9L445.7 280.9L446.1 281.9L446.9 282.7M469.2 290.1L469.9 291.0L470.9 291.5L471.6 292.4L472.5 293.0L473.5 293.4L474.5 293.8M444.5 311.5L445.5 312.1L446.4 312.6L447.3 313.3L448.2 314.0L449.2 314.2L450.3 314.5M463.4 280.1L464.3 280.7L465.2 281.4L466.3 281.6L467.4 281.7M445.9 266.9L446.3 267.9L446.6 269.0L446.6 270.1L447.0 271.1L446.8 272.2L446.7 273.3M474.9 280.4L474.8 281.5L474.4 282.5L473.7 283.4M382.7 309.0L382.6 310.1L382.1 311.0L381.9 312.1L381.7 313.2M457.6 302.1L458.0 303.2L458.8 303.9L459.2 305.0L459.7 306.0L460.5 306.7L461.5 307.0M450.7 318.0L451.8 318.3M442.6 286.8L442.9 287.9L443.7 288.7L444.2 289.7L444.7 290.6L445.2 291.6L445.5 292.7L445.6 293.8M438.9 267.7L439.6 268.5L440.7 268.9L441.7 269.2M463.8 278.2L464.8 278.6L465.9 278.7L467.0 279.0L468.0 279.3L468.9 280.0L470.0 280.2M455.8 266.7L456.8 267.3L457.8 267.4L458.9 267.3L460.0 267.4L461.1 267.8M352.2 301.9L352.8 302.8L353.8 303.4L354.8 303.7L355.9 304.0M489.6 280.4L490.6 280.0L491.6 279.6L492.6 279.1L493.6 278.6L494.3 277.7M373.0 313.4L373.5 314.3L373.9 315.3L373.9 316.4M418.5 294.0L419.2 294.9L419.3 295.9L419.8 296.9L420.1 298.0L420.2 299.1L420.9 300.0M360.9 307.0L361.3 308.1L361.5 309.1L361.4 310.2L361.5 311.3L361.2 312.4L361.1 313.5L361.5 314.5M426.3 311.0L425.5 311.7L424.7 312.5L424.0 313.3L423.4 314.3L423.3 315.4L423.3 316.5M396.9 293.8L397.4 294.8L398.3 295.5L399.3 296.0L400.2 296.6L401.1 297.2M448.4 280.5L448.1 281.5L447.4 282.4L446.6 283.1L445.9 284.0M445.1 304.7L444.1 305.2L443.0 305.5L441.9 305.3L441.1 304.7M356.1 284.4L356.1 285.5L356.1 286.6L356.2 287.7L356.0 288.8L355.9 289.9L356.1 291.0L356.2 292.1M489.1 283.1L488.9 282.0L488.8 280.9L488.7 279.9M478.4 289.9L479.3 290.6L480.0 291.4L480.3 292.4L480.1 293.5L479.4 294.4L478.6 295.1M372.4 303.0L373.5 303.1L374.5 302.9L375.4 302.3L376.1 301.4L376.8 300.6M372.2 289.2L373.3 289.5L374.3 289.9L375.4 290.2L376.3 290.7L377.1 291.5L378.1 292.0L379.2 292.1M492.2 272.8L493.3 272.7L494.4 272.4M484.1 264.6L483.0 264.4L481.9 264.2L481.0 263.5L480.3 262.7M408.2 291.2L409.1 291.8L409.9 292.5L410.9 293.0L412.0 293.3M411.5 267.7L412.0 268.6L412.9 269.3L413.9 269.8M355.1 279.9L355.7 280.9L356.5 281.7L356.8 282.7L356.9 283.8L356.6 284.8M489.6 297.9L490.6 297.6L491.6 297.1L492.4 296.3L493.3 295.7L494.0 294.9L494.5 293.9M438.8 298.9L439.3 299.9L440.0 300.7L440.7 301.6L441.6 302.2L442.3 303.1L442.8 304.1M424.0 273.4L424.6 274.4L425.1 275.4L425.8 276.2L426.2 277.2L427.0 278.0L428.0 278.5L429.0 278.8M488.5 290.5L488.3 289.5L487.8 288.5L487.1 287.6L486.2 287.0L485.4 286.2M366.3 314.0L366.9 314.9L367.0 316.0L366.6 317.0L365.7 317.7L364.9 318.5L364.4 319.4M455.7 265.1L456.4 265.9L457.3 266.5L458.4 266.6M437.6 276.2L437.8 277.3L437.6 278.4L437.7 279.5L437.8 280.6M420.6 281.1L421.2 282.0L421.9 282.8L422.5 283.7L423.1 284.7L423.8 285.5L424.8 285.9M442.6 301.0L443.2 301.9L443.9 302.8L444.4 303.7L444.6 304.8L444.7 305.9M372.8 261.7L373.7 262.4L374.2 263.3L374.2 264.4L373.9 265.5L373.9 266.6L373.6 267.6L373.6 268.7M378.7 317.6L379.3 318.5L380.1 319.3M455.2 272.1L454.7 273.1L454.1 274.0L453.2 274.7L452.4 275.4L451.6 276.1L450.8 276.9L449.9 277.5M459.8 284.4L459.6 285.4L459.6 286.5L459.4 287.6L459.4 288.7M416.7 309.7L417.8 309.7L418.8 309.1L419.7 308.6L420.7 308.0L421.3 307.1L421.8 306.1M363.4 318.8L363.4 319.9M363.8 285.0L363.7 286.1L363.5 287.2L363.2 288.2L363.0 289.3L362.8 290.4L363.1 291.4L363.2 292.5M378.8 273.9L379.5 274.7L380.4 275.4L381.3 276.1L382.2 276.6M412.9 285.1L412.8 286.2L412.8 287.3L413.0 288.4L413.4 289.4L413.4 290.5L413.5 291.6L413.4 292.7M415.9 293.6L416.9 294.2L417.9 294.6L418.7 295.3M350.9 296.9L350.5 297.9L350.0 298.9L350.0 300.0L350.2 301.1M484.8 259.6L484.8 258.5M442.7 309.6L442.9 310.7L443.1 311.8L442.9 312.9L442.6 313.9L442.1 314.9L441.9 316.0M422.4 308.7L423.2 309.4L424.3 309.7L425.4 309.9L426.4 310.3L427.2 311.0L428.1 311.8M394.9 309.6L395.8 310.3L396.3 311.3L397.0 312.1L397.3 313.2M438.4 270.0L439.4 269.8L440.5 269.9L441.6 269.6M425.7 284.0L425.6 285.1L425.8 286.2L425.7 287.3L425.9 288.4M376.2 316.9L375.8 317.8L374.9 318.5L374.0 319.1L372.9 319.5L372.0 320.1M485.1 309.7L486.1 309.3L487.1 308.8L488.1 308.2L489.0 307.7L490.1 307.7M375.7 291.8L376.2 292.8L376.8 293.7L377.0 294.8L377.2 295.9L377.7 296.9L378.2 297.8L378.2 298.9M492.5 313.0L493.5 313.3L494.5 313.8M491.6 306.7L491.2 305.7L491.1 304.6L491.5 303.6L491.8 302.6L492.0 301.5M402.8 264.3L403.7 264.9L404.3 265.9L404.6 267.0L404.9 268.0L405.3 269.0M395.1 264.8L395.3 265.9L395.9 266.8L396.2 267.9L396.4 268.9L396.3 270.0L396.6 271.1L397.1 272.1M378.4 278.8L379.3 279.4L379.9 280.3L380.2 281.4M460.2 310.5L461.0 311.3L461.9 311.9L462.5 312.8L462.8 313.9L462.6 315.0L462.7 316.1M403.9 276.4L403.7 277.4L403.6 278.5L403.5 279.6L403.0 280.6L402.4 281.5L401.5 282.1L400.5 282.6M353.2 286.5L354.3 286.6L355.4 286.7L356.5 287.0L357.6 287.2M387.1 303.4L387.8 304.2L388.4 305.2L388.4 306.3L388.1 307.4M369.6 307.9L370.1 308.9L370.8 309.8L371.6 310.5L372.1 311.5L372.9 312.2L373.7 313.0M484.6 259.2L485.0 260.2L485.7 261.0L486.1 262.1L486.9 262.8L487.5 263.7L487.8 264.8M369.8 308.9L370.0 310.0L370.4 310.9L371.3 311.6L371.9 312.5M389.9 303.8L390.9 304.4L391.9 304.8L393.0 305.0L393.9 305.5M364.0 289.1L364.5 290.1L365.3 290.8L366.3 291.1L367.2 291.8M451.9 307.5L452.8 308.0L453.6 308.8L454.4 309.5L455.0 310.4L455.9 311.1M354.0 303.7L355.0 303.9L355.9 304.6L356.9 305.1L357.9 305.5L359.0 305.6M459.3 293.5L460.0 294.3L460.4 295.4L460.7 296.4L460.8 297.5L460.7 298.6L460.5 299.7M445.5 305.4L445.5 306.5L445.4 307.6L445.0 308.6L444.7 309.6L444.5 310.7L444.6 311.8M455.1 265.2L455.9 266.0L456.6 266.9L457.3 267.7M415.0 313.3L416.0 313.7L416.9 314.3L417.5 315.3L417.8 316.3L418.4 317.2L419.3 318.0L419.9 318.9M366.3 269.1L367.4 268.7L368.5 268.8L369.6 268.9L370.7 268.8L371.8 268.7M355.2 284.1L356.1 284.7L357.1 285.0L358.2 285.1L359.2 285.5M363.3 315.4L364.4 315.5L365.4 315.8L366.5 315.9L367.6 316.0M459.9 278.9L460.2 279.9L460.2 281.0L460.0 282.1L460.0 283.2M355.0 266.5L355.5 267.4L356.3 268.2L357.3 268.7L358.0 269.5M433.5 266.1L434.5 265.7L435.6 265.5L436.7 265.2M461.7 283.0L462.2 284.1L462.9 284.8L464.0 285.2L464.7 286.0L465.6 286.7L466.6 287.0M426.6 269.4L427.6 269.5L428.7 269.1L429.6 268.5L430.4 267.8L430.9 266.8L431.4 265.8L431.3 264.7M398.9 309.1L399.9 309.6L401.0 309.7L402.1 309.4L403.0 308.8L404.0 308.4M443.0 306.3L444.0 306.6L445.1 307.0L446.1 307.4M475.7 316.2L475.8 317.3M480.7 272.6L480.0 271.8L479.4 270.8L479.1 269.8L478.8 268.7L478.4 267.7L477.7 266.9M474.2 311.2L473.8 312.2L473.0 313.0L472.3 313.8L471.8 314.8L471.1 315.6L470.5 316.5M422.0 302.5L422.0 303.6L422.0 304.7L422.1 305.8L422.3 306.9L422.2 308.0L422.4 309.1M447.9 281.6L448.1 282.7L448.0 283.8L447.9 284.9L447.6 286.0L447.8 287.1M491.8 305.7L492.0 306.8L491.8 307.9L491.9 309.0L492.5 309.9L493.3 310.7L494.0 311.5M427.9 308.0L428.9 307.5L430.0 307.4L431.0 306.9L432.0 306.5L433.0 306.0M429.3 303.1L428.9 304.1L429.0 305.2L428.8 306.3L429.1 307.3L429.6 308.3L430.4 309.1L431.1 309.9M367.7 276.2L367.8 277.3L368.3 278.3L368.4 279.4M429.0 292.2L430.1 292.3L431.1 292.4L432.2 292.6M488.8 260.4L489.0 259.3L489.6 258.4M427.1 266.3L428.2 266.3L429.2 265.9L430.3 265.6L431.4 265.6M449.4 315.7L449.8 316.7L449.7 317.8M370.6 310.8L371.4 311.6L372.1 312.4L373.1 313.0L373.6 314.0L373.9 315.0L373.9 316.1L374.2 317.2M419.6 307.5L420.7 307.5L421.8 307.6L422.8 308.1L423.8 308.5L424.5 309.4L425.5 309.8L426.2 310.6M420.0 310.7L420.2 311.8L420.5 312.8L420.4 313.9L420.4 315.0M360.3 314.4L360.9 315.3L361.5 316.2L362.0 317.2L362.4 318.2L362.9 319.2M383.8 279.2L384.4 280.1L385.3 280.7L386.2 281.4L387.2 281.8L388.1 282.5L389.0 283.1M392.5 303.6L393.4 304.1L394.2 304.9L395.0 305.7L396.0 306.1L396.8 306.8L397.7 307.5M422.5 259.7L423.5 260.1L424.6 260.3L425.7 260.2L426.8 260.3L427.9 260.6L429.0 260.6M484.6 279.1L485.3 278.2L486.2 277.5L487.0 276.8L487.9 276.2L488.9 275.8L489.8 275.2M352.6 291.3L353.6 291.8L354.6 292.1L355.4 292.9L356.4 293.4L357.5 293.6L358.5 294.0M428.0 265.9L428.5 266.9L428.7 268.0L428.5 269.1L428.6 270.1L429.2 271.1L429.5 272.1M433.8 265.0L434.9 264.8L435.9 264.6L436.9 264.1L437.8 263.4L438.8 263.0L439.7 262.3M375.7 264.3L376.8 264.3L377.9 264.7L378.9 265.2L379.9 265.5L381.0 265.5L382.1 265.5M429.7 278.4L430.5 279.2L431.1 280.1L431.2 281.2L431.4 282.2M418.1 304.2L419.0 303.6L419.7 302.7L419.8 301.6L419.9 300.5L419.4 299.5L419.0 298.5M378.3 311.1L379.4 310.8L380.3 310.2L381.3 309.7L382.1 309.0L383.2 308.6L384.1 308.0M485.5 317.3L485.0 316.3L484.7 315.2L483.9 314.5L483.3 313.6L483.1 312.5L482.5 311.6L482.3 310.5M358.8 318.6L358.5 319.7M493.7 282.3L494.3 281.4M392.8 291.5L393.9 291.2L395.0 291.0L396.1 291.2L397.2 291.4L398.2 291.7L399.1 292.3L400.0 293.0M382.8 313.8L383.5 314.7L384.5 315.2L385.4 315.8L386.3 316.4L387.4 316.6L388.5 316.6M446.7 297.0L446.9 298.0L447.2 299.1L447.3 300.2L447.7 301.2L448.0 302.3L447.9 303.4L448.1 304.5M472.8 304.7L473.5 305.4L474.5 305.9L475.5 306.3L476.6 306.7M395.3 299.0L395.7 300.0L395.7 301.1L396.1 302.1L396.4 303.2M480.7 284.7L479.7 284.9L478.6 285.2L477.5 285.3M465.0 274.4L466.0 273.9L466.7 273.1L467.4 272.2L468.1 271.4L469.0 270.7L469.5 269.7M406.7 302.8L407.5 303.4L408.6 303.7L409.7 303.7L410.7 304.1L411.8 304.2L412.9 304.5L413.8 305.2M438.3 314.7L439.4 314.8L440.5 314.4L441.3 313.7L442.3 313.3L443.3 312.7L444.1 311.9M460.4 300.8L461.1 301.7L462.0 302.3L462.5 303.3L463.4 303.9M356.2 303.9L357.0 304.6L358.0 305.2L358.5 306.2L359.0 307.2L359.7 308.0L360.4 308.9M415.7 306.7L416.8 306.6L417.8 306.3L418.6 305.5M488.2 263.4L489.3 263.5L490.3 264.0L491.1 264.8L492.1 265.2L493.2 265.1L494.3 265.2M461.5 269.9L461.1 271.0L460.3 271.8L459.6 272.6M375.4 294.0L375.5 292.9L375.1 291.9L374.7 290.8L374.8 289.7L375.1 288.7M365.6 308.7L366.5 309.4L367.4 310.0L368.3 310.7L369.4 310.9L370.5 310.9L371.5 310.4M480.6 298.5L481.4 299.3L481.9 300.3L482.3 301.3L482.6 302.4M387.8 309.7L388.8 309.4L389.8 308.9L390.8 308.4L391.4 307.5M448.4 288.4L449.3 289.0L450.2 289.6L451.3 289.8L452.4 289.5L453.2 288.8L453.8 287.9L454.4 287.0M487.8 305.3L486.8 305.8L485.7 305.9L484.6 305.9L483.5 305.7L482.4 305.7M449.4 271.2L450.2 272.0L451.0 272.8L451.6 273.7L452.3 274.5L453.0 275.4L453.9 276.0M357.6 316.0L358.4 316.7L359.0 317.6L359.1 318.7L359.2 319.8M395.0 291.1L395.7 291.9L396.6 292.6L397.6 293.1L398.6 293.6L399.6 294.0L400.6 294.5M384.6 269.3L384.5 270.4L384.8 271.5L385.5 272.3L386.2 273.2L386.6 274.2L386.6 275.3L386.7 276.4M352.0 311.5L351.1 312.2L350.1 312.4L349.0 312.1M423.6 277.8L423.2 278.9L423.3 280.0L423.1 281.1L423.0 282.1L422.9 283.2L422.6 284.3M355.5 316.3L355.6 317.4L356.2 318.3L356.6 319.3L357.0 320.3M374.6 283.4L375.6 283.8L376.3 284.7L377.2 285.3L377.8 286.2L378.7 286.9L379.7 287.2M478.6 309.2L479.1 310.2L479.7 311.1L480.0 312.1L479.7 313.2L479.0 314.1L478.4 315.0L477.6 315.7M471.1 263.5L471.9 264.3L472.9 264.7L473.7 265.4L474.5 266.2L475.3 267.0L476.0 267.8L476.6 268.7M488.0 270.8L489.1 271.1L490.0 271.8L491.0 272.1L492.1 272.0M361.4 304.1L362.1 304.9L362.9 305.7L363.8 306.3L364.7 306.9M454.7 302.8L455.5 303.6L456.2 304.5L456.6 305.5L457.3 306.3L458.3 306.7M357.2 270.0L358.1 270.7L359.1 271.0L360.2 271.2L361.3 271.3M420.5 317.8L420.6 318.9M484.8 280.4L484.0 281.3L483.2 282.0L482.6 283.0L481.9 283.8L481.2 284.6M349.9 289.9L350.9 289.5L352.0 289.5L353.1 289.7L354.2 289.9L355.3 289.7L356.4 289.5L357.5 289.4M465.7 273.8L464.8 274.5L463.8 275.0L462.9 275.6M389.0 262.8L390.1 263.0L391.2 263.1L392.1 263.7L393.2 264.0L394.2 264.3L395.3 264.1L396.3 263.6M447.7 264.8L448.4 265.7L448.7 266.8L449.0 267.8M368.4 313.1L369.5 313.0L370.6 313.2L371.5 313.8L372.3 314.5M356.6 291.2L357.5 291.8L358.5 292.2L359.6 292.5L360.7 292.6L361.8 292.8M418.4 274.7L419.5 274.7L420.5 275.1L421.4 275.7L422.4 276.2L423.4 276.6L424.3 277.2M427.2 259.7L428.3 259.9L429.4 259.9L430.4 260.3L431.2 261.1M492.9 276.8L494.0 277.0M470.9 293.0L471.6 293.8L472.6 294.2L473.7 294.3L474.7 293.9L475.8 293.8L476.9 294.1L478.0 294.0M466.5 301.6L467.4 302.2L468.4 302.6L469.5 303.1L470.5 303.4M475.2 302.6L475.9 303.4L476.5 304.4L476.8 305.5L477.5 306.3M440.2 317.4L440.9 318.3M382.3 263.0L381.9 264.1L381.2 264.9L380.5 265.8L379.7 266.5L378.7 266.9L377.8 267.6M374.2 315.0L375.1 315.7L376.1 316.1L377.2 316.3M363.3 306.9L364.4 307.1L365.3 307.8L366.0 308.6L367.0 309.0L368.0 309.5L369.1 309.5L370.2 309.8M386.3 305.4L387.3 305.1L388.2 304.3L389.1 303.7M361.4 271.4L361.4 272.5L360.9 273.5L360.2 274.4L359.5 275.2L358.8 276.1L358.6 277.1M407.7 313.2L407.3 314.2L406.9 315.2L406.2 316.1L405.9 317.2M439.6 291.1L440.3 292.0L440.7 293.0L441.6 293.7M479.3 294.7L479.4 295.8L479.8 296.8L480.6 297.6L481.5 298.1L482.5 298.6L483.4 299.3L483.9 300.3M487.2 284.5L486.3 283.9L485.2 283.7L484.1 284.0M365.0 300.0L365.7 300.8L366.1 301.8L366.2 302.9L366.2 304.0L366.6 305.0L367.0 306.1M352.9 282.4L353.4 283.3L354.0 284.2L354.2 285.3L354.1 286.4M455.0 273.1L456.0 273.5L457.1 273.5L458.1 273.1L459.1 272.6M486.7 296.6L487.0 297.7L487.7 298.6L488.0 299.6L488.4 300.7L488.4 301.8L488.3 302.8L487.8 303.8M487.0 274.2L487.4 273.2L488.2 272.5L489.0 271.7L490.0 271.3M425.3 292.9L425.8 293.9L426.1 295.0L426.4 296.0L426.9 297.0L427.8 297.6L428.9 298.0M424.9 278.8L425.7 279.6L426.6 280.1L427.7 280.3L428.8 280.3L429.9 280.2M493.6 266.6L493.6 267.7L493.2 268.7L493.4 269.8L493.8 270.8L494.4 271.8M409.8 310.6L410.8 310.0L411.6 309.3L412.0 308.2L412.8 307.5L413.8 307.0L414.7 306.4L415.8 306.3M379.0 273.8L378.9 274.9L378.4 275.9L378.3 277.0L378.6 278.0L378.5 279.1L377.9 280.0L377.8 281.1M364.4 296.3L364.3 297.4L363.9 298.4L363.3 299.4L362.4 299.9M398.5 291.3L399.4 291.9L400.0 292.8L400.5 293.8M435.4 271.8L435.2 272.9L435.6 273.9L436.3 274.8L437.0 275.5L437.9 276.2L438.9 276.8M452.1 271.4L452.1 272.4L451.5 273.4L450.7 274.2L450.1 275.1M482.5 307.1L483.4 306.4L484.0 305.5L484.8 304.7L485.4 303.8L486.2 303.0L486.6 302.0M394.0 281.9L394.9 282.6L395.6 283.4L396.7 283.8M438.9 287.4L439.5 288.3L440.3 289.2L440.5 290.2M438.7 259.4L439.7 259.8L440.8 260.1L441.8 259.8L442.9 259.7L443.9 260.2M402.1 278.4L401.8 279.5L401.9 280.6L401.8 281.7L401.5 282.7L401.3 283.8M370.8 310.1L371.9 309.8L372.9 309.5L374.0 309.1L375.1 309.0M469.5 305.2L470.6 305.3L471.7 305.5L472.8 305.6L473.9 305.9L474.8 306.5L475.8 306.9M403.5 299.8L404.4 300.3L405.3 301.0L405.9 301.9L406.8 302.5L407.4 303.4L407.6 304.5M371.6 311.6L371.6 312.7L371.5 313.8L371.6 314.9L371.7 316.0L371.8 317.1L371.5 318.2L371.0 319.1M480.7 269.0L481.0 267.9L481.5 267.0L482.2 266.1L482.7 265.1L483.3 264.2L483.6 263.2M471.6 294.3L472.7 294.7L473.4 295.5L474.2 296.3L474.8 297.2M408.7 310.6L407.8 311.1L406.8 311.7L405.7 311.7L404.7 312.2L403.6 312.3L402.6 312.0L401.7 311.4M396.1 274.3L396.6 275.3L397.2 276.2L398.2 276.7L398.9 277.6M374.5 309.1L374.1 310.2L374.0 311.3L374.2 312.3L374.8 313.2M393.0 277.7L392.1 278.3L391.5 279.3L391.5 280.4L391.6 281.5M483.2 300.8L483.6 301.9L483.5 302.9L483.0 303.9L482.2 304.7L481.8 305.7L481.0 306.5M414.7 277.6L414.9 278.6L415.2 279.7L415.5 280.8L415.4 281.9L415.6 283.0L415.9 284.0L416.0 285.1M399.0 284.9L399.6 285.8L400.0 286.8L400.2 287.9L400.7 288.8L401.6 289.5M384.3 296.6L385.0 297.5L385.6 298.4L385.8 299.5L386.1 300.5M406.2 270.1L406.5 271.2L407.1 272.1L407.7 273.0L408.3 274.0L408.4 275.0L408.5 276.1M420.9 275.6L421.6 276.5L421.8 277.6L422.2 278.6M444.3 285.8L445.0 286.6L445.7 287.4L446.7 287.9M350.8 290.8L351.8 291.2L352.6 291.9L353.0 292.9M361.2 290.1L362.0 290.9L362.3 292.0L362.9 292.9L363.8 293.5M359.9 306.9L361.0 306.8L362.1 306.6L363.2 306.7L364.2 306.4L365.2 305.9L366.1 305.3L366.6 304.3M429.5 265.2L430.6 265.1L431.6 264.7L432.4 263.9L432.8 262.9L433.2 261.9L433.2 260.8M455.4 284.6L455.2 285.6L454.6 286.6L454.0 287.4L453.5 288.4M355.7 318.2L356.3 319.1L356.6 320.2M410.3 313.3L410.7 314.3L411.3 315.2L412.1 316.0L413.1 316.4L414.2 316.5L415.3 316.7M434.1 265.5L434.8 266.4L435.5 267.2L436.3 268.0M416.4 311.6L417.2 312.3L418.0 313.0L419.1 313.4L420.0 313.9L421.1 314.2L422.0 314.8L422.7 315.6M355.9 293.3L356.9 293.7L357.9 294.1L358.8 294.8L359.6 295.5L360.0 296.6L360.5 297.6L360.5 298.7M350.5 299.8L351.0 300.7L351.4 301.8L351.8 302.8L352.0 303.9L351.8 304.9L352.0 306.0L352.7 306.9M430.1 280.6L429.6 281.6L429.5 282.7L429.6 283.8L430.0 284.8M487.6 270.0L488.4 269.3L489.0 268.3L489.2 267.3L489.0 266.2M468.7 303.6L468.9 304.7L469.2 305.7L469.9 306.6L470.8 307.3L471.4 308.1L471.9 309.1M409.0 262.1L409.5 263.0L410.1 263.9L411.1 264.5L412.2 264.8L413.1 265.3L414.1 265.8M477.6 306.2L478.6 306.6L479.7 306.8L480.7 307.2L481.6 307.9L482.6 308.2M427.6 274.7L427.1 275.7L427.0 276.8L427.0 277.9L427.3 278.9L428.0 279.8M440.2 276.1L439.6 277.0L439.4 278.1L439.5 279.2L439.6 280.3L439.6 281.4L439.9 282.5M362.6 276.3L363.6 276.8L364.7 277.0L365.6 277.5M391.0 297.1L390.8 298.2L390.4 299.2L389.6 300.0L389.1 301.0L388.5 301.8L387.9 302.8L387.1 303.6M462.3 285.2L462.8 286.2L463.6 287.0L464.2 287.9L464.5 288.9M428.1 290.0L428.6 291.0L429.2 291.8L430.0 292.7L430.3 293.7L431.0 294.6L431.7 295.4M457.9 277.6L458.6 278.5L459.2 279.4L459.5 280.5L459.1 281.5M443.0 278.8L443.8 279.5L444.3 280.5L444.7 281.6L444.8 282.7L444.9 283.7M433.2 284.1L433.5 285.1L433.8 286.2L433.9 287.3L433.7 288.4L433.2 289.3L432.4 290.1L431.8 291.1M482.7 299.5L482.8 300.6L483.1 301.6L483.1 302.7L482.9 303.8M376.7 273.1L377.8 273.2L378.9 273.6L379.9 273.8L381.0 273.7M427.5 266.7L428.5 266.9L429.5 267.5L430.5 267.9L431.6 267.7L432.6 267.2M472.5 283.5L473.6 283.8L474.7 283.9L475.7 283.7M412.3 263.8L412.2 264.9L412.4 266.0L412.8 267.0L413.7 267.7L414.4 268.6M474.4 269.1L475.4 269.6L476.4 270.1L477.4 270.6L478.4 270.9L479.5 270.9L480.6 271.0L481.7 270.8M475.5 284.0L476.5 284.5L477.4 285.1L478.1 285.9L479.1 286.4M433.2 276.9L434.3 276.9L435.3 277.1L436.2 277.9L437.1 278.5L437.8 279.3L438.2 280.3L438.7 281.3M391.3 278.0L391.4 279.1L391.1 280.1L390.6 281.2M428.8 284.9L429.8 285.4L430.9 285.4L431.8 285.9L432.9 286.3M490.1 279.6L489.6 278.7L489.2 277.6L489.0 276.6L488.6 275.5L487.8 274.8L487.1 274.0L486.2 273.3M431.1 266.4L432.1 266.7L433.2 266.9L434.3 267.0L435.4 266.8M404.0 269.1L404.6 270.0L405.4 270.9L405.8 271.8L406.2 272.9M485.5 280.2L484.6 279.6L483.5 279.2L482.7 278.4L481.8 277.9L480.7 277.6L479.6 277.5L478.5 277.3M401.9 265.3L403.0 265.3L404.1 265.6L405.2 265.4L406.2 265.1L407.2 264.5L408.1 264.0L409.2 263.6M417.9 262.3L418.9 262.5L419.9 263.1L421.0 263.2L422.0 263.5L422.8 264.2L423.5 265.1M400.0 317.2L399.8 318.3L400.0 319.4M432.2 314.9L433.2 315.4L434.2 315.7L435.3 315.8L436.4 316.0L437.5 316.0L438.5 315.6M359.5 284.9L360.2 285.7L360.4 286.8L360.1 287.9L360.1 289.0L359.6 289.9L359.1 290.9L358.8 292.0M484.1 314.5L484.2 313.4L483.9 312.4L483.6 311.3L482.8 310.5L482.1 309.7L481.1 309.3L480.1 308.9M409.0 306.8L410.1 306.5L411.0 306.0L412.1 305.9L413.2 305.5M426.3 281.4L427.3 281.9L428.2 282.5L429.3 282.9L430.2 283.4M486.7 276.9L486.1 276.0L485.3 275.3L484.3 274.7L483.7 273.8L483.0 273.0L482.4 272.1L481.7 271.2M352.6 294.4L353.6 294.7L354.7 294.8L355.8 295.1L356.9 295.3L357.8 295.9L358.6 296.6M445.6 287.9L445.0 288.9L444.2 289.6L443.6 290.5L442.7 291.2L441.9 291.9L441.0 292.5M382.5 316.5L383.6 316.8L384.7 316.8L385.7 317.0L386.8 317.4L387.9 317.2L388.9 317.7M434.4 295.5L434.8 296.5L435.4 297.5L435.9 298.4L436.3 299.5L436.7 300.5L437.2 301.5L437.5 302.5M355.2 268.2L356.3 268.3L357.3 267.9L358.4 267.5L359.5 267.6L360.5 268.0L361.4 268.7M445.4 261.5L446.3 262.3L447.2 262.9L448.3 263.1L449.4 263.2L450.4 263.4L451.5 263.4M399.9 317.1L399.4 318.1L398.9 319.1M411.5 315.0L411.6 316.1L411.1 317.1L411.0 318.2L410.6 319.2M424.3 271.5L423.9 272.5L423.9 273.6L423.8 274.7M423.9 265.8L425.0 266.0L426.0 266.6L426.6 267.5L427.6 268.0L428.2 268.9L428.9 269.8M456.5 269.5L457.2 270.3L457.6 271.3L458.0 272.4L457.8 273.5L457.4 274.5L457.1 275.5L456.6 276.5M390.4 277.0L390.5 278.1L390.7 279.2L391.0 280.2L391.0 281.3L390.9 282.4M484.6 259.2L485.3 260.0L485.9 260.9L486.4 261.9L487.1 262.7L487.6 263.7M376.4 312.8L377.5 312.8L378.5 313.2L379.4 313.8L380.3 314.4M443.6 294.2L444.3 295.0L444.8 295.9L445.6 296.8L446.6 297.3L447.6 297.6L448.6 298.0M404.9 283.0L404.2 283.9L403.8 284.9L403.2 285.8L402.7 286.8L402.4 287.9L402.2 288.9M365.0 292.2L365.9 292.8L366.7 293.5L367.3 294.4L368.0 295.3L368.7 296.1L369.7 296.5L370.8 296.7M416.5 273.2L416.0 274.2L415.2 275.0L414.7 275.9M448.7 268.9L449.7 268.6L450.6 267.9L451.6 267.5L452.6 267.2L453.7 266.8M403.7 301.3L404.8 301.1L405.9 301.4L407.0 301.6M349.4 307.5L350.4 307.7L351.3 308.3L352.1 309.1M412.4 284.7L412.5 285.8L412.2 286.9L412.3 288.0L411.9 289.0L411.9 290.1L412.1 291.2L412.1 292.3M356.9 263.3L357.4 264.3L358.1 265.2L358.5 266.2L359.1 267.1L359.9 267.9L360.7 268.6L361.3 269.5M465.4 311.8L465.8 312.8L466.5 313.6L467.3 314.4L468.2 315.0L469.0 315.8L469.6 316.7M367.2 285.7L368.1 286.3L368.9 287.1L369.4 288.0L370.3 288.7L371.3 289.2M395.0 301.7L395.8 302.5L396.7 303.0L397.8 303.4L398.8 303.9L399.9 303.8L401.0 304.0L402.0 303.8M387.7 268.1L387.3 269.1L387.2 270.2L387.1 271.3L386.6 272.3L386.4 273.4L386.4 274.5L386.3 275.6M441.6 299.1L442.1 300.1L442.4 301.1L442.8 302.2L443.3 303.2M369.6 310.8L370.6 311.3L371.6 311.7L372.7 311.7L373.8 311.9L374.8 312.2L375.9 312.3M391.7 269.5L392.8 269.6L393.8 269.2L394.9 269.2M432.6 293.7L432.8 294.7L432.9 295.8L433.4 296.8L433.5 297.9L433.8 299.0M405.0 266.5L404.8 267.6L405.0 268.7L404.9 269.8L404.2 270.7M440.5 263.1L441.0 264.1L441.7 265.0L442.4 265.8L443.2 266.5M486.5 269.9L486.4 271.0L486.4 272.1L486.2 273.2L486.2 274.3M459.4 305.6L460.1 306.4L460.6 307.4L460.8 308.5L460.6 309.6M442.7 313.1L443.8 313.5L444.8 313.4L445.9 313.6M405.0 271.1L406.0 270.5L406.7 269.7L407.2 268.7L407.9 267.8L408.3 266.8M408.7 270.0L409.0 271.0L409.5 272.0L409.8 273.1L410.1 274.1L410.8 275.0L411.5 275.8M432.8 303.3L433.1 304.3L433.3 305.4L433.3 306.5L433.3 307.6M378.7 311.2L379.1 312.2L379.5 313.3L379.4 314.3L379.5 315.4L379.3 316.5L378.9 317.5M458.6 262.2L459.4 262.9L460.0 263.8L460.8 264.6L461.5 265.4L462.5 266.0M444.6 289.9L445.6 290.3L446.7 290.4L447.7 290.9L448.6 291.5L449.6 292.0L450.7 292.1M377.1 262.3L377.5 263.3L377.9 264.4L378.0 265.5L378.5 266.4L378.5 267.5L378.5 268.6L378.8 269.7M418.7 267.5L419.5 268.3L420.0 269.3L420.7 270.1L421.5 270.9M469.1 266.7L469.5 267.7L469.9 268.7L470.1 269.8L470.3 270.9M362.3 314.2L363.0 315.1L363.8 315.8L364.4 316.7L365.2 317.5L366.1 318.1L366.8 319.0L367.7 319.6M438.5 278.4L438.9 279.4L439.7 280.2L440.5 280.9L441.1 281.8L442.0 282.5L442.8 283.2M431.7 279.5L432.0 280.6L431.7 281.6L431.6 282.7L431.6 283.8L431.5 284.9M468.3 293.7L469.4 293.4L470.4 293.0L471.3 292.3L472.3 291.9L473.3 291.4M363.9 317.6L365.0 317.7L366.1 317.7L367.1 317.3M423.7 282.8L424.7 283.2L425.5 284.0L426.5 284.4L427.3 285.2M491.1 263.2L491.5 264.2L492.2 265.1L493.0 265.8L493.9 266.5M466.9 316.7L468.0 316.7L469.0 316.3L470.0 315.8L471.0 315.5L472.1 315.2M370.4 307.1L371.5 307.0L372.6 306.7L373.6 306.3L374.7 306.1L375.7 305.7M349.7 299.8L349.5 300.9L348.9 301.8M425.0 279.5L425.8 280.2L426.8 280.7L427.9 281.1L429.0 280.9M447.0 292.1L447.6 293.1L448.4 293.8L449.4 294.4L450.3 295.0L451.3 295.3L452.2 295.9M363.4 269.7L364.1 270.5L364.5 271.6L364.9 272.6L365.2 273.7L364.9 274.7L364.4 275.7M450.7 303.5L451.7 304.0L452.7 304.5L453.6 305.1M390.7 300.3L390.8 301.4L390.8 302.5L390.7 303.6L390.4 304.6L390.4 305.7L390.3 306.8M471.7 267.1L472.7 267.5L473.8 267.4L474.9 267.3L475.9 266.9L476.7 266.0L477.4 265.2L478.1 264.4M484.3 310.4L484.3 309.4L484.4 308.3L485.0 307.3L485.2 306.3L485.7 305.3L486.1 304.3L486.1 303.2M409.2 298.8L410.3 298.7L411.4 298.4L412.5 298.5L413.5 298.9L414.6 299.0L415.7 299.0M376.0 283.3L377.0 283.7L377.9 284.3L378.5 285.3L379.1 286.1L379.4 287.2L379.9 288.2M483.2 261.0L484.2 260.6L485.3 260.6L486.4 260.6L487.4 261.0L488.5 261.0M362.3 294.3L363.3 294.7L364.4 294.9L365.5 295.2L366.6 295.0L367.6 295.1L368.7 295.5L369.7 295.8M371.3 278.2L371.4 279.3L371.0 280.3L370.8 281.4L371.0 282.5L370.8 283.5L370.4 284.6M385.8 278.5L386.5 279.3L387.3 280.0L387.9 281.0L388.7 281.8L389.6 282.4M490.0 314.7L490.0 315.8L490.0 316.9L489.8 318.0M424.1 279.3L424.7 280.3L424.7 281.4L424.2 282.4M424.6 264.9L425.1 265.9L425.5 267.0L425.6 268.0L425.5 269.1L425.8 270.2L426.3 271.2M367.8 313.0L368.1 314.0L368.6 315.0L369.0 316.0M469.1 285.1L470.2 285.1L471.3 285.2L472.4 285.1L473.5 284.8L474.6 284.7M469.3 259.8L470.4 260.3L471.4 260.7L472.5 260.6L473.5 260.4M440.3 289.1L440.5 290.2L440.1 291.2L439.3 292.0L438.8 292.9M484.9 306.9L484.9 308.0L484.9 309.1L485.0 310.2L485.5 311.2M365.2 289.7L364.9 290.8L364.9 291.9L365.1 292.9L365.2 294.0L365.7 295.0L366.3 295.9L366.8 296.9M491.5 298.6L490.7 299.2L489.6 299.5L488.5 299.8L487.5 300.1L486.4 300.1L485.4 300.6M477.2 314.8L477.0 315.8L477.0 316.9L476.7 318.0M457.7 286.1L458.3 287.1L458.7 288.1L458.6 289.2L458.1 290.1L457.2 290.8L456.7 291.8L456.6 292.9M480.5 275.3L481.6 275.4L482.7 275.2L483.8 275.2L484.9 275.1M466.0 302.3L466.0 303.4L466.2 304.4L466.3 305.5L466.1 306.6L466.4 307.7L467.2 308.5L467.7 309.4M383.6 306.4L384.1 307.4L385.0 308.0L385.7 308.8L386.6 309.5M385.3 307.2L386.0 308.1L386.8 308.8L387.8 309.1M486.6 263.7L485.9 262.8L485.1 262.2L484.5 261.2L484.4 260.1M449.0 277.7L449.8 278.5L450.2 279.6L450.1 280.7L450.3 281.8L450.3 282.9M449.6 297.3L450.0 298.4L450.3 299.4L450.8 300.4L451.2 301.4L451.8 302.4L452.5 303.2M394.0 283.5L394.3 284.6L394.7 285.6L394.8 286.7L394.4 287.7L393.7 288.6L393.3 289.6M407.3 303.1L408.1 304.0L408.3 305.0L408.2 306.1L407.8 307.1L407.1 308.0L406.8 309.1M452.6 264.1L453.7 264.0L454.8 263.8L455.9 263.4M433.1 277.5L432.2 278.2L431.6 279.0L430.6 279.5L429.7 280.2L428.7 280.5L427.6 280.4L426.6 280.0M406.0 318.1L406.8 318.8L407.9 319.2M379.4 267.1L380.0 268.0L380.9 268.5L381.9 269.1L382.6 269.9L383.2 270.9M470.1 316.0L470.3 317.1L470.9 318.0M456.4 293.3L457.3 293.9L458.2 294.5L459.3 294.8L460.3 295.2L461.4 295.4L462.4 296.0M438.9 263.1L439.8 263.7L440.4 264.6L441.1 265.4L441.7 266.4L442.5 267.1L443.4 267.7L444.5 268.1M443.3 290.1L443.9 291.1L444.4 292.0L445.0 292.9L445.3 294.0L445.9 294.9L446.3 295.9M439.7 288.4L440.8 288.5L441.9 288.2L443.0 288.2M359.8 298.8L360.0 299.9L360.6 300.8L361.0 301.8M421.0 297.5L421.9 296.9L422.7 296.2L423.1 295.1L423.4 294.1M416.5 310.7L416.3 311.8L416.2 312.9L415.5 313.8L415.0 314.7L414.7 315.8L414.8 316.9M432.4 309.3L433.0 310.1L433.3 311.2L433.3 312.3L433.8 313.3L434.5 314.1L435.1 315.0L435.4 316.1M475.2 276.7L474.6 277.6L474.4 278.7L474.7 279.7L475.3 280.6M456.0 299.6L455.9 300.7L455.8 301.8L455.9 302.8L456.4 303.8L456.3 304.9L456.2 306.0M375.2 261.4L375.5 262.4L376.0 263.4L376.2 264.5L376.2 265.6L376.2 266.7L376.1 267.8M396.7 270.1L397.6 270.6L398.7 270.9L399.7 271.4M453.3 280.7L454.3 281.2L455.1 281.9L456.2 282.3M492.9 295.6L494.0 295.7M382.8 282.1L383.0 283.2L383.7 284.1L384.2 285.0L384.5 286.1L385.1 287.0L386.0 287.6M368.5 273.7L367.7 274.5L367.1 275.4L366.6 276.4L365.7 277.0L365.1 277.9M440.8 260.0L441.3 261.0L441.6 262.1L442.2 263.0L442.5 264.0L442.6 265.1M486.5 300.4L485.9 299.5L485.1 298.7L484.5 297.7L483.7 297.1L482.8 296.3M415.5 294.9L416.6 294.8L417.7 295.2L418.5 295.9L419.3 296.6L420.4 297.0L421.3 297.7L422.1 298.3M420.2 264.3L421.1 265.0L422.1 265.4L423.2 265.4M351.2 291.3L351.5 292.3L351.6 293.4L352.0 294.4M469.9 288.1L470.0 289.2L469.9 290.3L469.9 291.4L470.2 292.4L470.1 293.5M383.8 310.7L384.0 311.8L383.9 312.9L384.3 314.0L384.7 315.0L384.9 316.1M438.0 309.6L437.7 310.6L437.6 311.7L437.2 312.7L436.7 313.7M464.2 290.5L464.0 291.6L464.4 292.6L465.0 293.5L465.9 294.2L466.5 295.1L467.3 295.8M438.9 311.4L439.5 312.2L439.8 313.3L439.6 314.4L438.9 315.2M401.3 269.3L402.4 269.1L403.5 268.9L404.6 268.9L405.5 269.4L406.6 269.6L407.7 269.3L408.8 269.5M422.8 284.5L423.1 285.6L423.2 286.7L423.4 287.8L423.5 288.9M398.2 287.5L398.9 288.4L399.5 289.3L400.4 289.8M429.7 296.2L430.0 297.3L430.2 298.4L430.2 299.5L430.4 300.6L430.3 301.6M424.3 306.0L424.1 307.1L423.7 308.1L423.4 309.2L423.2 310.2L422.5 311.1L421.9 312.0L421.2 312.9M395.1 299.6L396.2 299.9L397.3 299.9L398.3 300.2M463.3 269.0L464.3 269.6L465.0 270.4L465.3 271.4L465.8 272.5L465.9 273.5M478.5 298.1L479.5 298.5L480.6 298.8L481.7 298.8L482.8 299.0L483.9 299.2L484.9 299.0L486.0 299.1M400.5 303.2L400.4 304.3L400.5 305.4L400.3 306.4L400.3 307.5L399.9 308.6M381.3 287.2L382.1 287.9L382.6 288.9L383.0 289.9L383.2 291.0M479.4 288.8L480.2 289.5L480.9 290.4L481.8 291.0L482.4 292.0L483.0 292.9L483.3 293.9L483.4 295.0M405.1 304.1L405.9 304.8L406.6 305.6L407.5 306.3L408.4 306.9L409.4 307.4L410.5 307.4M437.6 294.9L438.4 295.7L439.3 296.3L440.1 297.1L441.0 297.7L441.9 298.4L442.9 298.6M492.2 315.7L493.3 315.6L494.4 315.8M484.2 261.2L483.8 260.1L483.0 259.3L482.0 258.9L481.1 258.3M484.5 311.0L483.6 311.7L482.5 311.9L481.5 312.3L480.6 313.0L479.5 313.1M405.0 299.6L404.9 300.7L405.4 301.7L406.0 302.6L406.5 303.5L407.0 304.5M433.4 260.2L434.4 260.8L435.5 260.8L436.5 260.6L437.5 260.1M419.7 308.8L420.5 309.6L421.4 310.3L421.9 311.2L422.5 312.1M445.0 312.7L445.7 313.5L446.7 314.0L447.4 314.9L447.6 315.9L447.8 317.0L448.3 318.0M448.4 262.1L448.3 263.2L447.7 264.1L447.4 265.2L446.7 266.0L446.4 267.0L445.6 267.8L445.0 268.7M353.5 300.7L353.3 301.7L353.0 302.8L352.4 303.8L351.8 304.7L351.1 305.5L350.6 306.5L349.7 307.1M404.8 301.3L405.9 301.3L407.0 301.4L408.1 301.5L409.2 301.5M457.1 306.0L456.9 307.1L457.2 308.1L457.9 309.0M479.4 310.7L480.3 311.4L480.7 312.4L480.6 313.5M439.3 263.6L440.0 264.4L440.9 265.1L441.5 266.1L442.4 266.6L443.4 267.2L444.5 267.2L445.6 267.0M444.5 269.8L445.1 270.7L445.7 271.6L446.5 272.4L447.2 273.3L448.0 274.0L449.1 274.3M399.2 264.0L400.2 264.4L401.1 265.1L401.9 265.8L402.9 266.3M367.7 288.0L368.0 289.1L368.6 290.0L369.4 290.8L370.4 291.3L371.2 291.9L372.1 292.6M385.3 316.5L386.0 317.4L386.9 317.9L387.9 318.4M387.5 295.4L388.3 296.2L388.8 297.1L389.2 298.2L389.6 299.2L389.7 300.3L390.0 301.4M402.3 286.3L403.3 286.8L404.4 286.9L405.5 286.9L406.6 286.7L407.6 286.3M434.5 309.8L434.2 310.9L433.6 311.7L433.0 312.7L432.2 313.4L431.3 314.0L430.2 314.2M450.1 269.5L451.1 270.0L451.8 270.9L452.0 271.9L452.7 272.8L453.5 273.6L454.5 274.1L455.4 274.6M374.5 302.6L375.2 303.4L376.1 304.1L377.1 304.5L378.1 304.8M403.6 301.7L403.3 302.7L403.0 303.8L402.8 304.9L402.5 305.9M362.3 274.5L362.2 275.6L361.9 276.7L361.9 277.8M372.4 263.1L372.3 264.2L372.7 265.2L372.9 266.3L373.0 267.4L373.2 268.5L372.9 269.6M402.0 312.2L401.7 313.3L401.2 314.2L400.6 315.2L399.9 316.0M349.1 315.9L349.1 317.0L349.3 318.1L349.7 319.1M408.2 303.0L409.2 303.3L410.2 303.8L410.9 304.7L411.4 305.7L412.2 306.4L412.7 307.4L413.5 308.1M352.3 291.5L352.8 292.4L353.3 293.4L353.3 294.5M388.2 266.3L389.3 266.3L390.3 266.5L391.4 266.4L392.4 266.9L393.5 267.3L394.5 267.7M374.9 270.4L375.4 271.4L376.0 272.3L376.8 273.1L377.2 274.1L377.5 275.2M388.2 278.3L389.1 279.0L389.8 279.8L390.8 280.3L391.6 281.1L392.4 281.8M363.9 308.4L365.0 308.8L365.8 309.5L366.5 310.3L367.2 311.2L367.5 312.3M389.8 316.1L390.9 316.5L392.0 316.4L393.0 316.0L394.1 315.9L395.1 316.1L396.2 315.7M387.4 266.8L387.7 267.8L388.3 268.8L388.9 269.7L389.7 270.4M387.7 271.6L387.8 272.7L388.1 273.8L388.5 274.8L388.7 275.9M388.5 279.2L388.3 280.3L387.8 281.3L387.0 281.9L386.3 282.8L385.3 283.4M388.7 302.9L389.8 303.1L390.9 303.2L392.0 302.8L393.0 302.6L394.1 302.2L395.1 301.8L396.1 301.3M363.6 288.3L364.0 289.4L364.6 290.2L364.8 291.3M405.4 295.9L406.4 296.5L407.4 296.8L408.5 297.0L409.6 297.0L410.7 296.7L411.5 296.0L412.4 295.4M350.4 294.8L351.0 295.8L351.6 296.7L352.3 297.5L353.1 298.3L353.9 299.1L354.2 300.1L354.2 301.2M412.0 264.5L413.1 264.8L413.9 265.5L414.9 265.9L416.0 265.9L417.1 265.7M403.3 316.9L403.6 317.9L403.9 319.0M371.8 278.8L372.9 278.8L373.9 279.1L375.0 279.3L376.0 279.8L376.7 280.6L377.1 281.6L377.3 282.7M400.7 316.4L400.3 317.4L399.5 318.2L399.1 319.2M409.2 271.8L409.9 272.6L410.8 273.2L411.8 273.8L412.7 274.4L413.6 274.9M360.6 307.3L361.3 308.2L361.8 309.1L362.0 310.2L362.3 311.3L362.8 312.3L363.2 313.3M405.1 289.8L405.6 290.7L405.7 291.8L405.8 292.9M390.0 308.1L391.1 308.1L392.2 308.2L393.3 308.1L394.4 308.1L395.5 307.8L396.5 308.0L397.6 307.7M379.2 279.5L380.3 279.6L381.4 279.8L382.5 279.9L383.6 280.1L384.7 280.0M381.8 299.7L382.4 298.8L383.1 298.0L384.0 297.3L385.0 297.0L386.1 297.1M351.9 299.3L352.9 299.8L354.0 300.0L355.1 300.2L356.1 299.9M358.5 277.5L358.7 278.6L359.1 279.6L359.4 280.7L359.8 281.7L360.3 282.7M384.0 318.3L385.0 318.8L385.8 319.6M378.3 276.4L379.1 277.1L380.0 277.8L380.8 278.5L381.6 279.2M373.7 262.5L374.7 262.0L375.8 261.8L376.9 261.9L378.0 262.1L379.1 261.9L380.1 262.2L381.2 261.9M384.6 296.5L385.4 297.4L385.7 298.4L386.1 299.4M400.6 270.5L399.7 271.2L398.8 271.7L397.9 272.4L397.1 273.1L396.1 273.6M387.5 309.7L388.5 310.0L389.6 310.2L390.6 309.8M405.3 307.2L405.9 308.1L406.7 308.9L407.2 309.8L408.1 310.5L408.7 311.4L409.0 312.4L409.1 313.5M351.9 291.2L352.5 292.0L352.7 293.1L353.3 294.1L354.2 294.7L355.3 294.8L356.3 295.2M366.1 279.4L366.3 280.5L366.7 281.5L367.2 282.5L367.2 283.6L367.2 284.7M371.9 281.5L371.8 282.6L371.6 283.7L371.2 284.7M361.8 282.5L362.8 283.0L363.5 283.8L364.2 284.6L365.2 285.2M388.7 307.1L389.2 308.1L390.0 308.9L390.5 309.8L391.4 310.5L392.3 311.2L393.0 312.0M360.3 270.2L360.6 271.2L360.6 272.3L360.6 273.4M376.1 264.2L377.1 264.7L378.2 265.1L379.3 265.0M375.8 309.7L376.8 310.1L377.9 309.9L378.9 310.3L379.8 311.0L380.8 311.3L381.9 311.6L382.8 312.3M398.5 294.0L398.6 295.1L399.0 296.1L398.9 297.2L399.3 298.2M401.1 303.8L401.7 304.7L402.5 305.5L403.2 306.2L404.0 307.0L404.6 308.0L405.3 308.8L406.1 309.5M382.8 290.2L383.3 291.2L383.4 292.3L383.5 293.4L383.3 294.5L382.8 295.4L382.0 296.2L381.1 296.9M359.8 290.9L359.4 292.0L359.3 293.1L358.7 294.0L357.8 294.7M351.8 265.1L352.7 265.7L353.6 266.4L354.2 267.3L354.5 268.4M406.0 312.9L405.3 313.8L404.4 314.3L403.6 315.1L402.9 316.0L402.5 317.0L402.2 318.1M368.8 266.6L369.3 267.6L370.1 268.4L371.1 268.8L372.0 269.5L372.7 270.3L373.7 270.7L374.4 271.6M381.2 265.8L382.1 266.4L382.9 267.2L383.8 267.9M400.7 299.1L401.0 300.2L401.1 301.3L401.3 302.4L401.5 303.5M384.8 273.8L384.4 274.9L383.8 275.8L382.9 276.5M363.8 296.0L364.1 297.1L364.7 298.0L365.3 298.9L365.8 299.9L365.7 301.0L365.4 302.0L364.7 302.9M373.2 306.1L373.1 307.2L373.0 308.3L372.7 309.3L372.5 310.4L372.3 311.5L372.2 312.6L372.0 313.7M370.2 292.5L371.3 292.7L372.2 293.2L373.3 293.3L374.4 293.0M376.4 276.6L376.4 277.7L376.7 278.7L377.0 279.8L377.7 280.6L378.5 281.3L379.1 282.3M401.4 316.8L402.3 317.4L403.3 317.9L404.0 318.7M408.6 292.2L409.6 292.0L410.7 291.6L411.7 291.7L412.8 292.0L413.6 292.8L414.6 293.2L415.6 293.6M399.6 277.2L400.4 278.0L400.8 279.0L400.8 280.1L401.0 281.2L401.4 282.2L401.8 283.2L402.5 284.1M399.0 299.1L399.9 299.8L400.8 300.4L401.8 300.6L402.9 300.8L404.0 301.2M389.8 296.9L389.6 298.0L389.1 299.0L388.4 299.8M380.2 316.3L381.3 316.3L382.4 315.9L383.5 315.8L384.5 315.7M392.8 266.8L393.6 267.6L394.6 268.0L395.7 268.1L396.8 268.2L397.9 268.5L399.0 268.7M383.1 265.7L384.2 265.9L385.3 266.0L386.4 265.9L387.4 266.2L388.5 266.5L389.5 266.9M411.1 291.3L411.4 292.4L411.7 293.5L412.2 294.4L412.7 295.4M379.9 312.7L380.6 313.6L381.0 314.6L381.0 315.7L381.5 316.7M402.3 308.5L402.5 309.6L402.4 310.7L402.2 311.8M376.5 279.4L377.2 280.2L378.2 280.7L378.9 281.5M362.6 311.4L363.6 311.7L364.7 311.5L365.8 311.7L366.9 311.8L367.8 312.4M350.5 297.1L351.5 297.5L352.6 297.6L353.7 297.8L354.7 298.1L355.8 298.5L356.8 298.9M406.5 282.7L407.3 283.4L408.2 284.0L408.8 284.9L409.2 285.9L409.8 286.8M410.8 306.4L411.6 307.1L412.4 307.9L412.8 308.9L412.7 310.0M409.1 260.9L409.0 262.0L408.7 263.0L408.3 264.1L408.2 265.2L408.3 266.3M362.1 303.8L363.1 304.1L364.0 304.8L365.0 305.1L366.1 305.1L367.1 305.6L368.2 305.8L369.1 306.5M386.3 319.5L387.4 319.5L388.5 319.6M407.7 265.4L408.2 266.4L408.2 267.5L408.5 268.5L408.5 269.6L408.4 270.7L408.3 271.8L408.1 272.9M368.0 284.2L368.2 285.3L368.8 286.2L369.4 287.1L369.8 288.1L370.2 289.1L370.6 290.1M401.9 313.5L402.4 314.4L402.6 315.5L402.6 316.6L403.0 317.7L403.1 318.7M392.6 306.9L393.6 306.4L394.6 305.9L395.3 305.0L396.3 304.6L397.3 304.2L398.2 303.6L399.3 303.4M394.9 291.1L395.8 291.8L396.7 292.4L397.5 293.2L398.0 294.2L398.2 295.2L398.7 296.2L398.7 297.3M369.0 289.2L369.8 289.9L370.6 290.6L371.0 291.7L370.9 292.8M400.5 312.6L401.0 313.6L401.7 314.4L401.9 315.5L401.7 316.6L401.1 317.5L400.1 318.0M409.8 314.4L410.2 315.5L410.6 316.5L411.2 317.4L411.8 318.3L412.6 319.1M368.1 304.4L367.9 305.4L367.6 306.5L367.2 307.5L366.4 308.3L365.8 309.2M403.3 275.2L403.8 276.2L403.9 277.3L404.4 278.3L404.8 279.3L404.9 280.4L405.1 281.5L405.4 282.5M353.1 288.7L353.6 289.6L354.3 290.5L355.0 291.3L355.7 292.2L356.6 292.9L357.1 293.8L357.3 294.9M394.4 294.3L395.2 293.6L395.6 292.6L396.4 291.8L397.2 291.1L398.1 290.4L398.9 289.6M351.4 271.9L351.3 272.9L351.0 274.0L350.7 275.1L350.5 276.1L350.0 277.1M408.3 297.6L409.4 297.7L410.4 298.1L411.5 298.2L412.6 298.4M356.6 295.8L356.8 296.9L357.0 298.0L357.3 299.1L357.6 300.1L358.0 301.1L357.7 302.2L357.9 303.3M372.7 305.4L373.0 306.4L373.4 307.5L373.7 308.5L374.3 309.4L375.0 310.3M357.0 262.8L358.0 263.2L358.9 263.8L359.4 264.8L360.3 265.4L361.1 266.2L361.6 267.2M404.9 300.5L405.5 301.4L405.8 302.5L405.8 303.6L406.0 304.7L406.4 305.7L406.9 306.7L407.6 307.5M349.3 262.2L350.2 262.8L350.8 263.7L351.5 264.6M409.1 263.5L409.0 264.6L409.2 265.7L409.0 266.8L408.9 267.9L408.5 268.9L408.0 269.9M390.7 273.0L391.3 273.9L391.6 275.0L391.8 276.1L391.5 277.1L391.0 278.1L390.1 278.7M350.8 262.9L350.4 264.0L350.5 265.1L350.1 266.1L350.2 267.2L350.7 268.2L351.0 269.2L351.4 270.2M384.2 287.8L385.3 288.0L386.4 288.1L387.4 287.7L388.5 287.6L389.5 287.9L390.6 288.2M373.8 309.5L374.6 310.2L375.6 310.7L376.6 311.1L377.5 311.7L378.3 312.4L379.3 312.9L380.4 313.1M353.4 306.2L353.8 307.3L354.0 308.3L354.6 309.3L355.3 310.1L355.7 311.1L355.8 312.2L355.4 313.3M367.7 277.5L368.5 278.2L369.4 278.8L370.2 279.5L371.3 280.0L372.0 280.8L372.3 281.8L372.7 282.9M394.7 313.6L395.2 314.6L395.9 315.4L396.4 316.4M374.2 277.5L374.8 278.4L375.0 279.5L374.8 280.6L374.7 281.7L374.7 282.8M378.1 265.6L378.3 266.7L378.6 267.8L378.7 268.9L379.0 269.9L379.1 271.0L378.7 272.1M390.2 311.9L390.7 312.8L391.4 313.7L392.3 314.4L393.2 314.9L394.2 315.4L395.2 315.9L396.2 316.2M409.9 265.6L410.9 266.2L412.0 266.3L413.1 266.2L414.2 266.4L415.2 266.8L416.0 267.5L417.1 267.9M377.4 313.0L377.8 314.0L378.1 315.1L378.4 316.1L378.3 317.2L378.0 318.3L378.0 319.4M381.6 291.0L381.5 292.1L381.8 293.2L382.1 294.2M374.7 303.5L375.1 304.5L376.0 305.2L377.0 305.6L378.1 305.8L379.1 306.2M392.5 316.2L393.4 316.7L394.5 317.1L395.3 317.7L396.4 318.1L397.2 318.9L398.3 319.1M391.4 286.4L392.4 286.1L393.4 285.6L394.2 284.8L395.3 284.6L396.3 284.3L397.3 283.9M363.6 307.6L363.4 308.7L363.2 309.8L362.8 310.8M394.0 281.3L394.1 282.4L394.4 283.5L394.6 284.5L394.4 285.6M382.0 273.7L382.5 274.7L383.3 275.4L384.0 276.3M370.8 262.6L370.6 263.7L370.5 264.8L370.6 265.9L370.6 267.0M392.3 290.7L392.0 291.7L391.3 292.6L390.5 293.4L389.8 294.2L389.5 295.3L389.5 296.4M407.0 306.5L407.9 307.1L408.4 308.1L408.9 309.0M373.2 310.3L374.2 310.7L375.3 310.7L376.4 310.5L377.3 309.9L378.2 309.2L378.6 308.2L378.7 307.1M349.7 315.8L350.7 316.4L351.4 317.2L352.4 317.7M365.6 276.9L365.6 277.9L365.5 279.0L365.2 280.1M410.7 272.5L411.4 273.3L412.2 274.1L413.2 274.6L414.3 274.6L415.3 274.9M403.4 276.8L403.5 277.9L403.7 279.0L404.1 280.0L404.8 280.9L405.1 281.9M411.9 301.7L411.9 302.8L411.8 303.9L411.5 305.0L411.4 306.1L411.1 307.2L410.5 308.0L410.2 309.1M350.4 283.1L350.9 284.1L351.7 284.9L352.2 285.8L353.0 286.6L353.6 287.5L354.6 288.0M367.6 316.7L367.9 317.8L367.9 318.9L367.7 320.0M372.9 264.5L373.2 265.5L373.5 266.6L373.4 267.7L373.6 268.7L374.2 269.7L374.6 270.7M388.0 272.9L388.9 273.4L389.8 274.1L390.7 274.8L391.5 275.5L392.0 276.5L391.9 277.6M389.8 298.8L390.3 299.7L390.8 300.7L391.2 301.7L391.8 302.7L392.3 303.6L392.8 304.7M352.8 312.8L353.1 313.8L353.3 314.9L353.4 316.0L353.1 317.0M399.4 264.5L400.4 265.0L401.4 265.2L402.5 265.0L403.6 265.2L404.5 265.8M351.5 312.7L352.6 313.0L353.6 312.8L354.7 313.0M351.8 285.0L352.9 285.2L354.0 285.3L354.9 285.9M351.8 318.5L352.6 319.3L353.3 320.1M399.5 271.6L400.5 271.9L401.6 272.1L402.7 272.3M363.9 291.6L364.5 292.5L365.1 293.4L365.9 294.2M361.2 317.6L362.0 318.3L362.9 319.0L364.0 319.2L364.9 319.8M376.8 294.7L377.7 295.3L378.3 296.2L378.6 297.3L379.3 298.2L379.9 299.0M398.1 299.6L399.2 299.8L400.2 299.4L401.0 298.7M375.8 309.3L375.6 310.4L375.2 311.4L374.9 312.5L374.8 313.6L374.3 314.6L373.8 315.6M355.5 270.8L356.0 271.8L356.8 272.5L357.5 273.4M394.0 291.0L394.1 292.1L394.4 293.2L394.3 294.3L393.9 295.3L393.4 296.3L392.9 297.2M373.5 284.4L373.6 285.5L374.1 286.4L374.8 287.3L375.5 288.2L376.4 288.8M397.1 299.9L397.3 301.0L397.8 302.0L398.1 303.0M381.6 308.5L380.6 309.0L379.6 309.4L378.6 309.9L377.9 310.7L377.3 311.7L377.3 312.8L376.9 313.8M372.8 308.2L373.4 309.2L374.2 309.9L374.8 310.8L375.4 311.8L376.1 312.6L376.7 313.5M356.2 298.4L356.1 299.5L356.0 300.6L356.0 301.7L356.5 302.7L357.2 303.5L357.7 304.5M384.9 290.9L385.6 291.7L386.3 292.6L386.7 293.6L387.1 294.6L387.7 295.6M384.0 273.2L385.1 273.1L386.2 273.1L387.2 272.7L388.2 272.2L389.3 272.1L390.3 271.6M396.1 280.5L396.3 281.6L396.3 282.7L396.4 283.8M373.8 274.1L373.1 274.9L372.3 275.7L371.4 276.4L370.5 276.9L369.4 277.1L368.5 277.8M403.6 301.3L404.3 302.2L405.2 302.8L406.3 302.9L407.3 302.5L408.1 301.7L408.7 300.8L409.5 300.1M384.3 262.5L385.4 262.7L386.5 263.1L387.6 263.2L388.6 263.4L389.7 263.7M352.4 272.4L351.5 273.0L350.4 273.2L349.3 273.0M389.3 302.2L389.2 303.3L388.7 304.2L388.3 305.3L387.4 306.0L386.7 306.8L385.8 307.4L384.7 307.5M399.5 277.0L399.6 278.1L399.1 279.1L398.5 280.1L398.3 281.1L397.7 282.1L397.0 283.0M356.1 306.9L355.8 307.9L355.1 308.8L354.6 309.8M366.5 266.6L367.4 267.2L368.5 267.5L369.4 268.1L370.0 269.0M391.7 304.6L392.5 305.4L393.6 305.7L394.5 306.3L395.6 306.6M357.5 288.4L358.3 289.1L358.8 290.1L359.1 291.2L359.2 292.3M388.0 282.7L388.6 283.7L389.5 284.3L390.1 285.2L390.4 286.3L391.1 287.1L391.5 288.1L391.7 289.2M378.5 289.4L379.0 290.4L379.1 291.5L379.6 292.4L379.8 293.5L380.1 294.6M384.4 288.9L385.5 289.2L386.6 289.6L387.7 289.5L388.7 289.4L389.7 289.0M379.9 304.9L380.4 305.9L381.2 306.6L381.8 307.5L381.9 308.6L382.3 309.7M406.4 294.0L406.9 295.0L407.1 296.0L407.5 297.1L408.2 297.9" stroke="#a8a8a8" stroke-width="0.4" fill="none"/><path d="M375 264L373.5 321M418 262V320M456 260V318M374 274.5C390 274 405 276 418 276M418 270H456M374 309L400 312M456 275H478M456 296H478" stroke="#b050c8" stroke-width="0.5" opacity="0.9"/><polygon points="412,268 456,266 456,316 412,318" fill="#120808" opacity="0.55"/><polygon points="456,266 480,265 480,316 456,316" fill="#000" opacity="0.5"/><path d="M449.0 274.5L449.4 271.4M418.9 304.6L416.7 303.6M426.2 315.3L424.2 317.4M443.6 315.9L442.6 314.1M411.1 315.5L413.4 313.8M445.6 270.2L446.6 272.3M432.1 275.7L435.0 276.6M448.6 312.7L449.9 313.9M444.9 301.8L443.3 301.6M418.6 278.2L419.7 281.8M420.8 304.5L419.0 306.7M431.0 281.0L432.5 279.5M435.7 301.6L435.7 303.8M451.4 290.1L454.0 289.8M451.2 270.9L449.9 267.7M432.1 281.5L428.7 281.9M448.9 305.7L451.3 305.5M415.0 298.2L413.9 296.5M417.6 298.0L416.3 295.8M439.5 313.3L440.3 311.6M451.0 275.0L453.0 274.7M440.4 289.9L438.6 290.9M425.5 302.9L424.2 300.4M410.9 302.7L410.1 304.6M412.7 288.9L414.9 291.9M435.3 268.6L438.6 268.7M452.0 298.4L451.5 295.4M449.9 309.0L452.9 307.4M438.3 298.5L440.0 301.8M439.6 271.1L443.3 270.3M446.2 293.7L444.7 293.3M425.5 270.0L421.8 270.6M445.1 274.0L445.3 277.6M435.4 314.0L434.9 311.5M411.3 287.9L414.5 285.6M451.1 297.3L452.4 294.6M440.2 292.9L439.6 290.0M437.3 306.8L435.5 308.2M422.3 305.2L424.9 307.4M442.3 302.7L438.6 301.9M451.8 289.7L450.3 287.3M425.2 310.9L423.8 307.7M455.2 275.2L458.1 275.2M450.1 305.8L451.5 306.5M425.8 303.7L425.7 300.5M412.5 298.8L412.2 295.7M416.6 275.4L415.7 278.4M439.7 297.6L436.3 297.2M411.8 298.7L411.1 301.7M439.7 268.1L440.4 270.9M453.8 277.1L454.2 274.6M438.0 292.6L441.1 290.2M427.2 305.5L428.3 308.1M428.3 305.8L429.3 303.9M413.2 281.3L410.9 282.3M451.1 309.7L454.9 310.4M419.1 298.3L422.6 298.2M416.8 297.2L418.8 293.9M431.8 300.2L428.8 300.1M453.4 295.2L451.1 295.4M438.4 294.7L436.3 295.4M449.5 288.1L451.0 288.4M414.4 314.4L415.8 315.1M415.7 307.5L413.9 306.2M450.6 303.2L452.0 301.6M445.4 299.9L447.4 297.6M416.0 286.1L415.2 288.9M455.8 283.4L458.8 285.1M424.5 269.9L421.8 267.8M450.5 283.3L448.0 282.7M426.9 283.6L429.2 285.7M416.7 301.0L419.7 300.9M437.2 315.6L439.7 313.6M437.7 312.1L437.7 310.2M443.6 289.7L445.8 292.0M442.1 310.0L440.3 309.0M443.5 271.6L445.1 270.0M425.7 292.7L422.3 290.6M412.4 306.9L408.7 308.1M447.0 286.6L449.5 284.0M431.8 313.0L433.5 312.8M410.9 276.1L412.9 273.2M435.3 310.1L436.2 312.3M437.6 309.3L435.6 309.6M418.1 285.1L414.6 286.4M445.8 275.3L446.9 277.1M440.0 290.9L438.4 288.0M425.8 281.8L423.8 280.3M415.6 307.3L416.1 305.8M445.4 296.9L446.8 295.1M416.1 285.1L418.6 287.0M439.4 315.1L439.4 316.8M454.3 305.8L457.1 305.6M416.0 291.0L416.9 288.3M423.3 296.2L421.1 294.7M422.7 272.2L423.8 275.2M431.8 276.7L434.4 273.9M441.8 294.6L445.7 295.1M434.7 278.8L433.1 275.6M422.4 297.4L421.3 294.9M415.6 296.1L416.7 297.7M441.9 290.0L439.1 291.2M424.4 283.6L427.2 281.7M425.3 292.7L425.5 289.5M444.2 268.8L446.0 265.9M436.8 313.2L438.2 314.8M441.5 287.0L443.8 288.0M455.1 295.5L457.4 295.8M435.8 304.5L438.3 307.6M442.0 310.1L442.1 308.3M430.6 273.5L432.1 269.9M427.8 303.7L425.7 303.1M422.5 273.8L420.8 272.5M441.2 309.0L438.6 312.0M431.1 270.2L433.8 272.2M436.2 302.7L432.9 302.9M442.4 300.8L439.3 302.6M417.4 311.3L419.7 311.4M430.2 271.5L428.6 274.9M427.3 277.8L429.3 278.8M450.8 292.7L450.8 290.8M447.3 306.0L444.6 305.0M431.7 270.6L428.9 271.6M434.4 310.0L437.8 308.9M414.8 291.5L412.4 290.8M452.9 310.4L452.3 313.3M412.0 301.4L412.0 302.9M416.8 315.1L419.5 314.8M429.2 288.5L426.3 286.7M436.9 315.8L434.5 316.6M432.1 277.0L430.0 277.9M427.4 314.9L429.4 313.5M431.5 275.6L428.7 274.1M445.9 268.9L448.7 269.6M417.3 281.1L417.6 284.6M420.1 295.8L419.1 293.2M421.4 281.2L419.6 282.0M447.9 299.3L449.9 302.3M436.8 301.5L439.8 303.9M453.8 285.6L450.5 284.7M435.1 298.4L437.6 295.8M442.8 301.3L445.9 302.3M418.5 300.4L421.9 300.0M441.7 270.8L439.7 274.2M420.9 315.1L422.3 313.4M454.0 314.6L451.3 316.9M448.3 303.6L446.0 306.1M434.1 300.2L433.7 303.6M435.2 309.6L433.6 308.6M437.7 271.1L437.8 273.9M430.4 300.7L430.8 303.4M413.8 301.0L414.3 298.0M448.5 269.6L446.6 268.4M431.6 278.5L430.0 280.8M452.8 312.5L456.5 313.7M434.9 268.5L434.5 266.7M452.6 313.3L456.2 311.9M420.8 296.8L423.2 297.0M411.4 309.2L410.5 305.9M447.0 300.1L449.1 299.9M453.8 308.4L457.5 309.3M443.7 278.6L447.1 277.8M429.9 296.3L430.0 293.0M410.8 308.2L409.2 309.3M448.6 276.9L449.8 275.1M419.9 294.3L418.4 295.1M428.0 297.8L427.1 294.8M444.2 295.6L444.8 298.0M449.3 272.8L450.7 276.2M432.1 271.5L431.5 269.5M412.0 287.1L413.8 290.1M436.0 310.1L436.3 308.6M450.3 293.8L447.8 294.6M452.4 282.7L454.3 285.3M415.4 281.6L414.7 283.4M427.4 301.2L427.4 297.9M442.0 305.8L438.7 306.6M445.2 306.2L447.2 308.9M420.2 299.3L420.5 301.4M453.1 312.6L454.7 311.5M444.4 315.3L447.2 313.2M433.7 290.6L431.9 291.2M419.3 283.9L421.7 282.3M420.5 298.9L423.3 296.3M450.4 273.1L448.3 274.6M443.0 293.1L444.6 291.9M436.1 294.8L436.7 296.8M449.4 276.3L448.8 277.9M425.3 282.3L424.6 286.1M438.1 277.6L441.3 277.4M417.1 279.6L417.0 277.5M446.1 295.0L449.5 294.8M450.6 274.3L452.7 271.9M414.2 315.8L416.0 313.2M422.8 273.0L420.1 274.6M451.7 295.6L455.3 296.1M433.4 289.3L431.8 290.2M445.7 289.0L447.0 292.1M444.7 295.1L443.8 296.4M435.6 286.9L433.6 286.2M410.2 270.9L409.3 272.5M415.1 272.7L417.4 273.1M425.7 302.8L422.0 302.5M411.7 291.0L413.3 293.8M414.0 305.2L414.8 308.9M426.7 303.1L429.3 301.9M451.2 290.0L453.2 290.4M450.9 297.0L449.3 296.0M448.1 275.5L448.0 273.8M416.3 294.9L414.6 292.7M453.8 273.5L454.7 270.8M415.0 275.7L417.1 277.7M445.0 292.5L442.3 293.2M430.1 315.3L431.0 312.3M448.2 296.4L450.3 299.2M430.2 293.1L428.6 291.8M438.6 287.2L436.3 288.5M426.9 309.1L424.7 307.6M431.2 292.1L430.8 289.6M418.7 305.1L421.1 307.8M431.3 295.4L429.7 292.5M448.6 304.5L449.0 306.8M419.7 314.4L420.2 312.9M428.3 298.3L428.9 299.7M432.0 297.3L434.9 298.5M410.8 300.8L408.2 300.3M446.1 304.6L444.1 305.6M446.2 290.7L444.4 293.8M420.5 305.9L416.5 305.8M433.8 276.4L435.4 277.1M428.2 303.3L426.1 303.6M428.1 278.5L429.0 279.7M442.8 283.1L443.7 285.6M434.2 313.5L435.1 309.8M454.1 285.8L451.5 288.2M421.2 298.4L422.4 295.8M415.5 275.5L416.0 279.4M443.1 288.3L444.4 287.1M413.7 311.2L416.7 313.4M411.8 279.6L414.4 280.4M448.2 285.0L444.4 284.4M447.8 300.5L448.4 299.0M414.8 278.8L411.5 279.0M442.6 313.1L444.3 316.5M437.0 304.5L434.3 304.7M414.5 311.1L414.6 307.6M430.6 285.5L433.0 284.7M445.7 300.1L445.0 297.5M429.4 284.9L428.1 285.7M448.5 299.6L451.0 300.1M434.7 298.6L431.0 297.0M416.3 286.6L417.3 285.5M432.3 279.2L436.0 279.6M453.8 283.0L453.3 279.9M427.7 288.9L429.2 289.5M452.3 275.0L449.5 274.8M416.8 280.8L413.9 279.7M410.2 271.8L408.7 274.8M441.2 291.9L438.4 290.2M413.5 314.4L414.4 317.5M452.7 302.6L450.5 300.1M412.2 282.2L410.9 285.0M453.1 282.2L456.6 282.2M440.8 270.8L439.9 274.1M438.0 271.7L437.8 275.1M420.0 304.1L421.4 301.1M455.2 292.1L454.8 290.2M448.6 305.9L450.1 303.9" stroke="#e82a2a" stroke-width="0.6" fill="none"/><path d="M436.5 308.1L439.1 307.5M431.9 275.1L433.7 274.8M455.3 295.2L453.9 293.8M443.8 315.7L445.7 317.9M441.6 282.9L441.9 284.9M447.0 315.1L445.8 313.2M425.8 294.2L425.4 296.0M441.6 299.9L440.0 302.5M451.0 278.7L449.3 280.3M445.6 302.4L444.0 304.4M412.2 302.3L413.9 304.9M415.6 276.0L415.2 274.3M451.2 294.3L450.4 292.4M423.0 305.1L424.1 307.8M455.4 285.8L458.4 283.3M454.7 303.9L455.3 302.5M445.1 312.0L445.7 313.5M415.1 309.3L417.0 311.2M447.5 301.6L446.1 300.1M416.8 294.9L415.4 293.2M453.6 313.4L457.0 312.5M431.3 289.9L427.9 290.2M419.8 308.2L418.5 306.3M431.2 314.1L427.6 315.5M441.9 282.0L438.1 282.2M439.0 268.8L441.7 270.1M434.1 270.9L435.9 274.3M413.0 306.1L414.6 306.4M411.8 296.2L409.0 294.9M411.7 287.8L409.4 287.4M418.5 310.0L419.9 308.1M445.0 311.9L444.7 313.8M436.5 313.2L434.3 314.0M429.6 268.8L428.3 270.1M438.7 297.1L440.2 297.2M424.7 274.8L428.4 274.7M413.1 304.2L415.2 302.5M437.2 285.3L440.6 284.2M414.0 305.7L411.5 308.0M446.4 288.6L443.9 290.4M410.1 298.4L406.4 299.4M419.4 289.8L420.8 286.2M433.4 270.7L430.8 271.1M453.9 301.3L450.0 301.3M415.8 286.7L418.2 286.1M448.9 303.1L448.3 299.7M414.2 296.5L416.3 298.2M435.5 277.7L435.8 276.1M414.7 307.1L413.0 304.3M428.1 291.8L431.1 290.8M424.4 272.7L425.6 271.2M418.2 304.9L417.6 307.3M412.4 276.9L410.5 278.4M424.2 278.7L422.8 282.1M434.9 272.0L438.0 271.7M439.0 312.4L439.9 314.4M421.0 302.5L420.0 303.9M413.6 295.2L412.2 291.5M416.6 296.2L416.0 297.6M450.5 282.4L447.0 282.6M454.6 274.2L454.8 270.5M443.0 313.9L441.5 311.2M453.7 285.9L454.8 283.5M423.2 283.0L424.0 280.2M413.0 287.4L412.5 289.6M449.8 280.7L450.0 277.8M426.0 283.5L425.1 286.7M424.8 288.5L422.9 288.5M423.6 284.6L421.3 284.3M430.2 310.6L426.8 310.1M424.5 268.8L422.6 270.8M417.1 291.4L415.3 290.6M414.2 272.9L412.8 269.9M431.2 296.7L429.6 296.4M428.5 271.4L426.6 269.9M416.6 280.6L414.9 277.3M426.3 276.5L429.5 275.1M449.5 272.4L453.1 272.4M431.4 299.4L433.7 297.6M437.8 282.5L437.6 284.6M430.6 277.3L433.1 278.2M443.3 299.8L445.5 302.1M432.0 279.4L431.7 280.9M451.5 295.6L452.7 291.9M437.2 290.1L435.8 293.9M431.3 297.8L430.1 299.4M413.1 287.1L414.6 288.8M456.0 285.8L456.2 283.5M416.6 300.9L417.1 303.0M410.7 286.0L409.4 282.3M453.9 275.2L454.4 272.0M414.4 278.0L412.8 276.4M413.2 289.5L414.6 287.9M420.0 305.9L419.6 303.5M414.1 272.5L415.0 269.0M445.5 270.0L444.0 270.4M419.6 284.4L423.0 285.1M444.6 278.3L446.4 279.6M431.0 296.6L432.7 297.9M425.9 291.6L428.9 290.6M434.9 292.1L431.6 292.0M411.0 315.5L408.8 318.4M424.5 300.7L426.3 297.7M447.2 305.2L445.6 308.6M416.9 270.1L417.0 266.1M419.5 301.4L419.0 303.5M431.3 307.7L429.6 310.6M420.4 290.4L419.8 287.5M427.9 300.9L430.2 302.1M448.4 295.0L446.4 295.2M436.4 280.7L435.5 277.9M426.3 303.8L428.1 307.1" stroke="#f0a040" stroke-width="0.45" fill="none"/><rect x="388" y="272.5" width="5" height="2" fill="#e02828" opacity="0.55"/><rect x="400" y="272.5" width="6" height="2" fill="#e02828" opacity="0.55"/><rect x="412" y="275" width="8" height="8" fill="#e02828" opacity="0.55"/><rect x="422" y="278" width="10" height="6" fill="#e02828" opacity="0.55"/><rect x="437" y="280" width="12" height="9" fill="#e02828" opacity="0.55"/><rect x="418" y="300" width="10" height="8" fill="#e02828" opacity="0.55"/><rect x="432" y="298" width="12" height="10" fill="#e02828" opacity="0.55"/><rect x="444" y="302" width="8" height="8" fill="#e02828" opacity="0.55"/><rect x="386" y="310" width="5" height="2" fill="#e02828" opacity="0.55"/><rect x="380" y="316" width="5" height="2" fill="#e02828" opacity="0.55"/><rect x="412" y="290" width="5" height="4" fill="#e02828" opacity="0.55"/><rect x="364" y="301" width="3" height="1.6" fill="#e02828" opacity="0.55"/><path d="M429.5 262V322M439.2 262V322M455 262V320M457.2 262V320M412 268V318M412 296H456M430 280H456" stroke="#b040d0" stroke-width="0.5"/><path d="M366 302C380 300 388 295 400 294.5C415 294 425 291 440 289.5C448 289 452 289 456 289" stroke="#e05080" stroke-width="3.6" fill="none"/><path d="M366 302C380 300 388 295 400 294.5C415 294 425 291 440 289.5C448 289 452 289 456 289" stroke="#f4a8c8" stroke-width="1" fill="none"/><path d="M416 293C430 291 440 289.5 456 288.5" stroke="#40a0f0" stroke-width="0.5" fill="none"/><path d="M358 301.5H366" stroke="#e02828" stroke-width="1.5"/><path d="M432.5 265.1H444.5M432.5 267.0H444.5M445 265.1H451M445 267.0H451M457 272.6H468M457 274.5H468M457 276.4H468M457 280.6H470M457 282.5H470M457 284.4H470M457 286.3H470M457 288.2H470M470 275.6H478M470 277.5H478M470 279.4H478M470 281.3H478M470 283.2H478M470 285.1H478M470 287.0H478M470 288.9H478M457 296.6H463M457 298.5H463M467 295.6H472M467 297.5H472M467 299.4H472M457 306.6H465M457 308.5H465M470 304.6H476M462 311.6H469" stroke="#f040f0" stroke-width="1.25" stroke-dasharray="1.6 0.5"/><rect x="511.5" y="264.5" width="1.8" height="1.8" fill="#f040f0"/><text x="526.5" y="272.5" font-size="3.4" fill="#f02020" font-family="Liberation Sans" font-weight="bold" textLength="11" lengthAdjust="spacing">Z.A</text><text x="510" y="277" font-size="2.2" fill="#f02020" font-family="Liberation Sans" textLength="4">abc</text><text x="510" y="281.3" font-size="2.4" fill="#f02020" font-family="Liberation Sans" font-weight="bold" textLength="9" lengthAdjust="spacingAndGlyphs">Elevation</text><rect x="529.5" y="276" width="11" height="9" fill="#d02020"/><rect x="531" y="277" width="3.5" height="3" fill="#3050d0"/><rect x="535.5" y="277" width="3.5" height="3" fill="#e8e8e8" opacity="0.5"/><rect x="531" y="281" width="8" height="3" fill="#f04040"/><text x="545" y="283" font-size="3.2" fill="#f02020" font-family="Liberation Sans" font-weight="bold" textLength="8" lengthAdjust="spacingAndGlyphs">ZCO</text><text x="510" y="293.3" font-size="4.4" fill="#f02020" stroke="#f02020" stroke-width="0.35" font-family="Liberation Sans" font-weight="bold" textLength="26" lengthAdjust="spacingAndGlyphs">BENCHMARK ELEV</text><text x="510" y="301.3" font-size="4.4" fill="#f02020" stroke="#f02020" stroke-width="0.35" font-family="Liberation Sans" font-weight="bold" textLength="26" lengthAdjust="spacingAndGlyphs">DATUM NAVD88 FT</text><text x="510" y="309" font-size="4.4" fill="#f02020" stroke="#f02020" stroke-width="0.35" font-family="Liberation Sans" font-weight="bold" textLength="8" lengthAdjust="spacingAndGlyphs">BM1</text><text x="518" y="328.5" font-size="2.6" fill="#f040f0" opacity="1" font-family="Liberation Sans" font-weight="bold" textLength="26" lengthAdjust="spacingAndGlyphs">ROAD SECTION DETAIL</text><text x="557.5" y="316.5" font-size="2.6" fill="#f040f0" opacity="1" font-family="Liberation Sans" font-weight="bold" textLength="22.5" lengthAdjust="spacingAndGlyphs">CURVE TABLE DATA</text><rect x="526.5" y="332.5" width="3.5" height="1" fill="#e82020"/><path d="M555.5 322V327.0M560.0 322V327.0M564.5 322V327.0M569.0 322V327.0M555.5 322.0H569.0M555.5 324.5H569.0M555.5 327.0H569.0" stroke="#e8e8e8" stroke-width="0.4" fill="none"/><path d="M570.0 322V330.8M573.0 322V330.8M570 322.0H573.0M570 324.2H573.0M570 326.4H573.0M570 328.6H573.0M570 330.8H573.0" stroke="#e8e8e8" stroke-width="0.4" fill="none"/><path d="M558.0 333V342.2M562.3 333V342.2M566.6 333V342.2M570.9 333V342.2M558 333.0H570.9M558 335.3H570.9M558 337.6H570.9M558 339.9H570.9M558 342.2H570.9" stroke="#e8e8e8" stroke-width="0.4" fill="none"/><path d="M558.0 343V359.8M562.1 343V359.8M566.2 343V359.8M570.3 343V359.8M558 343.0H570.3M558 345.4H570.3M558 347.8H570.3M558 350.2H570.3M558 352.6H570.3M558 355.0H570.3M558 357.4H570.3M558 359.8H570.3" stroke="#e8e8e8" stroke-width="0.4" fill="none"/><path d="M576.0 330V342.0M580.5 330V342.0M585.0 330V342.0M589.5 330V342.0M576 330.0H589.5M576 332.4H589.5M576 334.8H589.5M576 337.2H589.5M576 339.6H589.5M576 342.0H589.5" stroke="#f0c8f0" stroke-width="0.4" fill="none"/><path d="M576 328L590 342M578 342L590 331" stroke="#e020e0" stroke-width="0.7"/><rect x="577" y="333" width="8" height="5" fill="#e020e0" opacity="0.6"/><path d="M142.5 376.7V349" stroke="#30a030" stroke-width="0.8"/><path d="M140.2 351.8L142.5 345.2L144.8 351.8Z" fill="none" stroke="#30a030" stroke-width="0.6"/><path d="M145.5 379.8H172" stroke="#b02020" stroke-width="0.8"/><path d="M171 377.5L177.5 379.8L171 382.1Z" fill="none" stroke="#b02020" stroke-width="0.6"/><rect x="139.3" y="376.8" width="6.2" height="6.2" fill="none" stroke="#bbb" stroke-width="0.6"/><path d="M140.8 333.2L142.6 335.8L144.4 333.2M142.6 335.8V338.2" stroke="#bbb" stroke-width="0.6" fill="none"/><path d="M184.5 377.5L188.5 382.2M188.5 377.5L184.5 382.2" stroke="#bbb" stroke-width="0.6"/><path d="M652.2 107.1L649.7 117.4L641.6 125.1V182" stroke="#ac2222" stroke-width="0.8" fill="none"/><path d="M617.1 139.7Q617 136.2 620 136.2H640.2L641.6 140" stroke="#ac2222" stroke-width="0.8" fill="none"/><path d="M625.3 144Q621.4 145 621.4 148.5V151.6H640.5" stroke="#ac2222" stroke-width="0.8" fill="none"/><path d="M675 130.4V134.7H662.8V210" stroke="#ac2222" stroke-width="0.8" fill="none"/><path d="M662.8 145H668M662.8 164H668M662.8 167.7H668" stroke="#ac2222" stroke-width="0.8" fill="none"/><path d="M670.3 160.7V149.2H686.8L699.7 139.5H720" stroke="#ac2222" stroke-width="0.8" fill="none"/><path d="M662.8 160.7H670.3" stroke="#ac2222" stroke-width="0.8" fill="none"/><path d="M634.5 162.6H655.3V187.5M651.6 157L655.3 162.6M647.8 159V165" stroke="#ac2222" stroke-width="0.8" fill="none"/><path d="M631.2 167V210M624.8 176V210M647.3 180V210" stroke="#ac2222" stroke-width="0.8" fill="none"/><path d="M673 171.4Q669.3 173 669.3 176V196" stroke="#ac2222" stroke-width="0.8" fill="none"/><path d="M695 172H685.8V210" stroke="#ac2222" stroke-width="0.8" fill="none"/><path d="M593.8 145.8Q590.6 150 590.6 155.4L593.1 167.6H598.9L605.3 176L610.5 184.3" stroke="#ac2222" stroke-width="0.8" fill="none"/><path d="M598.9 167L594.4 171.4V182.4H590" stroke="#ac2222" stroke-width="0.8" fill="none"/><path d="M616.2 162.5Q615 165 615 167.6L602.8 170.2" stroke="#ac2222" stroke-width="0.8" fill="none"/><path d="M605.3 176L616.2 174V186.2H608" stroke="#ac2222" stroke-width="0.8" fill="none"/><path d="M594.4 182.4H601.5V194H620" stroke="#ac2222" stroke-width="0.8" fill="none"/><path d="M574.5 183.6V189.4L583.5 190L587.4 191.3" stroke="#ac2222" stroke-width="0.8" fill="none"/><path d="M600 186H612M608 186V196" stroke="#ac2222" stroke-width="0.8" fill="none"/><path d="M552.8 229.3L587.1 190.8" stroke="#ac2222" stroke-width="0.8" fill="none"/><path d="M623 198L726.6 164" stroke="#ac2222" stroke-width="0.8" fill="none"/><path d="M726.6 167.1Q723.5 172.2 715.4 186.4V212.8" stroke="#ac2222" stroke-width="0.8" fill="none"/><path d="M553 186C575 193 592 197 612 199.5" stroke="#ac2222" stroke-width="0.8" fill="none"/><path d="M620 196.2H650M660 196.2H731.7L735 199.5M660 199.7H700" stroke="#ac2222" stroke-width="0.8" fill="none"/><path d="M700.2 180.3V213.9M691 180V225" stroke="#ac2222" stroke-width="0.8" fill="none"/><path d="M692 187.5H705M694 186V189M697 186V189M700 186V189M703 186V189" stroke="#ac2222" stroke-width="0.8" fill="none"/><path d="M623.5 195V212M638.3 195V225M646.9 195V212M654.2 203V235M661.8 195V212M668.3 195V250M676.5 195V210L673.6 219M683.6 210V250M691.3 195V226M698.3 195V212" stroke="#ac2222" stroke-width="0.8" fill="none"/><path d="M683 212H700M668 226.8H683M683 235H690M676 238H683" stroke="#ac2222" stroke-width="0.8" fill="none"/><path d="M690 209.8H768" stroke="#ac2222" stroke-width="0.8" fill="none"/><path d="M701.2 210V232M706.3 210V232M714 210V250M721.5 210Q720 222 722 230V250" stroke="#ac2222" stroke-width="0.8" fill="none"/><path d="M700 216.9H714M700 222H714M700 227H714M700 232.2H714M714 235.2H722M714 243.3H730M722 247L730 244" stroke="#ac2222" stroke-width="0.8" fill="none"/><path d="M743.9 199.6Q745 205 752 206.5M755 200V210M751 200H759M751 204H759M751 208H759" stroke="#ac2222" stroke-width="0.8" fill="none"/><path d="M668.3 200V250M666.5 203H670M666.5 208H670M666.5 213H670M666.5 218H670M666.5 223H670M666.5 228H670M666.5 233H670M666.5 238H670M666.5 243H670" stroke="#ac2222" stroke-width="0.8" fill="none"/><path d="M639.3 150V182M637.5 155H641M637.5 160H641M637.5 165H641M637.5 170H641M637.5 175H641M637.5 180H641" stroke="#ac2222" stroke-width="0.8" fill="none"/><path d="M598.6 205V212" stroke="#ac2222" stroke-width="0.8" fill="none"/><path d="M552.7 184.3C568 190 580 194 590 197L613.6 201.5M623 203.4H720.5L760 196.2" stroke="#2020c8" stroke-width="1" fill="none"/><path d="M598.6 200Q602 208.7 608 210.1H681.2L687.7 205" stroke="#2020c8" stroke-width="1" fill="none"/><circle cx="619.4" cy="202.2" r="4" fill="#000" stroke="#ac2222" stroke-width="0.5"/><text x="619.4" y="203.8" font-size="4" fill="#ac2222" text-anchor="middle" font-family="Liberation Sans">34</text><circle cx="709.3" cy="203.7" r="4" fill="#000" stroke="#ac2222" stroke-width="0.5"/><text x="709.3" y="205.3" font-size="4" fill="#ac2222" text-anchor="middle" font-family="Liberation Sans">20</text><rect x="626.4" y="158" width="8.1" height="9.1" fill="none" stroke="#8a2040" stroke-width="0.9"/><path d="M594.4 159.3L622 164.4" stroke="#b02020" stroke-width="0.5"/><path d="M619 163L626 165L620 166.5Z" fill="#d02020"/><text x="565.5" y="158.2" font-size="4.9" fill="#b82222" font-family="Liberation Sans" textLength="56.5" lengthAdjust="spacingAndGlyphs">SUBJECT  PROPERTY</text><g fill="none" stroke="#6a5050" stroke-width="0.45" font-family="Liberation Sans" font-size="6.4"><text x="619.4" y="192.6" textLength="17" lengthAdjust="spacingAndGlyphs">CITY</text><text x="644" y="192.6" textLength="8.5" lengthAdjust="spacingAndGlyphs">OF</text><text x="659" y="192.6" textLength="48" lengthAdjust="spacingAndGlyphs">PHILOMATH</text></g><text x="583.5" y="234.4" font-size="6" fill="#b82222" font-family="Liberation Sans" textLength="57.5" lengthAdjust="spacingAndGlyphs">VICINITY  MAP</text><path d="M584 235.2H641.5" stroke="#b02020" stroke-width="0.4"/><text x="606" y="241.5" font-size="3" fill="#9c2222" font-family="Liberation Sans" textLength="13" lengthAdjust="spacing">N.T.S</text></svg>
<div class="a" style="left:720.2px;top:82.3px;width:45.3px;height:80.5px;background:#f4f4f4;border:0.5px solid #b8b8b8"></div>
<div class="t" style="left:723.5px;top:85px;font-size:4.7px;line-height:7px;color:#b8b8b8">Hot Toggles</div>
<div class="a" style="left:757.3px;top:84.3px;width:7.6px;height:8.6px;background:#d8d8d8;border:0.4px solid #c8c8c8"></div>
<div class="t" style="left:727.8px;top:96.10px;font-size:4.5px;line-height:6.2px;color:#222">Point Protection</div>
<div class="t" style="left:727.8px;top:102.10px;font-size:4.5px;line-height:6.2px;color:#222">Log File Output</div>
<div class="t" style="left:727.8px;top:108.10px;font-size:4.5px;line-height:6.2px;color:#222">Input scale</div>
<div class="t" style="left:727.8px;top:114.10px;font-size:4.5px;line-height:6.2px;color:#222">Output scale</div>
<div class="t" style="left:727.8px;top:120.10px;font-size:4.5px;line-height:6.2px;color:#222">Draw lines/curves</div>
<div class="t" style="left:727.8px;top:126.10px;font-size:4.5px;line-height:6.2px;color:#222">Draw distances</div>
<div class="t" style="left:727.8px;top:132.10px;font-size:4.5px;line-height:6.2px;color:#222">Draw bearings</div>
<svg style="left:0;top:0" width="768" height="170" viewBox="0 0 768 170"><rect x="722.2" y="96.00" width="4.3" height="4.3" fill="#fff" stroke="#555" stroke-width="0.4"/><path d="M722.6 98.20L723.7 99.40L725.5 96.90" stroke="#222" stroke-width="0.55" fill="none"/><rect x="722.2" y="102.00" width="4.3" height="4.3" fill="#fff" stroke="#555" stroke-width="0.4"/><path d="M722.6 104.20L723.7 105.40L725.5 102.90" stroke="#222" stroke-width="0.55" fill="none"/><rect x="722.2" y="108.00" width="4.3" height="4.3" fill="#fff" stroke="#555" stroke-width="0.4"/><rect x="722.2" y="114.00" width="4.3" height="4.3" fill="#fff" stroke="#555" stroke-width="0.4"/><rect x="722.2" y="120.00" width="4.3" height="4.3" fill="#fff" stroke="#555" stroke-width="0.4"/><path d="M722.6 122.20L723.7 123.40L725.5 120.90" stroke="#222" stroke-width="0.55" fill="none"/><rect x="722.2" y="126.00" width="4.3" height="4.3" fill="#fff" stroke="#555" stroke-width="0.4"/><path d="M722.6 128.20L723.7 129.40L725.5 126.90" stroke="#222" stroke-width="0.55" fill="none"/><rect x="722.2" y="132.00" width="4.3" height="4.3" fill="#fff" stroke="#555" stroke-width="0.4"/><path d="M722.6 134.20L723.7 135.40L725.5 132.90" stroke="#222" stroke-width="0.55" fill="none"/><rect x="739" y="137.7" width="24" height="6.8" fill="#fff" stroke="#aaa" stroke-width="0.4"/><rect x="739" y="145" width="24" height="6.8" fill="#fff" stroke="#aaa" stroke-width="0.4"/><rect x="726.5" y="154.8" width="31.5" height="6" fill="#e4e4e4" stroke="#b8b8b8" stroke-width="0.4"/></svg>
<div class="t" style="left:722px;top:139px;font-size:4.5px;line-height:6.8px;color:#222">Next pt:</div>
<div class="t" style="left:722.5px;top:148px;font-size:4.5px;line-height:6.8px;color:#222">Low pt:</div>
<div class="t" style="left:740.5px;top:138.6px;font-size:4.8px;line-height:6.8px;color:#222">1</div>
<div class="t" style="left:740.5px;top:147px;font-size:4.8px;line-height:6.8px;color:#222">1</div>
<div class="t" style="left:734px;top:155.8px;font-size:4.6px;line-height:6px;color:#222">Refresh</div>
<div class="a" style="left:128.5px;top:393.3px;width:640px;height:6.7px;background:linear-gradient(#f4f4f4,#e4e4e4)"></div>
<svg style="left:0;top:0" width="768" height="467" viewBox="0 0 768 467"><path d="M129 393.6H768" stroke="#999" stroke-width="0.4"/><rect x="130.5" y="394.3" width="5" height="5" fill="#f0f0f0" stroke="#777" stroke-width="0.35"/><rect x="136" y="394.3" width="5" height="5" fill="#f0f0f0" stroke="#777" stroke-width="0.35"/><rect x="141.5" y="394.3" width="5" height="5" fill="#f0f0f0" stroke="#777" stroke-width="0.35"/><rect x="147" y="394.3" width="5" height="5" fill="#f0f0f0" stroke="#777" stroke-width="0.35"/><path d="M132 395.4V398.2M134.5 395.4L132.6 396.8L134.5 398.2Z" stroke="#111" stroke-width="0.4" fill="#111"/><path d="M139.5 395.4L137.6 396.8L139.5 398.2Z" fill="#111"/><path d="M143 395.4L144.9 396.8L143 398.2Z" fill="#111"/><path d="M148.5 395.4L150.4 396.8L148.5 398.2Z M150.8 395.4V398.2" stroke="#111" stroke-width="0.4" fill="#111"/><path d="M153.5 396.8H157.5M155.5 394.8V398.8" stroke="#111" stroke-width="0.8"/><path d="M160.8 393.8L162.8 399.6H179.2L181.2 393.8" fill="#fff" stroke="#444" stroke-width="0.4"/><path d="M338.4 399.6L340.2 394" stroke="#333" stroke-width="0.4"/><path d="M178.70000000000002 399.6L180.3 394L181.9 399.6" stroke="#333" stroke-width="0.4" fill="none"/><path d="M190.5 399.6L192.1 394L193.7 399.6" stroke="#333" stroke-width="0.4" fill="none"/><path d="M202.3 399.6L203.9 394L205.5 399.6" stroke="#333" stroke-width="0.4" fill="none"/><path d="M214.1 399.6L215.7 394L217.29999999999998 399.6" stroke="#333" stroke-width="0.4" fill="none"/><path d="M225.9 399.6L227.5 394L229.1 399.6" stroke="#333" stroke-width="0.4" fill="none"/><path d="M237.70000000000002 399.6L239.3 394L240.9 399.6" stroke="#333" stroke-width="0.4" fill="none"/><path d="M249.5 399.6L251.1 394L252.7 399.6" stroke="#333" stroke-width="0.4" fill="none"/><path d="M261.29999999999995 399.6L262.9 394L264.5 399.6" stroke="#333" stroke-width="0.4" fill="none"/><path d="M273.09999999999997 399.6L274.7 394L276.3 399.6" stroke="#333" stroke-width="0.4" fill="none"/><path d="M284.9 399.6L286.5 394L288.1 399.6" stroke="#333" stroke-width="0.4" fill="none"/><path d="M297.7 399.6L299.3 394L300.90000000000003 399.6" stroke="#333" stroke-width="0.4" fill="none"/><path d="M318.7 399.6L320.3 394L321.90000000000003 399.6" stroke="#333" stroke-width="0.4" fill="none"/></svg>
<div class="t" style="left:165.2px;top:393.6px;font-size:4.5px;letter-spacing:-0.25px;font-weight:bold;line-height:6.4px;color:#111">Model</div>
<div class="t" style="left:186.2px;top:393.6px;font-size:4.5px;letter-spacing:-0.15px;line-height:6.4px;color:#333;transform:translateX(-50%)">C1</div>
<div class="t" style="left:198px;top:393.6px;font-size:4.5px;letter-spacing:-0.15px;line-height:6.4px;color:#333;transform:translateX(-50%)">C2</div>
<div class="t" style="left:209.8px;top:393.6px;font-size:4.5px;letter-spacing:-0.15px;line-height:6.4px;color:#333;transform:translateX(-50%)">C3</div>
<div class="t" style="left:221.6px;top:393.6px;font-size:4.5px;letter-spacing:-0.15px;line-height:6.4px;color:#333;transform:translateX(-50%)">C4</div>
<div class="t" style="left:233.4px;top:393.6px;font-size:4.5px;letter-spacing:-0.15px;line-height:6.4px;color:#333;transform:translateX(-50%)">C5</div>
<div class="t" style="left:245.2px;top:393.6px;font-size:4.5px;letter-spacing:-0.15px;line-height:6.4px;color:#333;transform:translateX(-50%)">C6</div>
<div class="t" style="left:257px;top:393.6px;font-size:4.5px;letter-spacing:-0.15px;line-height:6.4px;color:#333;transform:translateX(-50%)">C7</div>
<div class="t" style="left:268.8px;top:393.6px;font-size:4.5px;letter-spacing:-0.15px;line-height:6.4px;color:#333;transform:translateX(-50%)">C8</div>
<div class="t" style="left:280.6px;top:393.6px;font-size:4.5px;letter-spacing:-0.15px;line-height:6.4px;color:#333;transform:translateX(-50%)">C9</div>
<div class="t" style="left:292.9px;top:393.6px;font-size:4.5px;letter-spacing:-0.15px;line-height:6.4px;color:#333;transform:translateX(-50%)">C10</div>
<div class="t" style="left:309.8px;top:393.6px;font-size:4.5px;letter-spacing:-0.15px;line-height:6.4px;color:#333;transform:translateX(-50%)">MISC1</div>
<div class="t" style="left:330.2px;top:393.6px;font-size:4.5px;letter-spacing:-0.15px;line-height:6.4px;color:#333;transform:translateX(-50%)">MISC2</div>
<div class="a" style="left:0;top:400px;width:768px;height:2px;background:#4c4c4c"></div>
<div class="a" style="left:0;top:402px;width:8.3px;height:53.6px;background:#b4b5b9"></div>
<svg style="left:0;top:0" width="768" height="467" viewBox="0 0 768 467"><path d="M3 405.5L5 407.5M5 405.5L3 407.5" stroke="#222" stroke-width="0.6"/><path d="M2.8 413.8H5.2L4 415.3Z" fill="#111"/><path d="M8.3 447.2H768" stroke="#c8c8c8" stroke-width="0.6"/><rect x="760.5" y="403" width="6.5" height="43.5" fill="#f4f4f4"/><path d="M762.3 408.2L763.7 406.9L765.1 408.2M762.3 442.6L763.7 443.9L765.1 442.6" stroke="#555" stroke-width="0.5" fill="none"/><rect x="761.8" y="433" width="3.8" height="6.8" fill="#c8c8c8"/></svg>
<div class="t" style="left:9px;top:405.20px;font-family:&quot;Liberation Mono&quot;,monospace;font-size:5.4px;line-height:5.6px;color:#222">Cancel</div>
<div class="t" style="left:9px;top:410.85px;font-family:&quot;Liberation Mono&quot;,monospace;font-size:5.4px;line-height:5.6px;color:#222">Command:</div>
<div class="t" style="left:9px;top:416.50px;font-family:&quot;Liberation Mono&quot;,monospace;font-size:5.4px;line-height:5.6px;color:#222">Cancel</div>
<div class="t" style="left:9px;top:422.15px;font-family:&quot;Liberation Mono&quot;,monospace;font-size:5.4px;line-height:5.6px;color:#222">Command:</div>
<div class="t" style="left:9px;top:427.80px;font-family:&quot;Liberation Mono&quot;,monospace;font-size:5.4px;line-height:5.6px;color:#222">Cancel</div>
<div class="t" style="left:9px;top:433.45px;font-family:&quot;Liberation Mono&quot;,monospace;font-size:5.4px;line-height:5.6px;color:#222">Command:</div>
<div class="t" style="left:9px;top:439.10px;font-family:&quot;Liberation Mono&quot;,monospace;font-size:5.4px;line-height:5.6px;color:#222">Cancel</div>
<div class="t" style="left:9px;top:448.2px;font-family:&quot;Liberation Mono&quot;,monospace;font-size:5px;line-height:6.6px;color:#222">Command:</div>
<svg style="left:0;top:0" width="768" height="467" viewBox="0 0 768 467"><path d="M429.8 457V466.5" stroke="#555" stroke-width="0.5"/><rect x="495" y="457.3" width="9" height="8.6" fill="#d8d8d8"/><path d="M496 465L503 458" stroke="#e04060" stroke-width="0.8"/><path d="M499 465L503 461" stroke="#40c0e0" stroke-width="0.8"/><path d="M508 461.5H514.5" stroke="#e02020" stroke-width="0.7"/><path d="M511.2 458.5V464.5" stroke="#30a030" stroke-width="0.5"/><path d="M523.5 458V461.7M523.5 461.7L520.7 464.5M523.5 461.7L526.3 464.5" stroke="#e8e8e8" stroke-width="0.9"/><path d="M548 458V461.7M548 461.7L545.2 464.5M548 461.7L550.8 464.5" stroke="#e8e8e8" stroke-width="0.9"/><circle cx="550" cy="463" r="1" fill="#5a8ad0"/><path d="M558 458V461.7M558 461.7L555.2 464.5M558 461.7L560.8 464.5" stroke="#e8e8e8" stroke-width="0.9"/><circle cx="560.5" cy="459.5" r="0.8" fill="#f0c040"/><circle cx="567.5" cy="458.5" r="0.45" fill="#c8c8c8"/><circle cx="567.5" cy="460.4" r="0.45" fill="#c8c8c8"/><circle cx="567.5" cy="462.3" r="0.45" fill="#c8c8c8"/><circle cx="567.5" cy="464.2" r="0.45" fill="#c8c8c8"/><circle cx="569.5" cy="458.5" r="0.45" fill="#c8c8c8"/><circle cx="569.5" cy="460.4" r="0.45" fill="#c8c8c8"/><circle cx="569.5" cy="462.3" r="0.45" fill="#c8c8c8"/><circle cx="569.5" cy="464.2" r="0.45" fill="#c8c8c8"/><circle cx="571.5" cy="458.5" r="0.45" fill="#c8c8c8"/><circle cx="571.5" cy="460.4" r="0.45" fill="#c8c8c8"/><circle cx="571.5" cy="462.3" r="0.45" fill="#c8c8c8"/><circle cx="571.5" cy="464.2" r="0.45" fill="#c8c8c8"/><circle cx="567.5" cy="464.2" r="0.6" fill="#e03030"/><path d="M578.5 459.5H584.5M578.5 462.5H584.5M580 458V465M583 458V465" stroke="#d8d8d8" stroke-width="0.7"/><rect x="589" y="457.2" width="9" height="8.8" fill="#d4d4d4"/><path d="M590.5 460H593M591 463H597" stroke="#333" stroke-width="0.7"/><path d="M603.5 458V464.5H609.5" stroke="#30a030" stroke-width="0.7" fill="none"/><path d="M604 464.5Q607 460 610 464" stroke="#e03030" stroke-width="0.6" fill="none"/><circle cx="617.5" cy="461.5" r="3" fill="none" stroke="#e8e8e8" stroke-width="0.8"/><circle cx="619" cy="460.5" r="1.2" fill="#e03030"/><rect x="625" y="457.3" width="9" height="8.6" fill="#c8c8c8"/><rect x="625.5" y="457.3" width="2" height="2" fill="#e03030"/><path d="M638.5 464.5H645M638.5 464.5L644 458.5" stroke="#d8d8d8" stroke-width="0.7"/><path d="M650 459H657M650 461.3H656M650 463.6H657M650 465.5H655" stroke="#e8e8e8" stroke-width="0.8"/><path d="M659.5 457V466.5M676.5 457V466.5M693 457V466.5" stroke="#555" stroke-width="0.5"/><circle cx="699.5" cy="461.5" r="3.6" fill="#1a60d0"/><circle cx="699.5" cy="461.5" r="1.5" fill="#0d2a60"/><circle cx="711.2" cy="458.8" r="1.1" fill="none" stroke="#e8e8e8" stroke-width="0.6"/><path d="M711.2 460V462.5M709.5 465.5L710.3 462.5H712.1L712.9 465.5" stroke="#e8e8e8" stroke-width="0.8" fill="none"/><rect x="720" y="457.5" width="8" height="6.5" fill="#d8e4f4" stroke="#3a6ac0" stroke-width="0.6"/><path d="M721 462L724 460L727 462" stroke="#2a5ab0" stroke-width="0.8" fill="none"/><rect x="730.5" y="457.5" width="5.5" height="4.5" fill="#d8e4f4" stroke="#3a6ac0" stroke-width="0.5"/><rect x="733.5" y="460.8" width="6.5" height="5" fill="#f0f4fa" stroke="#3a6ac0" stroke-width="0.5"/><rect x="743" y="456.8" width="9.2" height="9.6" fill="#b8b8b8"/><circle cx="747.6" cy="461.6" r="3" fill="#e8eef8" stroke="#5a6a80" stroke-width="0.5"/><circle cx="760" cy="461.6" r="3.7" fill="#2aa040"/><path d="M758.2 461.8L759.6 463.2L762 460.2" stroke="#fff" stroke-width="0.8" fill="none"/></svg>
<div class="t" style="left:433px;top:455.6px;font-size:4.5px;line-height:11.4px;color:#f4f4f4">4398.923,6626.962,0.000</div>
<div class="t" style="left:529.5px;top:455.6px;font-size:4.5px;line-height:11.4px;color:#d0d0d0">1:20</div>
<div class="t" style="left:661px;top:455.6px;font-size:4.5px;letter-spacing:-0.25px;line-height:11.4px;color:#e0e0e0">MODEL</div>
<div class="t" style="left:678px;top:455.6px;font-size:4.5px;letter-spacing:-0.3px;line-height:11.4px;color:#7a7a7a">TABLET</div>
<svg style="left:0;top:0" width="200" height="20" viewBox="0 0 200 20"><defs><radialGradient id="lg" cx="0.45" cy="0.35" r="0.7"><stop offset="0" stop-color="#ffffff"/><stop offset="0.7" stop-color="#e8e8e8"/><stop offset="1" stop-color="#c0c0c0"/></radialGradient></defs><circle cx="9" cy="8.2" r="7.4" fill="#2a2e34" opacity="0.5"/><circle cx="9" cy="8.1" r="7" fill="url(#lg)"/><path d="M9 4.2L10.6 7.6L9 11.5L7.4 7.6Z" fill="#f0c030"/><path d="M9 11.5V13" stroke="#888" stroke-width="0.4"/><rect x="21.5" y="2" width="3.5" height="4.5" fill="#fff" opacity="0.9"/><path d="M22.5 4.5L26.5 7.5L24 8.3Z" fill="#f07a40"/><rect x="23.2" y="4.8" width="4" height="3.4" fill="#f08050"/><path d="M30.5 3H34L35.5 4.5V8.3H30.5Z" fill="#fff"/><circle cx="31" cy="2.6" r="1.2" fill="#f0d050"/><path d="M39.3 3.5H42L43 4.5H46.5V8.3H39.3Z" fill="#f0c040"/><path d="M40.5 6L46.5 4.5V8.3H39.3Z" fill="#3aa060"/><rect x="49.2" y="2.2" width="5.5" height="6" fill="#fff" stroke="#6a5aa0" stroke-width="0.6"/><rect x="50.2" y="2.4" width="3.5" height="2" fill="#8a6ab0"/><rect x="50.5" y="5.8" width="3" height="2.2" fill="#6a5aa0"/><rect x="57" y="2" width="5.6" height="6.4" fill="#e8e8f4" stroke="#5a5a8a" stroke-width="0.5"/><path d="M58.5 3.5L61.8 7.8" stroke="#222" stroke-width="0.8"/><path d="M66.5 4.6Q69.5 2.6 71 5.2Q71.2 6.8 69.8 7.6" stroke="#1a50b8" stroke-width="1.1" fill="none"/><path d="M64.6 3.2L67.6 3.4L66.2 6.2Z" fill="#1a50b8"/><path d="M73.3 4.6H75.1L74.2 5.7Z" fill="#111"/><path d="M83.5 4.6Q80.5 2.6 79 5.2Q78.8 6.8 80.2 7.6" stroke="#3a8ad0" stroke-width="1.1" fill="none" opacity="0.85"/><path d="M85.4 3.2L82.4 3.4L83.8 6.2Z" fill="#3a8ad0" opacity="0.85"/><path d="M86.8 4.6H88.6L87.7 5.7Z" fill="#111"/><rect x="91" y="1" width="25" height="7.2" fill="#fff"/><circle cx="94.3" cy="4.6" r="2.6" fill="#1a5ac8"/><circle cx="94.3" cy="4.6" r="1" fill="#fff"/><path d="M114 4.2H115.6L114.8 5.2Z" fill="#111"/><rect x="117.4" y="1" width="65" height="7.2" fill="#fff"/><ellipse cx="121" cy="3.9" rx="1.7" ry="2" fill="#f4ec70"/><rect x="120.3" y="5.7" width="1.4" height="1.6" fill="#888"/><circle cx="127.6" cy="4.6" r="2.1" fill="#e8e040" stroke="#8a8a10" stroke-width="0.6"/><rect x="132.2" y="2.8" width="3.7" height="3.8" fill="#e8e8e8"/><rect x="138.2" y="4.4" width="3.4" height="3" fill="#f0d090"/><path d="M139.8 4.4V3.4A1.3 1.3 0 0 1 142.4 3.4" stroke="#7a8ab0" stroke-width="0.6" fill="none"/><rect x="145.3" y="2.3" width="4.7" height="4.7" fill="#f010e8" stroke="#802080" stroke-width="0.3"/><path d="M179 4.2H180.8L179.9 5.3Z" fill="#111"/><rect x="190.3" y="3.6" width="1.2" height="2.2" fill="#111"/></svg>
<div class="t" style="left:97.8px;top:1px;font-size:4.6px;line-height:7.2px;color:#222">Default</div>
<div class="t" style="left:152.5px;top:1px;font-size:4.5px;letter-spacing:-0.1px;line-height:7.2px;color:#222">G-CONSTRU</div>
</body></html>
